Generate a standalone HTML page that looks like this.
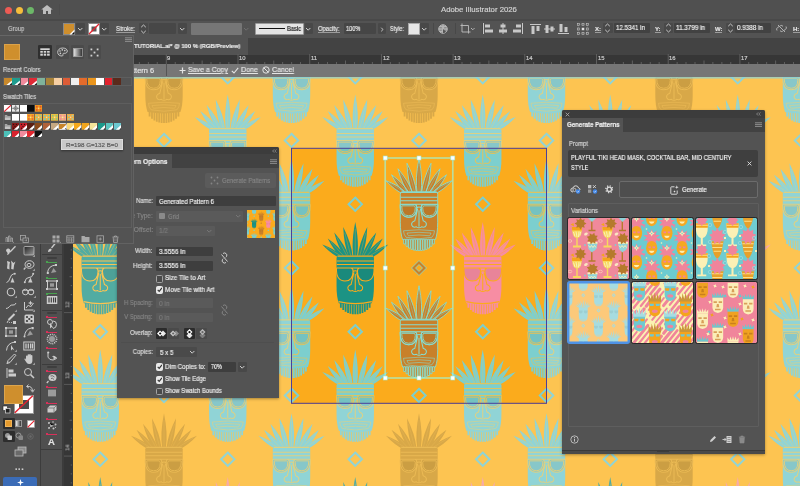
<!DOCTYPE html>
<html><head><meta charset="utf-8"><title>Adobe Illustrator 2026</title>
<style>
*{box-sizing:border-box;margin:0;padding:0}
html,body{width:800px;height:486px;overflow:hidden;background:#535353}
body{font-family:"Liberation Sans",sans-serif;font-size:7px;color:#e6e6e6;position:relative}
.a{position:absolute}
#cv{position:absolute;left:0;top:0}
.t{position:absolute;white-space:nowrap;line-height:1;-webkit-text-stroke:.18px currentColor;will-change:transform}
.fld{position:absolute;background:#3f3f3f;border-radius:1px}
.dfld{position:absolute;background:#595959;border-radius:1px}
.cb{position:absolute;width:7.500px;height:7.500px;border:1px solid #a4a4a4;border-radius:1.500px;background:#4a4a4a}
.cb.on{background:#e8e8e8;border-color:#e8e8e8}
</style></head><body>
<svg id="cv" width="800" height="486" viewBox="0 0 800 486">
<defs><symbol id="hd" overflow="visible"><path d="M-1.9 -11.5Q-4.1 -25.3 0 -46Q4.1 -25.3 1.9 -11.5ZM-6.3 -11.1Q-11.3 -22.3 -12 -41Q-3.7 -24.3 -2.7 -11.9ZM2.7 -11.9Q3.7 -24.3 12 -41Q11.3 -22.3 6.3 -11.1ZM-10.1 -10.7Q-16.9 -19.4 -21 -35.5Q-10.1 -22.8 -6.9 -12.3ZM6.9 -12.3Q10.1 -22.8 21 -35.5Q16.9 -19.4 10.1 -10.7ZM-13.2 -10.4Q-20.9 -16.4 -27.5 -29.5Q-15.5 -21.0 -10.8 -12.6ZM10.8 -12.6Q15.5 -21.0 27.5 -29.5Q20.9 -16.4 13.2 -10.4ZM-15.8 -10.3Q-23.9 -13.7 -33 -23.5Q-20.5 -18.9 -14.2 -12.7ZM14.2 -12.7Q20.5 -18.9 33 -23.5Q23.9 -13.7 15.8 -10.3Z"/><path d="M-16.5 -12.5H16.5Q18.7 -12.5 18.7 -10V18Q18.7 29 16.4 35.3Q0 38.2 -16.4 35.3Q-18.7 29 -18.7 18V-10Q-18.7 -12.5 -16.5 -12.5Z"/><path d="M-15.30 35V39.7H-13.50V35ZM-12.90 35V42.0H-11.10V35ZM-10.50 35V43.8H-8.70V35ZM-8.10 35V45.0H-6.30V35ZM-5.70 35V45.8H-3.90V35ZM-3.30 35V46.2H-1.50V35ZM-0.90 35V46.3H0.90V35ZM1.50 35V46.2H3.30V35ZM3.90 35V45.8H5.70V35ZM6.30 35V45.0H8.10V35ZM8.70 35V43.8H10.50V35ZM11.10 35V42.0H12.90V35ZM13.50 35V39.7H15.30V35Z"/><path d="M-18.8 0.3Q-19.2 13 -10.3 13Q-2.3 13 -2.2 3.2Q-2.2 0.6 -4 0.3ZM18.8 0.3Q19.2 13 10.3 13Q2.3 13 2.2 3.2Q2.2 0.6 4 0.3Z" fill="#000" fill-opacity=".06"/></symbol>
<symbol id="ln" overflow="visible"><path d="M-17.8 -11.9H17.8M-18.5 -7H18.5M-18.5 -3.6H18.5M-19 0H19M-18.8 0.3Q-19.2 13 -10.3 13Q-2.3 13 -2.2 3.2Q-2.2 0.6 -4 0.3M18.8 0.3Q19.2 13 10.3 13Q2.3 13 2.2 3.2Q2.2 0.6 4 0.3M-2.2 3.6Q0 2 2.2 3.6M-1.3 4.5L-4.2 16.5Q-8.2 18 -7.2 21Q-6 23.8 -2.6 22.6Q0 24.5 2.6 22.6Q6 23.8 7.2 21Q8.2 18 4.2 16.5L1.3 4.5M0 6V22.5" fill="none" stroke-width="1.05"/><path d="M0 -12.5L0.0 -39.3M-4.5 -12.5L-10.5 -35.3M4.5 -12.5L10.5 -35.3M-8.5 -12.5L-18.5 -30.9M8.5 -12.5L18.5 -30.9M-12 -12.5L-24.4 -26.1M12 -12.5L24.4 -26.1M-15 -12.5L-29.4 -21.3M15 -12.5L29.4 -21.3" fill="none" stroke-width=".5" stroke-opacity=".7"/></symbol>
<symbol id="mo" overflow="visible"><path d="M-15.5 26.5Q0 24.5 15.5 26.5Q15.5 30 13 33Q0 36 -13 33Q-15.5 30 -15.5 26.5Z M-12 28.8Q0 27.3 12 28.8Q11.5 30.5 10.5 31.5Q0 30 -10.5 31.5Q-11.5 30.5 -12 28.8Z" fill="none" stroke-width=".8" stroke-opacity=".75"/><path d="M-17.3 1.6Q-17.3 11.5 -10.3 11.5Q-3.8 11.5 -3.7 3.6Q-3.7 1.8 -5 1.6ZM17.3 1.6Q17.3 11.5 10.3 11.5Q3.8 11.5 3.7 3.6Q3.7 1.8 5 1.6Z" fill="none" stroke-width=".9"/></symbol>
<symbol id="ch" overflow="visible"><path d="M-16.6 33.6Q0 37.6 16.6 33.6" fill="none" stroke-width="1.1"/></symbol>
<clipPath id="tc"><rect x="291" y="148" width="256" height="256"/></clipPath></defs>
<rect width="800" height="486" fill="#fdc451"/>
<g><g transform="translate(36.5 76.75)"><use href="#hd" fill="#90d4d6"/><use href="#ln" stroke="#e4d07c" stroke-opacity=".9"/><use href="#mo" stroke="#e4d07c"/></g>
<g transform="translate(36.5 204.25)"><use href="#hd" fill="#90d4d6"/><use href="#ln" stroke="#e4d07c" stroke-opacity=".9"/><use href="#mo" stroke="#e4d07c"/></g>
<g transform="translate(36.5 331.75)"><use href="#hd" fill="#90d4d6"/><use href="#ln" stroke="#e4d07c" stroke-opacity=".9"/><use href="#mo" stroke="#e4d07c"/></g>
<g transform="translate(36.5 459.25)"><use href="#hd" fill="#90d4d6"/><use href="#ln" stroke="#e4d07c" stroke-opacity=".9"/><use href="#mo" stroke="#e4d07c"/></g>
<path d="M36.5 133.8L43.2 140.5L36.5 147.2L29.8 140.5Z" fill="none" stroke="#90d4d6" stroke-width="2"/>
<path d="M36.5 261.3L43.2 268.0L36.5 274.7L29.8 268.0Z" fill="none" stroke="#90d4d6" stroke-width="2"/>
<path d="M36.5 388.8L43.2 395.5L36.5 402.2L29.8 395.5Z" fill="none" stroke="#90d4d6" stroke-width="2"/>
<g transform="translate(100.25 13.0)"><use href="#hd" fill="#52aca2"/><use href="#ln" stroke="#fdc451"/><use href="#ch" stroke="#fdc451"/></g>
<g transform="translate(100.25 140.5)"><use href="#hd" fill="#90d4d6"/><use href="#ln" stroke="#e4d07c" stroke-opacity=".9"/><use href="#mo" stroke="#e4d07c"/></g>
<g transform="translate(100.25 268.0)"><use href="#hd" fill="#52aca2"/><use href="#ln" stroke="#fdc451"/><use href="#ch" stroke="#fdc451"/></g>
<g transform="translate(100.25 395.5)"><use href="#hd" fill="#90d4d6"/><use href="#ln" stroke="#e4d07c" stroke-opacity=".9"/><use href="#mo" stroke="#e4d07c"/></g>
<g transform="translate(100.25 523.0)"><use href="#hd" fill="#52aca2"/><use href="#ln" stroke="#fdc451"/><use href="#ch" stroke="#fdc451"/></g>
<path d="M100.25 70.05L106.95 76.75L100.25 83.45L93.55 76.75Z" fill="none" stroke="#90d4d6" stroke-width="2"/>
<path d="M100.25 197.55L106.95 204.25L100.25 210.95L93.55 204.25Z" fill="none" stroke="#90d4d6" stroke-width="2"/>
<path d="M100.25 325.05L106.95 331.75L100.25 338.45L93.55 331.75Z" fill="none" stroke="#90d4d6" stroke-width="2"/>
<path d="M100.25 452.55L106.95 459.25L100.25 465.95L93.55 459.25Z" fill="none" stroke="#90d4d6" stroke-width="2"/>
<g transform="translate(164.0 76.75)"><use href="#hd" fill="#d8a848"/><use href="#ln" stroke="#ecbb55" stroke-opacity=".9"/><use href="#mo" stroke="#ecbb55"/></g>
<g transform="translate(164.0 204.25)"><use href="#hd" fill="#d8a848"/><use href="#ln" stroke="#ecbb55" stroke-opacity=".9"/><use href="#mo" stroke="#ecbb55"/></g>
<g transform="translate(164.0 331.75)"><use href="#hd" fill="#d8a848"/><use href="#ln" stroke="#ecbb55" stroke-opacity=".9"/><use href="#mo" stroke="#ecbb55"/></g>
<g transform="translate(164.0 459.25)"><use href="#hd" fill="#d8a848"/><use href="#ln" stroke="#ecbb55" stroke-opacity=".9"/><use href="#mo" stroke="#ecbb55"/></g>
<path d="M164.0 133.8L170.7 140.5L164.0 147.2L157.3 140.5Z" fill="none" stroke="#90d4d6" stroke-width="2"/>
<path d="M164.0 261.3L170.7 268.0L164.0 274.7L157.3 268.0Z" fill="none" stroke="#d8a848" stroke-width="2"/>
<path d="M164.0 388.8L170.7 395.5L164.0 402.2L157.3 395.5Z" fill="none" stroke="#90d4d6" stroke-width="2"/>
<g transform="translate(227.75 13.0)"><use href="#hd" fill="#f6a9b0"/><use href="#ln" stroke="#fdc451"/><use href="#ch" stroke="#fdc451"/></g>
<g transform="translate(227.75 140.5)"><use href="#hd" fill="#90d4d6"/><use href="#ln" stroke="#e4d07c" stroke-opacity=".9"/><use href="#mo" stroke="#e4d07c"/></g>
<g transform="translate(227.75 268.0)"><use href="#hd" fill="#f6a9b0"/><use href="#ln" stroke="#fdc451"/><use href="#ch" stroke="#fdc451"/></g>
<g transform="translate(227.75 395.5)"><use href="#hd" fill="#90d4d6"/><use href="#ln" stroke="#e4d07c" stroke-opacity=".9"/><use href="#mo" stroke="#e4d07c"/></g>
<g transform="translate(227.75 523.0)"><use href="#hd" fill="#f6a9b0"/><use href="#ln" stroke="#fdc451"/><use href="#ch" stroke="#fdc451"/></g>
<path d="M227.75 70.05L234.45 76.75L227.75 83.45L221.05 76.75Z" fill="none" stroke="#90d4d6" stroke-width="2"/>
<path d="M227.75 197.55L234.45 204.25L227.75 210.95L221.05 204.25Z" fill="none" stroke="#90d4d6" stroke-width="2"/>
<path d="M227.75 325.05L234.45 331.75L227.75 338.45L221.05 331.75Z" fill="none" stroke="#90d4d6" stroke-width="2"/>
<path d="M227.75 452.55L234.45 459.25L227.75 465.95L221.05 459.25Z" fill="none" stroke="#90d4d6" stroke-width="2"/>
<g transform="translate(291.5 76.75)"><use href="#hd" fill="#90d4d6"/><use href="#ln" stroke="#e4d07c" stroke-opacity=".9"/><use href="#mo" stroke="#e4d07c"/></g>
<g transform="translate(291.5 204.25)"><use href="#hd" fill="#90d4d6"/><use href="#ln" stroke="#e4d07c" stroke-opacity=".9"/><use href="#mo" stroke="#e4d07c"/></g>
<g transform="translate(291.5 331.75)"><use href="#hd" fill="#90d4d6"/><use href="#ln" stroke="#e4d07c" stroke-opacity=".9"/><use href="#mo" stroke="#e4d07c"/></g>
<g transform="translate(291.5 459.25)"><use href="#hd" fill="#90d4d6"/><use href="#ln" stroke="#e4d07c" stroke-opacity=".9"/><use href="#mo" stroke="#e4d07c"/></g>
<path d="M291.5 133.8L298.2 140.5L291.5 147.2L284.8 140.5Z" fill="none" stroke="#90d4d6" stroke-width="2"/>
<path d="M291.5 261.3L298.2 268.0L291.5 274.7L284.8 268.0Z" fill="none" stroke="#90d4d6" stroke-width="2"/>
<path d="M291.5 388.8L298.2 395.5L291.5 402.2L284.8 395.5Z" fill="none" stroke="#90d4d6" stroke-width="2"/>
<g transform="translate(355.25 13.0)"><use href="#hd" fill="#52aca2"/><use href="#ln" stroke="#fdc451"/><use href="#ch" stroke="#fdc451"/></g>
<g transform="translate(355.25 140.5)"><use href="#hd" fill="#90d4d6"/><use href="#ln" stroke="#e4d07c" stroke-opacity=".9"/><use href="#mo" stroke="#e4d07c"/></g>
<g transform="translate(355.25 268.0)"><use href="#hd" fill="#52aca2"/><use href="#ln" stroke="#fdc451"/><use href="#ch" stroke="#fdc451"/></g>
<g transform="translate(355.25 395.5)"><use href="#hd" fill="#90d4d6"/><use href="#ln" stroke="#e4d07c" stroke-opacity=".9"/><use href="#mo" stroke="#e4d07c"/></g>
<g transform="translate(355.25 523.0)"><use href="#hd" fill="#52aca2"/><use href="#ln" stroke="#fdc451"/><use href="#ch" stroke="#fdc451"/></g>
<path d="M355.25 70.05L361.95 76.75L355.25 83.45L348.55 76.75Z" fill="none" stroke="#90d4d6" stroke-width="2"/>
<path d="M355.25 197.55L361.95 204.25L355.25 210.95L348.55 204.25Z" fill="none" stroke="#90d4d6" stroke-width="2"/>
<path d="M355.25 325.05L361.95 331.75L355.25 338.45L348.55 331.75Z" fill="none" stroke="#90d4d6" stroke-width="2"/>
<path d="M355.25 452.55L361.95 459.25L355.25 465.95L348.55 459.25Z" fill="none" stroke="#90d4d6" stroke-width="2"/>
<g transform="translate(419.0 76.75)"><use href="#hd" fill="#d8a848"/><use href="#ln" stroke="#ecbb55" stroke-opacity=".9"/><use href="#mo" stroke="#ecbb55"/></g>
<g transform="translate(419.0 204.25)"><use href="#hd" fill="#d8a848"/><use href="#ln" stroke="#ecbb55" stroke-opacity=".9"/><use href="#mo" stroke="#ecbb55"/></g>
<g transform="translate(419.0 331.75)"><use href="#hd" fill="#d8a848"/><use href="#ln" stroke="#ecbb55" stroke-opacity=".9"/><use href="#mo" stroke="#ecbb55"/></g>
<g transform="translate(419.0 459.25)"><use href="#hd" fill="#d8a848"/><use href="#ln" stroke="#ecbb55" stroke-opacity=".9"/><use href="#mo" stroke="#ecbb55"/></g>
<path d="M419.0 133.8L425.7 140.5L419.0 147.2L412.3 140.5Z" fill="none" stroke="#90d4d6" stroke-width="2"/>
<path d="M419.0 261.3L425.7 268.0L419.0 274.7L412.3 268.0Z" fill="none" stroke="#d8a848" stroke-width="2"/>
<path d="M419.0 388.8L425.7 395.5L419.0 402.2L412.3 395.5Z" fill="none" stroke="#90d4d6" stroke-width="2"/>
<g transform="translate(482.75 13.0)"><use href="#hd" fill="#f6a9b0"/><use href="#ln" stroke="#fdc451"/><use href="#ch" stroke="#fdc451"/></g>
<g transform="translate(482.75 140.5)"><use href="#hd" fill="#90d4d6"/><use href="#ln" stroke="#e4d07c" stroke-opacity=".9"/><use href="#mo" stroke="#e4d07c"/></g>
<g transform="translate(482.75 268.0)"><use href="#hd" fill="#f6a9b0"/><use href="#ln" stroke="#fdc451"/><use href="#ch" stroke="#fdc451"/></g>
<g transform="translate(482.75 395.5)"><use href="#hd" fill="#90d4d6"/><use href="#ln" stroke="#e4d07c" stroke-opacity=".9"/><use href="#mo" stroke="#e4d07c"/></g>
<g transform="translate(482.75 523.0)"><use href="#hd" fill="#f6a9b0"/><use href="#ln" stroke="#fdc451"/><use href="#ch" stroke="#fdc451"/></g>
<path d="M482.75 70.05L489.45 76.75L482.75 83.45L476.05 76.75Z" fill="none" stroke="#90d4d6" stroke-width="2"/>
<path d="M482.75 197.55L489.45 204.25L482.75 210.95L476.05 204.25Z" fill="none" stroke="#90d4d6" stroke-width="2"/>
<path d="M482.75 325.05L489.45 331.75L482.75 338.45L476.05 331.75Z" fill="none" stroke="#90d4d6" stroke-width="2"/>
<path d="M482.75 452.55L489.45 459.25L482.75 465.95L476.05 459.25Z" fill="none" stroke="#90d4d6" stroke-width="2"/>
<g transform="translate(546.5 76.75)"><use href="#hd" fill="#90d4d6"/><use href="#ln" stroke="#e4d07c" stroke-opacity=".9"/><use href="#mo" stroke="#e4d07c"/></g>
<g transform="translate(546.5 204.25)"><use href="#hd" fill="#90d4d6"/><use href="#ln" stroke="#e4d07c" stroke-opacity=".9"/><use href="#mo" stroke="#e4d07c"/></g>
<g transform="translate(546.5 331.75)"><use href="#hd" fill="#90d4d6"/><use href="#ln" stroke="#e4d07c" stroke-opacity=".9"/><use href="#mo" stroke="#e4d07c"/></g>
<g transform="translate(546.5 459.25)"><use href="#hd" fill="#90d4d6"/><use href="#ln" stroke="#e4d07c" stroke-opacity=".9"/><use href="#mo" stroke="#e4d07c"/></g>
<path d="M546.5 133.8L553.2 140.5L546.5 147.2L539.8 140.5Z" fill="none" stroke="#90d4d6" stroke-width="2"/>
<path d="M546.5 261.3L553.2 268.0L546.5 274.7L539.8 268.0Z" fill="none" stroke="#90d4d6" stroke-width="2"/>
<path d="M546.5 388.8L553.2 395.5L546.5 402.2L539.8 395.5Z" fill="none" stroke="#90d4d6" stroke-width="2"/>
<g transform="translate(610.25 13.0)"><use href="#hd" fill="#52aca2"/><use href="#ln" stroke="#fdc451"/><use href="#ch" stroke="#fdc451"/></g>
<g transform="translate(610.25 140.5)"><use href="#hd" fill="#90d4d6"/><use href="#ln" stroke="#e4d07c" stroke-opacity=".9"/><use href="#mo" stroke="#e4d07c"/></g>
<g transform="translate(610.25 268.0)"><use href="#hd" fill="#52aca2"/><use href="#ln" stroke="#fdc451"/><use href="#ch" stroke="#fdc451"/></g>
<g transform="translate(610.25 395.5)"><use href="#hd" fill="#90d4d6"/><use href="#ln" stroke="#e4d07c" stroke-opacity=".9"/><use href="#mo" stroke="#e4d07c"/></g>
<g transform="translate(610.25 523.0)"><use href="#hd" fill="#52aca2"/><use href="#ln" stroke="#fdc451"/><use href="#ch" stroke="#fdc451"/></g>
<path d="M610.25 70.05L616.95 76.75L610.25 83.45L603.55 76.75Z" fill="none" stroke="#90d4d6" stroke-width="2"/>
<path d="M610.25 197.55L616.95 204.25L610.25 210.95L603.55 204.25Z" fill="none" stroke="#90d4d6" stroke-width="2"/>
<path d="M610.25 325.05L616.95 331.75L610.25 338.45L603.55 331.75Z" fill="none" stroke="#90d4d6" stroke-width="2"/>
<path d="M610.25 452.55L616.95 459.25L610.25 465.95L603.55 459.25Z" fill="none" stroke="#90d4d6" stroke-width="2"/>
<g transform="translate(674.0 76.75)"><use href="#hd" fill="#d8a848"/><use href="#ln" stroke="#ecbb55" stroke-opacity=".9"/><use href="#mo" stroke="#ecbb55"/></g>
<g transform="translate(674.0 204.25)"><use href="#hd" fill="#d8a848"/><use href="#ln" stroke="#ecbb55" stroke-opacity=".9"/><use href="#mo" stroke="#ecbb55"/></g>
<g transform="translate(674.0 331.75)"><use href="#hd" fill="#d8a848"/><use href="#ln" stroke="#ecbb55" stroke-opacity=".9"/><use href="#mo" stroke="#ecbb55"/></g>
<g transform="translate(674.0 459.25)"><use href="#hd" fill="#d8a848"/><use href="#ln" stroke="#ecbb55" stroke-opacity=".9"/><use href="#mo" stroke="#ecbb55"/></g>
<path d="M674.0 133.8L680.7 140.5L674.0 147.2L667.3 140.5Z" fill="none" stroke="#90d4d6" stroke-width="2"/>
<path d="M674.0 261.3L680.7 268.0L674.0 274.7L667.3 268.0Z" fill="none" stroke="#d8a848" stroke-width="2"/>
<path d="M674.0 388.8L680.7 395.5L674.0 402.2L667.3 395.5Z" fill="none" stroke="#90d4d6" stroke-width="2"/>
<g transform="translate(737.75 13.0)"><use href="#hd" fill="#f6a9b0"/><use href="#ln" stroke="#fdc451"/><use href="#ch" stroke="#fdc451"/></g>
<g transform="translate(737.75 140.5)"><use href="#hd" fill="#90d4d6"/><use href="#ln" stroke="#e4d07c" stroke-opacity=".9"/><use href="#mo" stroke="#e4d07c"/></g>
<g transform="translate(737.75 268.0)"><use href="#hd" fill="#f6a9b0"/><use href="#ln" stroke="#fdc451"/><use href="#ch" stroke="#fdc451"/></g>
<g transform="translate(737.75 395.5)"><use href="#hd" fill="#90d4d6"/><use href="#ln" stroke="#e4d07c" stroke-opacity=".9"/><use href="#mo" stroke="#e4d07c"/></g>
<g transform="translate(737.75 523.0)"><use href="#hd" fill="#f6a9b0"/><use href="#ln" stroke="#fdc451"/><use href="#ch" stroke="#fdc451"/></g>
<path d="M737.75 70.05L744.45 76.75L737.75 83.45L731.05 76.75Z" fill="none" stroke="#90d4d6" stroke-width="2"/>
<path d="M737.75 197.55L744.45 204.25L737.75 210.95L731.05 204.25Z" fill="none" stroke="#90d4d6" stroke-width="2"/>
<path d="M737.75 325.05L744.45 331.75L737.75 338.45L731.05 331.75Z" fill="none" stroke="#90d4d6" stroke-width="2"/>
<path d="M737.75 452.55L744.45 459.25L737.75 465.95L731.05 459.25Z" fill="none" stroke="#90d4d6" stroke-width="2"/>
<g transform="translate(801.5 76.75)"><use href="#hd" fill="#90d4d6"/><use href="#ln" stroke="#e4d07c" stroke-opacity=".9"/><use href="#mo" stroke="#e4d07c"/></g>
<g transform="translate(801.5 204.25)"><use href="#hd" fill="#90d4d6"/><use href="#ln" stroke="#e4d07c" stroke-opacity=".9"/><use href="#mo" stroke="#e4d07c"/></g>
<g transform="translate(801.5 331.75)"><use href="#hd" fill="#90d4d6"/><use href="#ln" stroke="#e4d07c" stroke-opacity=".9"/><use href="#mo" stroke="#e4d07c"/></g>
<g transform="translate(801.5 459.25)"><use href="#hd" fill="#90d4d6"/><use href="#ln" stroke="#e4d07c" stroke-opacity=".9"/><use href="#mo" stroke="#e4d07c"/></g>
<path d="M801.5 133.8L808.2 140.5L801.5 147.2L794.8 140.5Z" fill="none" stroke="#90d4d6" stroke-width="2"/>
<path d="M801.5 261.3L808.2 268.0L801.5 274.7L794.8 268.0Z" fill="none" stroke="#90d4d6" stroke-width="2"/>
<path d="M801.5 388.8L808.2 395.5L801.5 402.2L794.8 395.5Z" fill="none" stroke="#90d4d6" stroke-width="2"/></g>
<g clip-path="url(#tc)"><rect x="291" y="148" width="256" height="256" fill="#fbab1c"/>
<g transform="translate(36.5 76.75)"><use href="#hd" fill="#7ccfce"/><use href="#ln" stroke="#e8c255" stroke-opacity=".9"/><use href="#mo" stroke="#e8c255"/></g>
<g transform="translate(36.5 204.25)"><use href="#hd" fill="#7ccfce"/><use href="#ln" stroke="#e8c255" stroke-opacity=".9"/><use href="#mo" stroke="#e8c255"/></g>
<g transform="translate(36.5 331.75)"><use href="#hd" fill="#7ccfce"/><use href="#ln" stroke="#e8c255" stroke-opacity=".9"/><use href="#mo" stroke="#e8c255"/></g>
<g transform="translate(36.5 459.25)"><use href="#hd" fill="#7ccfce"/><use href="#ln" stroke="#e8c255" stroke-opacity=".9"/><use href="#mo" stroke="#e8c255"/></g>
<path d="M36.5 133.8L43.2 140.5L36.5 147.2L29.8 140.5Z" fill="none" stroke="#7ccfce" stroke-width="2"/>
<path d="M36.5 261.3L43.2 268.0L36.5 274.7L29.8 268.0Z" fill="none" stroke="#7ccfce" stroke-width="2"/>
<path d="M36.5 388.8L43.2 395.5L36.5 402.2L29.8 395.5Z" fill="none" stroke="#7ccfce" stroke-width="2"/>
<g transform="translate(100.25 13.0)"><use href="#hd" fill="#1c9384"/><use href="#ln" stroke="#fbab1c"/><use href="#ch" stroke="#fbab1c"/></g>
<g transform="translate(100.25 140.5)"><use href="#hd" fill="#7ccfce"/><use href="#ln" stroke="#e8c255" stroke-opacity=".9"/><use href="#mo" stroke="#e8c255"/></g>
<g transform="translate(100.25 268.0)"><use href="#hd" fill="#1c9384"/><use href="#ln" stroke="#fbab1c"/><use href="#ch" stroke="#fbab1c"/></g>
<g transform="translate(100.25 395.5)"><use href="#hd" fill="#7ccfce"/><use href="#ln" stroke="#e8c255" stroke-opacity=".9"/><use href="#mo" stroke="#e8c255"/></g>
<g transform="translate(100.25 523.0)"><use href="#hd" fill="#1c9384"/><use href="#ln" stroke="#fbab1c"/><use href="#ch" stroke="#fbab1c"/></g>
<path d="M100.25 70.05L106.95 76.75L100.25 83.45L93.55 76.75Z" fill="none" stroke="#7ccfce" stroke-width="2"/>
<path d="M100.25 197.55L106.95 204.25L100.25 210.95L93.55 204.25Z" fill="none" stroke="#7ccfce" stroke-width="2"/>
<path d="M100.25 325.05L106.95 331.75L100.25 338.45L93.55 331.75Z" fill="none" stroke="#7ccfce" stroke-width="2"/>
<path d="M100.25 452.55L106.95 459.25L100.25 465.95L93.55 459.25Z" fill="none" stroke="#7ccfce" stroke-width="2"/>
<g transform="translate(164.0 76.75)"><use href="#hd" fill="#c8802a"/><use href="#ln" stroke="#86dccf" stroke-opacity=".9"/><use href="#mo" stroke="#86dccf"/></g>
<g transform="translate(164.0 204.25)"><use href="#hd" fill="#c8802a"/><use href="#ln" stroke="#86dccf" stroke-opacity=".9"/><use href="#mo" stroke="#86dccf"/></g>
<g transform="translate(164.0 331.75)"><use href="#hd" fill="#c8802a"/><use href="#ln" stroke="#86dccf" stroke-opacity=".9"/><use href="#mo" stroke="#86dccf"/></g>
<g transform="translate(164.0 459.25)"><use href="#hd" fill="#c8802a"/><use href="#ln" stroke="#86dccf" stroke-opacity=".9"/><use href="#mo" stroke="#86dccf"/></g>
<path d="M164.0 133.8L170.7 140.5L164.0 147.2L157.3 140.5Z" fill="none" stroke="#7ccfce" stroke-width="2"/>
<path d="M164.0 260.5L171.5 268.0L164.0 275.5L156.5 268.0Z M164.0 264.5L167.5 268.0L164.0 271.5L160.5 268.0Z" fill="#c8802a" fill-rule="evenodd" stroke="#86dccf" stroke-width=".8"/>
<path d="M164.0 388.8L170.7 395.5L164.0 402.2L157.3 395.5Z" fill="none" stroke="#7ccfce" stroke-width="2"/>
<g transform="translate(227.75 13.0)"><use href="#hd" fill="#f78da3"/><use href="#ln" stroke="#fbab1c"/><use href="#ch" stroke="#fbab1c"/></g>
<g transform="translate(227.75 140.5)"><use href="#hd" fill="#7ccfce"/><use href="#ln" stroke="#e8c255" stroke-opacity=".9"/><use href="#mo" stroke="#e8c255"/></g>
<g transform="translate(227.75 268.0)"><use href="#hd" fill="#f78da3"/><use href="#ln" stroke="#fbab1c"/><use href="#ch" stroke="#fbab1c"/></g>
<g transform="translate(227.75 395.5)"><use href="#hd" fill="#7ccfce"/><use href="#ln" stroke="#e8c255" stroke-opacity=".9"/><use href="#mo" stroke="#e8c255"/></g>
<g transform="translate(227.75 523.0)"><use href="#hd" fill="#f78da3"/><use href="#ln" stroke="#fbab1c"/><use href="#ch" stroke="#fbab1c"/></g>
<path d="M227.75 70.05L234.45 76.75L227.75 83.45L221.05 76.75Z" fill="none" stroke="#7ccfce" stroke-width="2"/>
<path d="M227.75 197.55L234.45 204.25L227.75 210.95L221.05 204.25Z" fill="none" stroke="#7ccfce" stroke-width="2"/>
<path d="M227.75 325.05L234.45 331.75L227.75 338.45L221.05 331.75Z" fill="none" stroke="#7ccfce" stroke-width="2"/>
<path d="M227.75 452.55L234.45 459.25L227.75 465.95L221.05 459.25Z" fill="none" stroke="#7ccfce" stroke-width="2"/>
<g transform="translate(291.5 76.75)"><use href="#hd" fill="#7ccfce"/><use href="#ln" stroke="#e8c255" stroke-opacity=".9"/><use href="#mo" stroke="#e8c255"/></g>
<g transform="translate(291.5 204.25)"><use href="#hd" fill="#7ccfce"/><use href="#ln" stroke="#e8c255" stroke-opacity=".9"/><use href="#mo" stroke="#e8c255"/></g>
<g transform="translate(291.5 331.75)"><use href="#hd" fill="#7ccfce"/><use href="#ln" stroke="#e8c255" stroke-opacity=".9"/><use href="#mo" stroke="#e8c255"/></g>
<g transform="translate(291.5 459.25)"><use href="#hd" fill="#7ccfce"/><use href="#ln" stroke="#e8c255" stroke-opacity=".9"/><use href="#mo" stroke="#e8c255"/></g>
<path d="M291.5 133.8L298.2 140.5L291.5 147.2L284.8 140.5Z" fill="none" stroke="#7ccfce" stroke-width="2"/>
<path d="M291.5 261.3L298.2 268.0L291.5 274.7L284.8 268.0Z" fill="none" stroke="#7ccfce" stroke-width="2"/>
<path d="M291.5 388.8L298.2 395.5L291.5 402.2L284.8 395.5Z" fill="none" stroke="#7ccfce" stroke-width="2"/>
<g transform="translate(355.25 13.0)"><use href="#hd" fill="#1c9384"/><use href="#ln" stroke="#fbab1c"/><use href="#ch" stroke="#fbab1c"/></g>
<g transform="translate(355.25 140.5)"><use href="#hd" fill="#7ccfce"/><use href="#ln" stroke="#e8c255" stroke-opacity=".9"/><use href="#mo" stroke="#e8c255"/></g>
<g transform="translate(355.25 268.0)"><use href="#hd" fill="#1c9384"/><use href="#ln" stroke="#fbab1c"/><use href="#ch" stroke="#fbab1c"/></g>
<g transform="translate(355.25 395.5)"><use href="#hd" fill="#7ccfce"/><use href="#ln" stroke="#e8c255" stroke-opacity=".9"/><use href="#mo" stroke="#e8c255"/></g>
<g transform="translate(355.25 523.0)"><use href="#hd" fill="#1c9384"/><use href="#ln" stroke="#fbab1c"/><use href="#ch" stroke="#fbab1c"/></g>
<path d="M355.25 70.05L361.95 76.75L355.25 83.45L348.55 76.75Z" fill="none" stroke="#7ccfce" stroke-width="2"/>
<path d="M355.25 197.55L361.95 204.25L355.25 210.95L348.55 204.25Z" fill="none" stroke="#7ccfce" stroke-width="2"/>
<path d="M355.25 325.05L361.95 331.75L355.25 338.45L348.55 331.75Z" fill="none" stroke="#7ccfce" stroke-width="2"/>
<path d="M355.25 452.55L361.95 459.25L355.25 465.95L348.55 459.25Z" fill="none" stroke="#7ccfce" stroke-width="2"/>
<g transform="translate(419.0 76.75)"><use href="#hd" fill="#c8802a" stroke="#86dccf" stroke-width=".9"/><use href="#ln" stroke="#86dccf"/><use href="#mo" stroke="#86dccf"/></g>
<g transform="translate(419.0 204.25)"><use href="#hd" fill="#c8802a" stroke="#86dccf" stroke-width=".9"/><use href="#ln" stroke="#86dccf"/><use href="#mo" stroke="#86dccf"/></g>
<g transform="translate(419.0 331.75)"><use href="#hd" fill="#c8802a" stroke="#86dccf" stroke-width=".9"/><use href="#ln" stroke="#86dccf"/><use href="#mo" stroke="#86dccf"/></g>
<g transform="translate(419.0 459.25)"><use href="#hd" fill="#c8802a" stroke="#86dccf" stroke-width=".9"/><use href="#ln" stroke="#86dccf"/><use href="#mo" stroke="#86dccf"/></g>
<path d="M419.0 133.8L425.7 140.5L419.0 147.2L412.3 140.5Z" fill="none" stroke="#7ccfce" stroke-width="2"/>
<path d="M419.0 260.5L426.5 268.0L419.0 275.5L411.5 268.0Z M419.0 264.5L422.5 268.0L419.0 271.5L415.5 268.0Z" fill="#c8802a" fill-rule="evenodd" stroke="#86dccf" stroke-width=".8"/>
<path d="M419.0 388.8L425.7 395.5L419.0 402.2L412.3 395.5Z" fill="none" stroke="#7ccfce" stroke-width="2"/>
<g transform="translate(482.75 13.0)"><use href="#hd" fill="#f78da3"/><use href="#ln" stroke="#fbab1c"/><use href="#ch" stroke="#fbab1c"/></g>
<g transform="translate(482.75 140.5)"><use href="#hd" fill="#7ccfce"/><use href="#ln" stroke="#e8c255" stroke-opacity=".9"/><use href="#mo" stroke="#e8c255"/></g>
<g transform="translate(482.75 268.0)"><use href="#hd" fill="#f78da3"/><use href="#ln" stroke="#fbab1c"/><use href="#ch" stroke="#fbab1c"/></g>
<g transform="translate(482.75 395.5)"><use href="#hd" fill="#7ccfce"/><use href="#ln" stroke="#e8c255" stroke-opacity=".9"/><use href="#mo" stroke="#e8c255"/></g>
<g transform="translate(482.75 523.0)"><use href="#hd" fill="#f78da3"/><use href="#ln" stroke="#fbab1c"/><use href="#ch" stroke="#fbab1c"/></g>
<path d="M482.75 70.05L489.45 76.75L482.75 83.45L476.05 76.75Z" fill="none" stroke="#7ccfce" stroke-width="2"/>
<path d="M482.75 197.55L489.45 204.25L482.75 210.95L476.05 204.25Z" fill="none" stroke="#7ccfce" stroke-width="2"/>
<path d="M482.75 325.05L489.45 331.75L482.75 338.45L476.05 331.75Z" fill="none" stroke="#7ccfce" stroke-width="2"/>
<path d="M482.75 452.55L489.45 459.25L482.75 465.95L476.05 459.25Z" fill="none" stroke="#7ccfce" stroke-width="2"/>
<g transform="translate(546.5 76.75)"><use href="#hd" fill="#7ccfce"/><use href="#ln" stroke="#e8c255" stroke-opacity=".9"/><use href="#mo" stroke="#e8c255"/></g>
<g transform="translate(546.5 204.25)"><use href="#hd" fill="#7ccfce"/><use href="#ln" stroke="#e8c255" stroke-opacity=".9"/><use href="#mo" stroke="#e8c255"/></g>
<g transform="translate(546.5 331.75)"><use href="#hd" fill="#7ccfce"/><use href="#ln" stroke="#e8c255" stroke-opacity=".9"/><use href="#mo" stroke="#e8c255"/></g>
<g transform="translate(546.5 459.25)"><use href="#hd" fill="#7ccfce"/><use href="#ln" stroke="#e8c255" stroke-opacity=".9"/><use href="#mo" stroke="#e8c255"/></g>
<path d="M546.5 133.8L553.2 140.5L546.5 147.2L539.8 140.5Z" fill="none" stroke="#7ccfce" stroke-width="2"/>
<path d="M546.5 261.3L553.2 268.0L546.5 274.7L539.8 268.0Z" fill="none" stroke="#7ccfce" stroke-width="2"/>
<path d="M546.5 388.8L553.2 395.5L546.5 402.2L539.8 395.5Z" fill="none" stroke="#7ccfce" stroke-width="2"/>
<g transform="translate(610.25 13.0)"><use href="#hd" fill="#1c9384"/><use href="#ln" stroke="#fbab1c"/><use href="#ch" stroke="#fbab1c"/></g>
<g transform="translate(610.25 140.5)"><use href="#hd" fill="#7ccfce"/><use href="#ln" stroke="#e8c255" stroke-opacity=".9"/><use href="#mo" stroke="#e8c255"/></g>
<g transform="translate(610.25 268.0)"><use href="#hd" fill="#1c9384"/><use href="#ln" stroke="#fbab1c"/><use href="#ch" stroke="#fbab1c"/></g>
<g transform="translate(610.25 395.5)"><use href="#hd" fill="#7ccfce"/><use href="#ln" stroke="#e8c255" stroke-opacity=".9"/><use href="#mo" stroke="#e8c255"/></g>
<g transform="translate(610.25 523.0)"><use href="#hd" fill="#1c9384"/><use href="#ln" stroke="#fbab1c"/><use href="#ch" stroke="#fbab1c"/></g>
<path d="M610.25 70.05L616.95 76.75L610.25 83.45L603.55 76.75Z" fill="none" stroke="#7ccfce" stroke-width="2"/>
<path d="M610.25 197.55L616.95 204.25L610.25 210.95L603.55 204.25Z" fill="none" stroke="#7ccfce" stroke-width="2"/>
<path d="M610.25 325.05L616.95 331.75L610.25 338.45L603.55 331.75Z" fill="none" stroke="#7ccfce" stroke-width="2"/>
<path d="M610.25 452.55L616.95 459.25L610.25 465.95L603.55 459.25Z" fill="none" stroke="#7ccfce" stroke-width="2"/>
<g transform="translate(674.0 76.75)"><use href="#hd" fill="#c8802a"/><use href="#ln" stroke="#86dccf" stroke-opacity=".9"/><use href="#mo" stroke="#86dccf"/></g>
<g transform="translate(674.0 204.25)"><use href="#hd" fill="#c8802a"/><use href="#ln" stroke="#86dccf" stroke-opacity=".9"/><use href="#mo" stroke="#86dccf"/></g>
<g transform="translate(674.0 331.75)"><use href="#hd" fill="#c8802a"/><use href="#ln" stroke="#86dccf" stroke-opacity=".9"/><use href="#mo" stroke="#86dccf"/></g>
<g transform="translate(674.0 459.25)"><use href="#hd" fill="#c8802a"/><use href="#ln" stroke="#86dccf" stroke-opacity=".9"/><use href="#mo" stroke="#86dccf"/></g>
<path d="M674.0 133.8L680.7 140.5L674.0 147.2L667.3 140.5Z" fill="none" stroke="#7ccfce" stroke-width="2"/>
<path d="M674.0 260.5L681.5 268.0L674.0 275.5L666.5 268.0Z M674.0 264.5L677.5 268.0L674.0 271.5L670.5 268.0Z" fill="#c8802a" fill-rule="evenodd" stroke="#86dccf" stroke-width=".8"/>
<path d="M674.0 388.8L680.7 395.5L674.0 402.2L667.3 395.5Z" fill="none" stroke="#7ccfce" stroke-width="2"/>
<g transform="translate(737.75 13.0)"><use href="#hd" fill="#f78da3"/><use href="#ln" stroke="#fbab1c"/><use href="#ch" stroke="#fbab1c"/></g>
<g transform="translate(737.75 140.5)"><use href="#hd" fill="#7ccfce"/><use href="#ln" stroke="#e8c255" stroke-opacity=".9"/><use href="#mo" stroke="#e8c255"/></g>
<g transform="translate(737.75 268.0)"><use href="#hd" fill="#f78da3"/><use href="#ln" stroke="#fbab1c"/><use href="#ch" stroke="#fbab1c"/></g>
<g transform="translate(737.75 395.5)"><use href="#hd" fill="#7ccfce"/><use href="#ln" stroke="#e8c255" stroke-opacity=".9"/><use href="#mo" stroke="#e8c255"/></g>
<g transform="translate(737.75 523.0)"><use href="#hd" fill="#f78da3"/><use href="#ln" stroke="#fbab1c"/><use href="#ch" stroke="#fbab1c"/></g>
<path d="M737.75 70.05L744.45 76.75L737.75 83.45L731.05 76.75Z" fill="none" stroke="#7ccfce" stroke-width="2"/>
<path d="M737.75 197.55L744.45 204.25L737.75 210.95L731.05 204.25Z" fill="none" stroke="#7ccfce" stroke-width="2"/>
<path d="M737.75 325.05L744.45 331.75L737.75 338.45L731.05 331.75Z" fill="none" stroke="#7ccfce" stroke-width="2"/>
<path d="M737.75 452.55L744.45 459.25L737.75 465.95L731.05 459.25Z" fill="none" stroke="#7ccfce" stroke-width="2"/>
<g transform="translate(801.5 76.75)"><use href="#hd" fill="#7ccfce"/><use href="#ln" stroke="#e8c255" stroke-opacity=".9"/><use href="#mo" stroke="#e8c255"/></g>
<g transform="translate(801.5 204.25)"><use href="#hd" fill="#7ccfce"/><use href="#ln" stroke="#e8c255" stroke-opacity=".9"/><use href="#mo" stroke="#e8c255"/></g>
<g transform="translate(801.5 331.75)"><use href="#hd" fill="#7ccfce"/><use href="#ln" stroke="#e8c255" stroke-opacity=".9"/><use href="#mo" stroke="#e8c255"/></g>
<g transform="translate(801.5 459.25)"><use href="#hd" fill="#7ccfce"/><use href="#ln" stroke="#e8c255" stroke-opacity=".9"/><use href="#mo" stroke="#e8c255"/></g>
<path d="M801.5 133.8L808.2 140.5L801.5 147.2L794.8 140.5Z" fill="none" stroke="#7ccfce" stroke-width="2"/>
<path d="M801.5 261.3L808.2 268.0L801.5 274.7L794.8 268.0Z" fill="none" stroke="#7ccfce" stroke-width="2"/>
<path d="M801.5 388.8L808.2 395.5L801.5 402.2L794.8 395.5Z" fill="none" stroke="#7ccfce" stroke-width="2"/></g>
<rect x="291.5" y="148.3" width="255" height="255" fill="none" stroke="#4b3f9a" stroke-width="1"/>
<rect x="72.700" y="77.300" width="728" height="1.100" fill="#86d3dc"/>
<rect x="385.2" y="158" width="67.6" height="220" fill="none" stroke="#8ffff4" stroke-opacity=".6" stroke-width="1.700"/><rect x="383.2" y="156" width="4" height="4" fill="#fff" stroke="#9fe6d8" stroke-width=".6"/><rect x="383.2" y="266" width="4" height="4" fill="#fff" stroke="#9fe6d8" stroke-width=".6"/><rect x="383.2" y="376" width="4" height="4" fill="#fff" stroke="#9fe6d8" stroke-width=".6"/><rect x="417" y="156" width="4" height="4" fill="#fff" stroke="#9fe6d8" stroke-width=".6"/><rect x="417" y="376" width="4" height="4" fill="#fff" stroke="#9fe6d8" stroke-width=".6"/><rect x="450.8" y="156" width="4" height="4" fill="#fff" stroke="#9fe6d8" stroke-width=".6"/><rect x="450.8" y="266" width="4" height="4" fill="#fff" stroke="#9fe6d8" stroke-width=".6"/><rect x="450.8" y="376" width="4" height="4" fill="#fff" stroke="#9fe6d8" stroke-width=".6"/>
</svg>

<!-- ===== top bars ===== -->
<div class="a" id="titlebar" style="left:0;top:0;width:800px;height:20.5px;background:#505050;border-bottom:2px solid #494949"></div>
<div class="a" style="left:4.5px;top:6.5px;width:7px;height:7px;border-radius:50%;background:#ee5b54"></div>
<div class="a" style="left:15.5px;top:6.5px;width:7px;height:7px;border-radius:50%;background:#f6bd3b"></div>
<div class="a" style="left:26.5px;top:6.5px;width:7px;height:7px;border-radius:50%;background:#6cb868"></div>
<svg class="a" style="left:41px;top:5px" width="12" height="9" viewBox="0 0 12 9"><path d="M6 0L0.3 4.6H2V9H5V6H7V9H10V4.6H11.7Z" fill="#bdbdbd"/></svg>
<div class="a" style="left:59px;top:4px;width:1px;height:11px;background:#4c4c4c"></div>
<div class="t" style="left:441px;top:5.5px;font-size:7.6px;color:#d2d2d2;transform:scaleX(1.022);transform-origin:left center">Adobe Illustrator 2026</div>

<div class="a" id="ctrlbar" style="left:0;top:20.5px;width:800px;height:17.5px;background:#535353"></div>
<div class="t" style="left:8px;top:25.100px;font-size:7px;color:#c4c4c4;transform:scaleX(0.848);transform-origin:left center">Group</div>
<svg class="a" style="left:62.5px;top:22.5px" width="12" height="12" viewBox="0 0 12 12"><rect x=".5" y=".5" width="11" height="11" fill="#cf8f2d" stroke="#8a8a8a"/><path d="M11.5 6.5V11.5H6.5Z" fill="#fff"/><path d="M11.5 8.5V11.5H8.5Z" fill="#111"/></svg>
<div class="a" style="left:75.5px;top:23px;width:9px;height:11px;background:#484848;border-radius:1px"></div><svg class="a" style="left:76.8px;top:26.7px" width="6.4" height="4.2" viewBox="-1 -1 6.4 4.2"><path d="M0 0L2.2 2.2L4.4 0" fill="none" stroke="#cfcfcf" stroke-width="1"/></svg>
<svg class="a" style="left:87.5px;top:22.5px" width="12" height="12" viewBox="0 0 12 12"><rect x=".5" y=".5" width="11" height="11" fill="#fff" stroke="#8a8a8a"/><rect x="3.5" y="3.5" width="5" height="5" fill="#5a5a5a"/><path d="M1 11L11 1" stroke="#e8222e" stroke-width="1.3"/></svg>
<div class="a" style="left:100px;top:23px;width:9px;height:11px;background:#484848;border-radius:1px"></div><svg class="a" style="left:101.0px;top:26.7px" width="6.4" height="4.2" viewBox="-1 -1 6.4 4.2"><path d="M0 0L2.2 2.2L4.4 0" fill="none" stroke="#cfcfcf" stroke-width="1"/></svg>
<div class="t" style="left:116px;top:25.800px;font-size:6.600px;color:#ececec;transform:scaleX(0.909);transform-origin:left center">Stroke:</div><div class="a" style="left:116px;top:31.700px;width:19px;height:0;border-top:1px solid #9c9c9c"></div>
<div class="a" style="left:138.6px;top:23.400px;width:9.200px;height:9.800px;background:#494949;border-radius:1px"></div><svg class="a" style="left:139.5px;top:22.5px" width="7" height="12" viewBox="0 0 7 12"><path d="M1.2 4.2L3.5 2L5.8 4.2M1.2 7.8L3.5 10L5.8 7.8" fill="none" stroke="#c9c9c9" stroke-width="1"/></svg>
<div class="a" style="left:149px;top:23px;width:27px;height:11px;background:#474747;border-radius:1px"></div>
<div class="a" style="left:178px;top:23px;width:8.5px;height:11px;background:#484848;border-radius:1px"></div><svg class="a" style="left:178.8px;top:26.7px" width="6.4" height="4.2" viewBox="-1 -1 6.4 4.2"><path d="M0 0L2.2 2.2L4.4 0" fill="none" stroke="#cfcfcf" stroke-width="1"/></svg>
<div class="a" style="left:190.5px;top:22.5px;width:51px;height:12px;background:#767676;border-radius:1px"></div><svg class="a" style="left:242.8px;top:26.7px" width="6.4" height="4.2" viewBox="-1 -1 6.4 4.2"><path d="M0 0L2.2 2.2L4.4 0" fill="none" stroke="#6f6f6f" stroke-width="1"/></svg>
<div class="a" style="left:255px;top:22.5px;width:48.5px;height:12px;background:#e4e4e4;border:1px solid #9a9a9a;border-radius:1px"></div><div class="a" style="left:258.5px;top:28px;width:26.5px;height:1.2px;background:#111"></div><div class="t" style="left:287px;top:25.900px;font-size:6.300px;color:#222;transform:scaleX(0.909);transform-origin:left center">Basic</div>
<div class="a" style="left:304.5px;top:23px;width:8.5px;height:11px;background:#484848;border-radius:1px"></div><svg class="a" style="left:305.3px;top:26.7px" width="6.4" height="4.2" viewBox="-1 -1 6.4 4.2"><path d="M0 0L2.2 2.2L4.4 0" fill="none" stroke="#cfcfcf" stroke-width="1"/></svg>
<div class="t" style="left:318px;top:25.800px;font-size:6.600px;color:#ececec;transform:scaleX(0.888);transform-origin:left center">Opacity:</div><div class="a" style="left:318px;top:31.700px;width:22px;height:0;border-top:1px solid #9c9c9c"></div>
<div class="a" style="left:343.7px;top:23px;width:32.30000000000001px;height:11px;background:#464646;border-radius:1px"></div><div class="t" style="left:345.9px;top:25.700px;font-size:6.700px;color:#f2f2f2;transform:scaleX(0.835);transform-origin:left center">100%</div>
<div class="a" style="left:377.5px;top:23px;width:8.5px;height:11px;background:#484848;border-radius:1px"></div><svg class="a" style="left:379px;top:25.5px" width="6" height="7" viewBox="0 0 6 7"><path d="M2.200 1.700L4 3.500L2.200 5.300" fill="none" stroke="#cfcfcf" stroke-width=".9"/></svg>
<div class="t" style="left:390px;top:25.800px;font-size:6.600px;color:#ececec;transform:scaleX(0.848);transform-origin:left center">Style:</div>
<div class="a" style="left:407.5px;top:22.5px;width:12px;height:12px;background:#e6e6e6;border:1px solid #a8a8a8"></div>
<div class="a" style="left:420px;top:23px;width:8.5px;height:11px;background:#484848;border-radius:1px"></div><svg class="a" style="left:420.8px;top:26.7px" width="6.4" height="4.2" viewBox="-1 -1 6.4 4.2"><path d="M0 0L2.2 2.2L4.4 0" fill="none" stroke="#cfcfcf" stroke-width="1"/></svg>
<div class="a" style="left:433px;top:23px;width:1px;height:11px;background:#484848"></div>
<div class="a" style="left:454.5px;top:23px;width:1px;height:11px;background:#484848"></div>
<div class="a" style="left:482px;top:23px;width:1px;height:11px;background:#484848"></div>
<svg class="a" style="left:438px;top:23.5px" width="10" height="10" viewBox="0 0 10 10"><circle cx="5" cy="5" r="4.3" fill="#8d8d8d" stroke="#c4c4c4" stroke-width=".8"/><path d="M5 .7V9.3M.7 5H9.3M2 2.2Q5 4 8 2.2M2 7.8Q5 6 8 7.8" stroke="#d8d8d8" stroke-width=".6" fill="none"/><path d="M5 5L8.2 7.8A4.3 4.3 0 0 1 5 9.3Z" fill="#555"/></svg>
<svg class="a" style="left:460px;top:23px" width="11" height="11" viewBox="0 0 11 11"><path d="M2 .5V9H10.5M.5 2.5H8.5V10.5" fill="none" stroke="#bdbdbd" stroke-width=".9"/></svg><svg class="a" style="left:469.7px;top:27.3px" width="5.6" height="3.8" viewBox="-1 -1 5.6 3.8"><path d="M0 0L1.8 1.8L3.6 0" fill="none" stroke="#bdbdbd" stroke-width="0.9"/></svg>
<svg class="a" style="left:482.0px;top:23px" width="11" height="12" viewBox="0 0 11 12"><rect x="1" y="0" width="1" height="11" fill="#c8c8c8"/><rect x="3" y="1.5" width="5" height="3" fill="#c8c8c8"/><rect x="3" y="6.5" width="8" height="3" fill="#c8c8c8"/></svg>
<svg class="a" style="left:497.0px;top:23px" width="11" height="12" viewBox="0 0 11 12"><rect x="5.5" y="0" width="1" height="11" fill="#c8c8c8"/><rect x="3.5" y="1.5" width="5" height="3" fill="#c8c8c8"/><rect x="2" y="6.5" width="8" height="3" fill="#c8c8c8"/></svg>
<svg class="a" style="left:512.0px;top:23px" width="11" height="12" viewBox="0 0 11 12"><rect x="10" y="0" width="1" height="11" fill="#c8c8c8"/><rect x="4" y="1.5" width="5" height="3" fill="#c8c8c8"/><rect x="1" y="6.5" width="8" height="3" fill="#c8c8c8"/></svg>
<svg class="a" style="left:529.5px;top:23px" width="11" height="12" viewBox="0 0 11 12"><rect x="0" y="1" width="11" height="1" fill="#c8c8c8"/><rect x="1.5" y="3" width="3" height="8" fill="#c8c8c8"/><rect x="6.5" y="3" width="3" height="5" fill="#c8c8c8"/></svg>
<svg class="a" style="left:544.0px;top:23px" width="11" height="12" viewBox="0 0 11 12"><rect x="0" y="5.5" width="11" height="1" fill="#c8c8c8"/><rect x="1.5" y="2" width="3" height="8" fill="#c8c8c8"/><rect x="6.5" y="3.5" width="3" height="5" fill="#c8c8c8"/></svg>
<svg class="a" style="left:558.2px;top:23px" width="11" height="12" viewBox="0 0 11 12"><rect x="0" y="10" width="11" height="1" fill="#c8c8c8"/><rect x="1.5" y="1" width="3" height="8" fill="#c8c8c8"/><rect x="6.5" y="4" width="3" height="5" fill="#c8c8c8"/></svg>
<svg class="a" style="left:577px;top:22.5px" width="12" height="12" viewBox="0 0 12 12"><path d="M1.5 1.5H10.5V10.5H1.5Z" fill="none" stroke="#8a8a8a" stroke-width=".5" stroke-dasharray="1 1"/><rect x="0.5" y="0.5" width="2" height="2" fill="none" stroke="#c4c4c4" stroke-width=".6"/><rect x="0.5" y="5.0" width="2" height="2" fill="none" stroke="#c4c4c4" stroke-width=".6"/><rect x="0.5" y="9.5" width="2" height="2" fill="none" stroke="#c4c4c4" stroke-width=".6"/><rect x="5.0" y="0.5" width="2" height="2" fill="none" stroke="#c4c4c4" stroke-width=".6"/><rect x="5.0" y="5.0" width="2" height="2" fill="#fff" stroke="#c4c4c4" stroke-width=".6"/><rect x="5.0" y="9.5" width="2" height="2" fill="none" stroke="#c4c4c4" stroke-width=".6"/><rect x="9.5" y="0.5" width="2" height="2" fill="none" stroke="#c4c4c4" stroke-width=".6"/><rect x="9.5" y="5.0" width="2" height="2" fill="none" stroke="#c4c4c4" stroke-width=".6"/><rect x="9.5" y="9.5" width="2" height="2" fill="none" stroke="#c4c4c4" stroke-width=".6"/></svg>
<div class="t" style="left:594.7px;top:26.200px;font-size:6px;font-weight:bold;color:#e4e4e4">X:</div><div class="a" style="left:594.7px;top:31.700px;width:6px;height:0;border-top:1px solid #9c9c9c"></div>
<div class="a" style="left:603.4px;top:23.400px;width:9.200px;height:9.800px;background:#494949;border-radius:1px"></div><svg class="a" style="left:604.3px;top:22.3px" width="7" height="12" viewBox="0 0 7 12"><path d="M1.2 4.2L3.5 2L5.8 4.2M1.2 7.8L3.5 10L5.8 7.8" fill="none" stroke="#c9c9c9" stroke-width="1"/></svg>
<div class="a" style="left:613.6px;top:23.4px;width:36.19999999999993px;height:9.600000000000001px;background:#424242;border-radius:1px"></div><div class="t" style="left:615.8000000000001px;top:25.400px;font-size:6.700px;color:#f2f2f2;transform:scaleX(0.927);transform-origin:left center">12.5341 in</div>
<div class="t" style="left:654.8px;top:26.200px;font-size:6px;font-weight:bold;color:#e4e4e4">Y:</div><div class="a" style="left:654.8px;top:31.700px;width:6px;height:0;border-top:1px solid #9c9c9c"></div>
<div class="a" style="left:663.6px;top:23.400px;width:9.200px;height:9.800px;background:#494949;border-radius:1px"></div><svg class="a" style="left:664.5px;top:22.3px" width="7" height="12" viewBox="0 0 7 12"><path d="M1.2 4.2L3.5 2L5.8 4.2M1.2 7.8L3.5 10L5.8 7.8" fill="none" stroke="#c9c9c9" stroke-width="1"/></svg>
<div class="a" style="left:673.5px;top:23.4px;width:36.5px;height:9.600000000000001px;background:#424242;border-radius:1px"></div><div class="t" style="left:675.7px;top:25.400px;font-size:6.700px;color:#f2f2f2;transform:scaleX(0.942);transform-origin:left center">11.3799 in</div>
<div class="t" style="left:714.7px;top:26.200px;font-size:6px;font-weight:bold;color:#e4e4e4">W:</div><div class="a" style="left:714.7px;top:31.700px;width:7.5px;height:0;border-top:1px solid #9c9c9c"></div>
<div class="a" style="left:725.6px;top:23.400px;width:9.200px;height:9.800px;background:#494949;border-radius:1px"></div><svg class="a" style="left:726.5px;top:22.3px" width="7" height="12" viewBox="0 0 7 12"><path d="M1.2 4.2L3.5 2L5.8 4.2M1.2 7.8L3.5 10L5.8 7.8" fill="none" stroke="#c9c9c9" stroke-width="1"/></svg>
<div class="a" style="left:735px;top:23.4px;width:36px;height:9.600000000000001px;background:#424242;border-radius:1px"></div><div class="t" style="left:737.2px;top:25.400px;font-size:6.700px;color:#f2f2f2;transform:scaleX(0.943);transform-origin:left center">0.9388 in</div>
<svg class="a" style="left:776px;top:24px" width="11" height="9" viewBox="0 0 11 9"><path d="M1 6.5Q-.2 4.8 1.6 3.5L3 2.6M4.2 1.8Q6 .8 7 2.4M10 2.5Q11.2 4.2 9.4 5.5L8 6.4M6.8 7.2Q5 8.2 4 6.6M2 1L9 8" fill="none" stroke="#bdbdbd" stroke-width=".9"/></svg>
<div class="t" style="left:792.6px;top:26.200px;font-size:6px;font-weight:bold;color:#e4e4e4">H:</div><div class="a" style="left:792.6px;top:31.700px;width:7px;height:0;border-top:1px solid #9c9c9c"></div>
<div class="a" id="tabbar" style="left:0;top:37.500px;width:800px;height:17px;background:#434343"></div>
<div class="a" id="tab" style="left:134px;top:38px;width:114px;height:16.500px;background:#535353"></div>
<div class="t" style="left:134px;top:42.5px;font-size:6.2px;color:#e9e9e9;font-weight:bold;transform:scaleX(0.949);transform-origin:left center">TUTORIAL.ai* @ 100 % (RGB/Preview)</div>
<div class="a" id="hruler" style="left:0;top:54.500px;width:800px;height:9.200px;background:#363636"></div>
<div class="a" id="patbar" style="left:63.500px;top:63.600px;width:736.500px;height:13.800px;background:#767676"></div>

<svg class="a" style="left:-.500px;top:53.700px" width="800" height="10"><rect x="76.2" y="8" width=".8" height="2" fill="#6a6a6a"/><rect x="85.1" y="8" width=".8" height="2" fill="#6a6a6a"/><rect x="94.1" y="0" width="1" height="10" fill="#5e5e5e"/><rect x="103.1" y="8" width=".8" height="2" fill="#6a6a6a"/><rect x="112.0" y="8" width=".8" height="2" fill="#6a6a6a"/><rect x="121.0" y="8" width=".8" height="2" fill="#6a6a6a"/><rect x="130.0" y="6.5" width=".8" height="3.5" fill="#6a6a6a"/><rect x="138.9" y="8" width=".8" height="2" fill="#6a6a6a"/><rect x="147.9" y="8" width=".8" height="2" fill="#6a6a6a"/><rect x="156.8" y="8" width=".8" height="2" fill="#6a6a6a"/><rect x="165.8" y="0" width="1" height="10" fill="#5e5e5e"/><rect x="174.8" y="8" width=".8" height="2" fill="#6a6a6a"/><rect x="183.7" y="8" width=".8" height="2" fill="#6a6a6a"/><rect x="192.7" y="8" width=".8" height="2" fill="#6a6a6a"/><rect x="201.7" y="6.5" width=".8" height="3.5" fill="#6a6a6a"/><rect x="210.6" y="8" width=".8" height="2" fill="#6a6a6a"/><rect x="219.6" y="8" width=".8" height="2" fill="#6a6a6a"/><rect x="228.5" y="8" width=".8" height="2" fill="#6a6a6a"/><rect x="237.5" y="0" width="1" height="10" fill="#5e5e5e"/><rect x="246.5" y="8" width=".8" height="2" fill="#6a6a6a"/><rect x="255.4" y="8" width=".8" height="2" fill="#6a6a6a"/><rect x="264.4" y="8" width=".8" height="2" fill="#6a6a6a"/><rect x="273.4" y="6.5" width=".8" height="3.5" fill="#6a6a6a"/><rect x="282.3" y="8" width=".8" height="2" fill="#6a6a6a"/><rect x="291.3" y="8" width=".8" height="2" fill="#6a6a6a"/><rect x="300.2" y="8" width=".8" height="2" fill="#6a6a6a"/><rect x="309.2" y="0" width="1" height="10" fill="#5e5e5e"/><rect x="318.2" y="8" width=".8" height="2" fill="#6a6a6a"/><rect x="327.1" y="8" width=".8" height="2" fill="#6a6a6a"/><rect x="336.1" y="8" width=".8" height="2" fill="#6a6a6a"/><rect x="345.1" y="6.5" width=".8" height="3.5" fill="#6a6a6a"/><rect x="354.0" y="8" width=".8" height="2" fill="#6a6a6a"/><rect x="363.0" y="8" width=".8" height="2" fill="#6a6a6a"/><rect x="371.9" y="8" width=".8" height="2" fill="#6a6a6a"/><rect x="380.9" y="0" width="1" height="10" fill="#5e5e5e"/><rect x="389.9" y="8" width=".8" height="2" fill="#6a6a6a"/><rect x="398.8" y="8" width=".8" height="2" fill="#6a6a6a"/><rect x="407.8" y="8" width=".8" height="2" fill="#6a6a6a"/><rect x="416.8" y="6.5" width=".8" height="3.5" fill="#6a6a6a"/><rect x="425.7" y="8" width=".8" height="2" fill="#6a6a6a"/><rect x="434.7" y="8" width=".8" height="2" fill="#6a6a6a"/><rect x="443.6" y="8" width=".8" height="2" fill="#6a6a6a"/><rect x="452.6" y="0" width="1" height="10" fill="#5e5e5e"/><rect x="461.6" y="8" width=".8" height="2" fill="#6a6a6a"/><rect x="470.5" y="8" width=".8" height="2" fill="#6a6a6a"/><rect x="479.5" y="8" width=".8" height="2" fill="#6a6a6a"/><rect x="488.5" y="6.5" width=".8" height="3.5" fill="#6a6a6a"/><rect x="497.4" y="8" width=".8" height="2" fill="#6a6a6a"/><rect x="506.4" y="8" width=".8" height="2" fill="#6a6a6a"/><rect x="515.3" y="8" width=".8" height="2" fill="#6a6a6a"/><rect x="524.3" y="0" width="1" height="10" fill="#5e5e5e"/><rect x="533.3" y="8" width=".8" height="2" fill="#6a6a6a"/><rect x="542.2" y="8" width=".8" height="2" fill="#6a6a6a"/><rect x="551.2" y="8" width=".8" height="2" fill="#6a6a6a"/><rect x="560.2" y="6.5" width=".8" height="3.5" fill="#6a6a6a"/><rect x="569.1" y="8" width=".8" height="2" fill="#6a6a6a"/><rect x="578.1" y="8" width=".8" height="2" fill="#6a6a6a"/><rect x="587.0" y="8" width=".8" height="2" fill="#6a6a6a"/><rect x="596.0" y="0" width="1" height="10" fill="#5e5e5e"/><rect x="605.0" y="8" width=".8" height="2" fill="#6a6a6a"/><rect x="613.9" y="8" width=".8" height="2" fill="#6a6a6a"/><rect x="622.9" y="8" width=".8" height="2" fill="#6a6a6a"/><rect x="631.9" y="6.5" width=".8" height="3.5" fill="#6a6a6a"/><rect x="640.8" y="8" width=".8" height="2" fill="#6a6a6a"/><rect x="649.8" y="8" width=".8" height="2" fill="#6a6a6a"/><rect x="658.7" y="8" width=".8" height="2" fill="#6a6a6a"/><rect x="667.7" y="0" width="1" height="10" fill="#5e5e5e"/><rect x="676.7" y="8" width=".8" height="2" fill="#6a6a6a"/><rect x="685.6" y="8" width=".8" height="2" fill="#6a6a6a"/><rect x="694.6" y="8" width=".8" height="2" fill="#6a6a6a"/><rect x="703.6" y="6.5" width=".8" height="3.5" fill="#6a6a6a"/><rect x="712.5" y="8" width=".8" height="2" fill="#6a6a6a"/><rect x="721.5" y="8" width=".8" height="2" fill="#6a6a6a"/><rect x="730.4" y="8" width=".8" height="2" fill="#6a6a6a"/><rect x="739.4" y="0" width="1" height="10" fill="#5e5e5e"/><rect x="748.4" y="8" width=".8" height="2" fill="#6a6a6a"/><rect x="757.3" y="8" width=".8" height="2" fill="#6a6a6a"/><rect x="766.3" y="8" width=".8" height="2" fill="#6a6a6a"/><rect x="775.3" y="6.5" width=".8" height="3.5" fill="#6a6a6a"/><rect x="784.2" y="8" width=".8" height="2" fill="#6a6a6a"/><rect x="793.2" y="8" width=".8" height="2" fill="#6a6a6a"/></svg><div class="t" style="left:95.7px;top:56.300px;font-size:5.900px;color:#cfcfcf">8</div><div class="t" style="left:167.4px;top:56.300px;font-size:5.900px;color:#cfcfcf">9</div><div class="t" style="left:239.1px;top:56.300px;font-size:5.900px;color:#cfcfcf">10</div><div class="t" style="left:310.8px;top:56.300px;font-size:5.900px;color:#cfcfcf">11</div><div class="t" style="left:382.5px;top:56.300px;font-size:5.900px;color:#cfcfcf">12</div><div class="t" style="left:454.2px;top:56.300px;font-size:5.900px;color:#cfcfcf">13</div><div class="t" style="left:525.9px;top:56.300px;font-size:5.900px;color:#cfcfcf">14</div><div class="t" style="left:597.6px;top:56.300px;font-size:5.900px;color:#cfcfcf">15</div><div class="t" style="left:669.3px;top:56.300px;font-size:5.900px;color:#cfcfcf">16</div><div class="t" style="left:741.0px;top:56.300px;font-size:5.900px;color:#cfcfcf">17</div>
<div class="t" style="left:124px;top:66.800px;font-size:7px;color:#e4e4e4;transform:scaleX(1.056);transform-origin:left center">Pattern 6</div>
<div class="a" style="left:166px;top:64px;width:1px;height:12px;background:#555"></div>
<svg class="a" style="left:179px;top:66.500px" width="7" height="7" viewBox="0 0 7 7"><path d="M3.500 .5V6.500M.5 3.500H6.500" stroke="#e4e4e4" stroke-width="1.200"/></svg>
<div class="t" style="left:188px;top:66px;font-size:7.500px;color:#e4e4e4;text-decoration:underline;transform:scaleX(0.932);transform-origin:left center">Save a Copy</div>
<svg class="a" style="left:231px;top:66.500px" width="8" height="7" viewBox="0 0 8 7"><path d="M.8 3.800L3 6L7.200 .8" fill="none" stroke="#e4e4e4" stroke-width="1.100"/></svg>
<div class="t" style="left:241px;top:66px;font-size:7.500px;color:#e4e4e4;text-decoration:underline;transform:scaleX(0.948);transform-origin:left center">Done</div>
<svg class="a" style="left:261.500px;top:66px" width="8" height="8" viewBox="0 0 8 8"><circle cx="4" cy="4" r="3.200" fill="none" stroke="#e4e4e4" stroke-width="1"/><path d="M1.800 1.800L6.200 6.200" stroke="#e4e4e4" stroke-width="1"/></svg>
<div class="t" style="left:272px;top:66px;font-size:7.500px;color:#e4e4e4;text-decoration:underline;transform:scaleX(0.942);transform-origin:left center">Cancel</div>
<!-- ===== left toolbars ===== -->
<div class="a" id="tb1" style="left:0;top:243px;width:39.500px;height:243px;background:#505050"></div>
<div class="a" id="tb2gap" style="left:39.500px;top:243px;width:24px;height:243px;background:#3c3c3c"></div>
<div class="a" id="tb2" style="left:41.200px;top:243px;width:21.200px;height:243px;background:#4f4f4f"></div>
<svg class="a" style="left:5.2px;top:244.7px" width="12" height="12" viewBox="0 0 12 12"><path d="M10.500 1.200L5 7" stroke="#cbcbcb" stroke-width="1.300"/><path d="M1 6Q1 3 3.500 3.500Q6 4 5 7Q4 10.500 2 10Q3.500 8 1 6Z" fill="#cbcbcb"/></svg>
<svg class="a" style="left:22.6px;top:244.7px" width="12" height="12" viewBox="0 0 12 12"><defs><linearGradient id="mg" x1="0" y1="0" x2="1" y2="1"><stop offset="0" stop-color="#222"/><stop offset="1" stop-color="#9a9a9a"/></linearGradient></defs><rect x="1" y="1.500" width="10" height="8.500" rx="1" fill="url(#mg)" stroke="#bdbdbd" stroke-width=".8"/><path d="M12 9.500V12H9.500Z" fill="#9a9a9a"/></svg>
<svg class="a" style="left:5.2px;top:258.5px" width="12" height="12" viewBox="0 0 12 12"><path d="M2 2Q3 5 2 9.500L4.500 10.500Q4 6 5 3ZM6 1.500Q7 5 6.200 10L8.500 10.500Q8.500 6 10.500 2.500L8.500 4Z" fill="#cbcbcb"/></svg>
<svg class="a" style="left:22.6px;top:258.5px" width="12" height="12" viewBox="0 0 12 12"><ellipse cx="6.500" cy="5.500" rx="4.500" ry="3.800" fill="none" stroke="#cbcbcb" stroke-width="1"/><ellipse cx="6" cy="6" rx="2" ry="1.600" fill="none" stroke="#cbcbcb" stroke-width="1"/><path d="M2.500 8.500L.8 10.500" stroke="#cbcbcb" stroke-width="1.200"/><path d="M12 9.500V12H9.500Z" fill="#9a9a9a"/></svg>
<svg class="a" style="left:5.2px;top:272.3px" width="12" height="12" viewBox="0 0 12 12"><path d="M1.500 10.500Q4 10 5 6T9.500 1.500" fill="none" stroke="#cbcbcb" stroke-width="1"/><path d="M5.500 10.500L7.500 5.500L9.500 10.500Z" fill="#cbcbcb"/><circle cx="9.800" cy="1.800" r="1" fill="#cbcbcb"/></svg>
<svg class="a" style="left:22.6px;top:272.3px" width="12" height="12" viewBox="0 0 12 12"><path d="M1.500 10.500Q3 5 6 5.500T10.500 1.500" fill="none" stroke="#cbcbcb" stroke-width="1"/><path d="M5 10.500L7.500 5.500L9.500 10.500Z" fill="#cbcbcb"/><circle cx="10.200" cy="1.800" r="1" fill="#cbcbcb"/><circle cx="1.800" cy="10.200" r="1" fill="#cbcbcb"/></svg>
<svg class="a" style="left:5.2px;top:286.3px" width="12" height="12" viewBox="0 0 12 12"><circle cx="6" cy="6" r="3.700" fill="none" stroke="#cbcbcb" stroke-width="1.100"/><path d="M12 9.500V12H9.500Z" fill="#9a9a9a"/></svg>
<svg class="a" style="left:22.1px;top:286.3px" width="13" height="12" viewBox="0 0 13 12"><circle cx="3.300" cy="6" r="2.800" fill="none" stroke="#cbcbcb" stroke-width="1"/><circle cx="9" cy="6" r="2.800" fill="none" stroke="#cbcbcb" stroke-width="1"/><path d="M.5 4.500H11.500" stroke="#cbcbcb" stroke-width=".7"/></svg><svg class="a" style="left:23.6px;top:286.3px" width="12" height="12" viewBox="0 0 12 12"><path d="M12 9.500V12H9.500Z" fill="#9a9a9a"/></svg>
<svg class="a" style="left:5.2px;top:299.8px" width="12" height="12" viewBox="0 0 12 12"><path d="M1 8.500Q3 8.500 4.500 6.500T8 5T11 3" fill="none" stroke="#cbcbcb" stroke-width="1"/><path d="M12 9.500V12H9.500Z" fill="#9a9a9a"/></svg>
<svg class="a" style="left:22.6px;top:299.8px" width="12" height="12" viewBox="0 0 12 12"><path d="M1.500 2V10H10.500" fill="none" stroke="#cbcbcb" stroke-width="1"/><path d="M3 8L5.500 5L7.500 7L10.500 3" fill="none" stroke="#cbcbcb" stroke-width="1"/><path d="M7.500 .5L8.200 2.300L10 3L8.200 3.700L7.500 5.500L6.800 3.700L5 3L6.800 2.300Z" fill="#cbcbcb"/><path d="M12 9.500V12H9.500Z" fill="#9a9a9a"/></svg>
<svg class="a" style="left:5.2px;top:313.0px" width="12" height="12" viewBox="0 0 12 12"><path d="M9.500 1L3.500 7" stroke="#cbcbcb" stroke-width="2"/><path d="M3.800 6.500L1.500 9.500L3 9.800Z" fill="#cbcbcb"/><path d="M4 9.500H8" stroke="#cbcbcb" stroke-width=".8" stroke-dasharray="1 1"/><rect x="8" y="8" width="3" height="3" fill="#cbcbcb"/></svg>
<svg class="a" style="left:22.6px;top:313.0px" width="12" height="12" viewBox="0 0 12 12"><rect x="1.500" y="1.500" width="9.500" height="9" rx="1.500" fill="#cbcbcb"/><g fill="#3a3a3a"><circle cx="4" cy="4" r="1.100"/><circle cx="8.500" cy="4" r="1.100"/><circle cx="6.250" cy="6" r="1.100"/><circle cx="4" cy="8" r="1.100"/><circle cx="8.500" cy="8" r="1.100"/></g></svg>
<svg class="a" style="left:5.2px;top:326.4px" width="12" height="12" viewBox="0 0 12 12"><rect x="1" y="2" width="10" height="8" fill="none" stroke="#cbcbcb" stroke-width="1"/><rect x="4" y="4.300" width="4" height="3.400" fill="#9a9a9a"/><rect x="0" y="1" width="2" height="2" fill="#cbcbcb"/><rect x="0" y="9" width="2" height="2" fill="#cbcbcb"/><rect x="10" y="1" width="2" height="2" fill="#cbcbcb"/><rect x="10" y="9" width="2" height="2" fill="#cbcbcb"/></svg>
<svg class="a" style="left:22.6px;top:326.4px" width="12" height="12" viewBox="0 0 12 12"><path d="M1.500 10.500Q2 3 8.500 2" fill="none" stroke="#cbcbcb" stroke-width="1"/><path d="M4 10L7 4.500L10 8.500Z" fill="#9a9a9a"/><rect x="8.500" y="1" width="2.200" height="2.200" fill="#cbcbcb"/><circle cx="1.500" cy="10.500" r="1" fill="#cbcbcb"/></svg>
<svg class="a" style="left:5.2px;top:340.0px" width="12" height="12" viewBox="0 0 12 12"><path d="M1.500 10.500Q2 3 10 2" fill="none" stroke="#cbcbcb" stroke-width="1"/><path d="M6 5V10.500L7.500 9L9.500 10.500Z" fill="#cbcbcb"/><rect x="9" y="1" width="2" height="2" fill="#cbcbcb"/><path d="M12 9.500V12H9.500Z" fill="#9a9a9a"/></svg>
<svg class="a" style="left:22.6px;top:340.0px" width="12" height="12" viewBox="0 0 12 12"><rect x=".8" y="2" width="10.500" height="8" fill="none" stroke="#cbcbcb" stroke-width="1"/><path d="M3 3.500V8.500M5.300 3.500V8.500M7.600 3.500V8.500M9.500 3.500V8.500" stroke="#cbcbcb" stroke-width="1.300"/></svg>
<svg class="a" style="left:5.2px;top:353.4px" width="12" height="12" viewBox="0 0 12 12"><path d="M9.500 1L10.800 2.300L5 9.500L2 10.500L3 7.500Z" fill="none" stroke="#cbcbcb" stroke-width="1"/><path d="M2 10.500L4 8.500" stroke="#cbcbcb" stroke-width=".8"/><path d="M12 9.500V12H9.500Z" fill="#9a9a9a"/></svg>
<svg class="a" style="left:22.6px;top:353.4px" width="12" height="12" viewBox="0 0 12 12"><path d="M3 7V3.500Q3 2.600 3.800 2.600T4.600 3.500V2Q4.600 1.200 5.400 1.200T6.200 2V1.800Q6.200 1 7 1T7.800 1.800V2.800Q7.800 2 8.600 2T9.400 2.800V7.500Q9.400 11 6.500 11Q4.500 11 3.500 9.500L1.500 6.500Q1.200 5.600 2 5.600T3 7Z" fill="#cbcbcb"/><path d="M12 9.500V12H9.500Z" fill="#9a9a9a"/></svg>
<svg class="a" style="left:5.2px;top:366.8px" width="12" height="12" viewBox="0 0 12 12"><path d="M2 1V11" stroke="#cbcbcb" stroke-width="1"/><rect x="3.500" y="2.500" width="5" height="3" fill="#cbcbcb"/><rect x="3.500" y="6.500" width="7.500" height="3" fill="#cbcbcb"/></svg>
<svg class="a" style="left:22.6px;top:366.8px" width="12" height="12" viewBox="0 0 12 12"><circle cx="5" cy="5" r="3.500" fill="none" stroke="#cbcbcb" stroke-width="1"/><path d="M7.600 7.600L11 11" stroke="#cbcbcb" stroke-width="1.500"/></svg>
<div class="a" style="left:14px;top:395px;width:19.500px;height:18.500px;background:#fff;border:1px solid #999"></div>
<div class="a" style="left:18.500px;top:399.500px;width:10.500px;height:9.500px;background:#4b4b4b"></div>
<svg class="a" style="left:14px;top:395px" width="19.500" height="18.500" viewBox="0 0 19.500 18.500"><path d="M.8 17.800L18.800 .8" stroke="#e8222e" stroke-width="1.400"/></svg>
<div class="a" style="left:3.500px;top:385px;width:19.500px;height:18.800px;background:#cf8f2d;border:1px solid #dca54e"></div>
<svg class="a" style="left:25.0px;top:383.0px" width="11" height="11" viewBox="0 0 11 11"><path d="M2 3.500Q7 2.500 7.500 8" fill="none" stroke="#cbcbcb" stroke-width="1"/><path d="M5.500 6.500L7.600 9.200L9.500 6.300" fill="none" stroke="#cbcbcb" stroke-width=".9"/><path d="M3.500 1.500L1.500 3.500L3.800 5" fill="none" stroke="#cbcbcb" stroke-width=".9"/></svg>
<svg class="a" style="left:1.5px;top:405.0px" width="9" height="9" viewBox="0 0 9 9"><rect x="1" y="1" width="4.500" height="4.500" fill="#fff" stroke="#222" stroke-width=".6"/><rect x="3.500" y="3.500" width="4.500" height="4.500" fill="#222" stroke="#ddd" stroke-width=".7"/></svg>
<div class="a" style="left:3px;top:417.500px;width:11.500px;height:11.500px;background:#2d2d2d;border-radius:1px"></div>
<div class="a" style="left:5.300px;top:419.800px;width:7px;height:7px;background:#e59a2c;border:1px solid #f0b45a"></div>
<div class="a" style="left:15.300px;top:419.800px;width:7px;height:7px;background:linear-gradient(90deg,#eee,#333);border:1px solid #999"></div>
<svg class="a" style="left:26.800px;top:419.500px" width="8" height="8" viewBox="0 0 8 8"><rect x=".4" y=".4" width="7.200" height="7.200" fill="#fff" stroke="#999" stroke-width=".6"/><path d="M.6 7.400L7.400 .6" stroke="#e8222e" stroke-width="1.100"/></svg>
<div class="a" style="left:3px;top:430.500px;width:11.500px;height:11.500px;background:#2d2d2d;border-radius:1px"></div>
<svg class="a" style="left:4.2px;top:431.8px" width="9" height="9" viewBox="0 0 9 9"><circle cx="3.500" cy="3.500" r="2.500" fill="#9a9a9a"/><rect x="3.500" y="3.500" width="4.500" height="4.500" rx=".8" fill="#cbcbcb"/></svg>
<svg class="a" style="left:14.5px;top:431.8px" width="9" height="9" viewBox="0 0 9 9"><circle cx="3.500" cy="3.500" r="2.500" fill="none" stroke="#aaa" stroke-width=".8"/><rect x="3.500" y="3.500" width="4.500" height="4.500" rx=".8" fill="#888"/></svg>
<svg class="a" style="left:26.0px;top:431.8px" width="9" height="9" viewBox="0 0 9 9"><circle cx="4.500" cy="4.500" r="2.800" fill="none" stroke="#6a6a6a" stroke-width=".8"/><circle cx="4.500" cy="4.500" r="1.200" fill="#6a6a6a"/></svg>
<svg class="a" style="left:13.8px;top:445.5px" width="13" height="11" viewBox="0 0 13 11"><rect x="4" y="1" width="8" height="6" fill="#8a8a8a" stroke="#bdbdbd" stroke-width=".8"/><rect x="1" y="4" width="8" height="6" fill="#6a6a6a" stroke="#bdbdbd" stroke-width=".8"/></svg>
<div class="t" style="left:15px;top:462.500px;font-size:9px;color:#cfcfcf;letter-spacing:.6px;font-weight:bold">...</div>
<div class="a" style="left:3.200px;top:477px;width:33.500px;height:12px;background:#3b6cb7;border-radius:2px 2px 0 0"></div>
<svg class="a" style="left:16.5px;top:479.0px" width="7" height="7" viewBox="0 0 7 7"><path d="M3.500 0L4.300 2.700L7 3.500L4.300 4.300L3.500 7L2.700 4.300L0 3.500L2.700 2.700Z" fill="#fff"/></svg>
<svg class="a" style="left:46.0px;top:241.8px" width="11" height="11" viewBox="0 0 11 11"><path d="M9.500 1L5.500 6" stroke="#cbcbcb" stroke-width="1.300"/><path d="M2 10Q2 7 4.500 6.500L5.800 7.800Q5 10 2 10Z" fill="#cbcbcb"/></svg>
<div class="a" style="left:41.500px;top:254.3px;width:20px;height:1px;background:#3c3c3c"></div><div class="a" style="left:46.500px;top:256.5px;width:10px;height:2.200px;background:#3e3e3e;border-radius:1px"></div>
<div class="a" style="left:46.500px;top:261.5px;width:10.500px;height:1.200px;background:#48a24e"></div><div class="a" style="left:46.300px;top:261px;width:2px;height:2px;background:#48a24e"></div>
<svg class="a" style="left:45.5px;top:262.8px" width="12" height="12" viewBox="0 0 12 12"><path d="M1.500 10Q2 3 9.500 2" fill="none" stroke="#cbcbcb" stroke-width="1"/><path d="M5 10L7.500 5L10.500 9Z" fill="#9a9a9a"/><rect x="9" y="1" width="2" height="2" fill="#cbcbcb"/><rect x=".8" y="9" width="2" height="2" fill="#cbcbcb"/></svg>
<div class="a" style="left:46.500px;top:277.5px;width:10.500px;height:1.200px;background:#48a24e"></div><div class="a" style="left:46.300px;top:277px;width:2px;height:2px;background:#48a24e"></div>
<svg class="a" style="left:45.5px;top:278.5px" width="12" height="12" viewBox="0 0 12 12"><rect x="1.500" y="2" width="9" height="8" fill="none" stroke="#cbcbcb" stroke-width="1"/><rect x="4" y="4.300" width="4" height="3.400" fill="#9a9a9a"/><rect x="0" y="1" width="2" height="2" fill="#cbcbcb"/><rect x="0" y="9" width="2" height="2" fill="#cbcbcb"/><rect x="10" y="1" width="2" height="2" fill="#cbcbcb"/><rect x="10" y="9" width="2" height="2" fill="#cbcbcb"/></svg>
<div class="a" style="left:46.500px;top:293.0px;width:10.500px;height:1.200px;background:#48a24e"></div><div class="a" style="left:46.300px;top:292.5px;width:2px;height:2px;background:#48a24e"></div>
<svg class="a" style="left:45.5px;top:294.0px" width="12" height="12" viewBox="0 0 12 12"><rect x=".8" y="2" width="10.500" height="8" fill="#cbcbcb"/><path d="M3 3.500V8.500M5.300 3.500V8.500M7.600 3.500V8.500M9.500 3.500V8.500" stroke="#3a3a3a" stroke-width="1.100"/></svg>
<div class="a" style="left:41.500px;top:309.5px;width:20px;height:1px;background:#3c3c3c"></div><div class="a" style="left:46.500px;top:311.7px;width:10px;height:2.200px;background:#3e3e3e;border-radius:1px"></div>
<div class="a" style="left:46.500px;top:316.5px;width:10.500px;height:1.200px;background:#d9305a"></div><div class="a" style="left:46.300px;top:316px;width:2px;height:2px;background:#d9305a"></div>
<svg class="a" style="left:45.5px;top:317.5px" width="12" height="12" viewBox="0 0 12 12"><circle cx="4" cy="4" r="2.500" fill="none" stroke="#cbcbcb" stroke-width="1"/><path d="M7 3Q10.500 3 10.500 6.500T7 10.500" fill="none" stroke="#cbcbcb" stroke-width="1"/><path d="M4 4.500V10.500L5.500 9L7.500 10.500Z" fill="#cbcbcb"/></svg>
<div class="a" style="left:46.500px;top:331.7px;width:10.500px;height:1.200px;background:#d9305a"></div><div class="a" style="left:46.300px;top:331.2px;width:2px;height:2px;background:#d9305a"></div>
<svg class="a" style="left:45.5px;top:333.3px" width="12" height="12" viewBox="0 0 12 12"><circle cx="6" cy="6" r="3" fill="#9a9a9a"/><circle cx="6" cy="6" r="4.600" fill="none" stroke="#cbcbcb" stroke-width="1.600" stroke-dasharray="1 .9"/></svg>
<div class="a" style="left:46.500px;top:347.5px;width:10.500px;height:1.200px;background:#d9305a"></div><div class="a" style="left:46.300px;top:347px;width:2px;height:2px;background:#d9305a"></div>
<svg class="a" style="left:45.5px;top:349.5px" width="12" height="12" viewBox="0 0 12 12"><path d="M2 3Q1 8 4 9.500T10.500 8.500Q9 6 6.500 6.500" fill="none" stroke="#cbcbcb" stroke-width="1"/><path d="M7.500 5.500L11 7.500L7.500 9.500Z" fill="#cbcbcb"/><circle cx="2.200" cy="2.500" r="1.100" fill="#cbcbcb"/></svg>
<div class="a" style="left:41.500px;top:363.8px;width:20px;height:1px;background:#3c3c3c"></div><div class="a" style="left:46.500px;top:366.0px;width:10px;height:2.200px;background:#3e3e3e;border-radius:1px"></div>
<div class="a" style="left:46.500px;top:370.8px;width:10.500px;height:1.200px;background:#d9305a"></div><div class="a" style="left:46.300px;top:370.3px;width:2px;height:2px;background:#d9305a"></div>
<svg class="a" style="left:45.5px;top:372.0px" width="12" height="12" viewBox="0 0 12 12"><ellipse cx="6.500" cy="5.500" rx="4" ry="3.600" fill="#cbcbcb"/><path d="M4.500 4Q6.500 3 8.500 5M5 6.500Q6.500 5.500 8 7.500" stroke="#444" stroke-width=".7" fill="none"/><path d="M2.500 9L.8 11" stroke="#cbcbcb" stroke-width="1.200"/></svg>
<div class="a" style="left:46.500px;top:386.5px;width:10.500px;height:1.200px;background:#d9305a"></div><div class="a" style="left:46.300px;top:386px;width:2px;height:2px;background:#d9305a"></div>
<svg class="a" style="left:45.5px;top:387.0px" width="12" height="12" viewBox="0 0 12 12"><rect x="2" y="2.500" width="8" height="7" fill="#8a8a8a"/><path d="M2 4H10M2 6H10M2 8H10" stroke="#c8c8c8" stroke-width=".6"/></svg>
<div class="a" style="left:46.500px;top:402.5px;width:10.500px;height:1.200px;background:#d9305a"></div><div class="a" style="left:46.300px;top:402px;width:2px;height:2px;background:#d9305a"></div>
<svg class="a" style="left:45.5px;top:403.3px" width="12" height="12" viewBox="0 0 12 12"><path d="M1.500 5L4 2.500H10.500V7L8 9.500H1.500Z" fill="#cbcbcb"/><path d="M1.500 5H8V9.500M8 5L10.500 2.500" stroke="#555" stroke-width=".6" fill="none"/></svg>
<div class="a" style="left:46.500px;top:418.5px;width:10.500px;height:1.200px;background:#d9305a"></div><div class="a" style="left:46.300px;top:418px;width:2px;height:2px;background:#d9305a"></div>
<svg class="a" style="left:45.5px;top:419.5px" width="12" height="12" viewBox="0 0 12 12"><g fill="#cbcbcb"><circle cx="3" cy="3" r="1"/><circle cx="7" cy="2" r=".8"/><circle cx="9.500" cy="4.500" r="1"/><circle cx="5.500" cy="5.500" r="1.200"/><circle cx="3" cy="8" r=".9"/><circle cx="7.500" cy="8.500" r="1"/><circle cx="9.500" cy="7.300" r=".6"/></g><path d="M3 3L5.500 5.500L9.500 4.500M5.500 5.500L3 8" stroke="#cbcbcb" stroke-width=".5"/></svg>
<div class="a" style="left:46.500px;top:433.5px;width:10.500px;height:1.200px;background:#d9305a"></div><div class="a" style="left:46.300px;top:433px;width:2px;height:2px;background:#d9305a"></div>
<div class="t" style="left:48.200px;top:436.600px;font-size:9.500px;font-weight:bold;color:#e0e0e0">A</div><div class="a" style="left:41.200px;top:449px;width:21.200px;height:1px;background:#3c3c3c"></div>
<div class="a" id="vruler" style="left:63.500px;top:63.900px;width:9.200px;height:423px;background:#363636"></div>

<svg class="a" style="left:63.500px;top:63.900px" width="8.500" height="423"><rect x="0" y="33.1" width="8.500" height=".9" fill="#5e5e5e"/><rect x="6.7" y="42.1" width="1.8" height=".8" fill="#6a6a6a"/><rect x="6.7" y="51.0" width="1.8" height=".8" fill="#6a6a6a"/><rect x="6.7" y="60.0" width="1.8" height=".8" fill="#6a6a6a"/><rect x="5.5" y="68.9" width="3" height=".8" fill="#6a6a6a"/><rect x="6.7" y="77.9" width="1.8" height=".8" fill="#6a6a6a"/><rect x="6.7" y="86.9" width="1.8" height=".8" fill="#6a6a6a"/><rect x="6.7" y="95.8" width="1.8" height=".8" fill="#6a6a6a"/><rect x="0" y="104.8" width="8.500" height=".9" fill="#5e5e5e"/><rect x="6.7" y="113.8" width="1.8" height=".8" fill="#6a6a6a"/><rect x="6.7" y="122.7" width="1.8" height=".8" fill="#6a6a6a"/><rect x="6.7" y="131.7" width="1.8" height=".8" fill="#6a6a6a"/><rect x="5.5" y="140.7" width="3" height=".8" fill="#6a6a6a"/><rect x="6.7" y="149.6" width="1.8" height=".8" fill="#6a6a6a"/><rect x="6.7" y="158.6" width="1.8" height=".8" fill="#6a6a6a"/><rect x="6.7" y="167.5" width="1.8" height=".8" fill="#6a6a6a"/><rect x="0" y="176.5" width="8.500" height=".9" fill="#5e5e5e"/><rect x="6.7" y="185.5" width="1.8" height=".8" fill="#6a6a6a"/><rect x="6.7" y="194.4" width="1.8" height=".8" fill="#6a6a6a"/><rect x="6.7" y="203.4" width="1.8" height=".8" fill="#6a6a6a"/><rect x="5.5" y="212.4" width="3" height=".8" fill="#6a6a6a"/><rect x="6.7" y="221.3" width="1.8" height=".8" fill="#6a6a6a"/><rect x="6.7" y="230.3" width="1.8" height=".8" fill="#6a6a6a"/><rect x="6.7" y="239.2" width="1.8" height=".8" fill="#6a6a6a"/><rect x="0" y="248.2" width="8.500" height=".9" fill="#5e5e5e"/><rect x="6.7" y="257.2" width="1.8" height=".8" fill="#6a6a6a"/><rect x="6.7" y="266.1" width="1.8" height=".8" fill="#6a6a6a"/><rect x="6.7" y="275.1" width="1.8" height=".8" fill="#6a6a6a"/><rect x="5.5" y="284.1" width="3" height=".8" fill="#6a6a6a"/><rect x="6.7" y="293.0" width="1.8" height=".8" fill="#6a6a6a"/><rect x="6.7" y="302.0" width="1.8" height=".8" fill="#6a6a6a"/><rect x="6.7" y="310.9" width="1.8" height=".8" fill="#6a6a6a"/><rect x="0" y="319.9" width="8.500" height=".9" fill="#5e5e5e"/><rect x="6.7" y="328.9" width="1.8" height=".8" fill="#6a6a6a"/><rect x="6.7" y="337.8" width="1.8" height=".8" fill="#6a6a6a"/><rect x="6.7" y="346.8" width="1.8" height=".8" fill="#6a6a6a"/><rect x="5.5" y="355.8" width="3" height=".8" fill="#6a6a6a"/><rect x="6.7" y="364.7" width="1.8" height=".8" fill="#6a6a6a"/><rect x="6.7" y="373.7" width="1.8" height=".8" fill="#6a6a6a"/><rect x="6.7" y="382.6" width="1.8" height=".8" fill="#6a6a6a"/><rect x="0" y="391.6" width="8.500" height=".9" fill="#5e5e5e"/><rect x="6.7" y="400.6" width="1.8" height=".8" fill="#6a6a6a"/><rect x="6.7" y="409.5" width="1.8" height=".8" fill="#6a6a6a"/><rect x="6.7" y="418.5" width="1.8" height=".8" fill="#6a6a6a"/></svg><div class="t" style="left:60.800px;top:86.5px;width:14px;text-align:center;font-size:5.200px;color:#a8a8a8;transform:rotate(-90deg)">9</div><div class="t" style="left:60.800px;top:158.2px;width:14px;text-align:center;font-size:5.200px;color:#a8a8a8;transform:rotate(-90deg)">10</div><div class="t" style="left:60.800px;top:229.9px;width:14px;text-align:center;font-size:5.200px;color:#a8a8a8;transform:rotate(-90deg)">11</div><div class="t" style="left:60.800px;top:301.6px;width:14px;text-align:center;font-size:5.200px;color:#a8a8a8;transform:rotate(-90deg)">12</div><div class="t" style="left:60.800px;top:373.3px;width:14px;text-align:center;font-size:5.200px;color:#a8a8a8;transform:rotate(-90deg)">13</div><div class="t" style="left:60.800px;top:445.0px;width:14px;text-align:center;font-size:5.200px;color:#a8a8a8;transform:rotate(-90deg)">14</div>
<!-- ===== pattern options ===== -->
<div class="a" id="po" style="left:116.500px;top:147px;width:162px;height:250.700px;background:#535353;border-radius:0 2px 0 0;box-shadow:0 1px 3px #0005"></div>
<div class="a" style="left:116.500px;top:147px;width:162px;height:6.500px;background:#3c3c3c;border-radius:0 2px 0 0"></div>
<svg class="a" style="left:271.500px;top:148.500px" width="5" height="4" viewBox="0 0 5 4"><path d="M2.200 .4L.6 2L2.200 3.600M4.400 .4L2.800 2L4.400 3.600" fill="none" stroke="#a0a0a0" stroke-width=".7"/></svg>
<div class="a" style="left:116.500px;top:153.500px;width:162px;height:14.500px;background:#424242"></div>
<div class="a" style="left:116.500px;top:153.500px;width:55.500px;height:14.500px;background:#535353"></div>
<div class="t" style="left:118.500px;top:157.500px;font-size:7px;font-weight:bold;color:#f0f0f0;transform:scaleX(0.924);transform-origin:left center">Pattern Options</div>
<svg class="a" style="left:269.500px;top:158.500px" width="7" height="6" viewBox="0 0 7 6"><path d="M0 .8H7M0 2.600H7M0 4.400H7" stroke="#8c8c8c" stroke-width="1"/></svg>
<div class="a" style="left:205px;top:172.500px;width:70.500px;height:15.300px;background:#5b5b5b;border-radius:2px"></div>
<svg class="a" style="left:210px;top:175.500px" width="9" height="9" viewBox="0 0 9 9"><g fill="#858585"><circle cx="1.500" cy="1.500" r=".9"/><circle cx="7.500" cy="1.500" r=".9"/><circle cx="4.500" cy="4.500" r=".9"/><circle cx="1.500" cy="7.500" r=".9"/><circle cx="7.500" cy="7.500" r=".9"/></g></svg>
<div class="t" style="left:222px;top:176.700px;font-size:7px;color:#858585;transform:scaleX(0.843);transform-origin:left center">Generate Patterns</div>
<div class="t" style="right:647.2px;top:197.8px;font-size:6.500px;color:#dedede;transform:scaleX(0.888);transform-origin:right center">Name:</div>
<div class="a" style="left:156px;top:196px;width:119.5px;height:10px;background:#3e3e3e;border-radius:1px"></div><div class="t" style="left:158.5px;top:197.6px;font-size:7px;color:#f2f2f2;transform:scaleX(0.867);transform-origin:left center">Generated Pattern 6</div>
<div class="t" style="right:647.2px;top:212.8px;font-size:6.500px;color:#858585;transform:scaleX(1.007);transform-origin:right center">Tile Type:</div>
<div class="a" style="left:156px;top:211px;width:87px;height:10.5px;background:#5a5a5a;border-radius:1px"></div>
<div class="a" style="left:158.500px;top:212.500px;width:6px;height:6.500px;background:#8a8a8a;border-radius:1px"></div>
<div class="t" style="left:167.500px;top:212.700px;font-size:7px;color:#858585;transform:scaleX(0.832);transform-origin:left center">Grid</div>
<svg class="a" style="left:235.3px;top:214.20000000000002px" width="6.400" height="4.200" viewBox="-1 -1 6.400 4.200"><path d="M0 0L2.200 2.200L4.400 0" fill="none" stroke="#777" stroke-width="1"/></svg>
<div class="t" style="right:647.2px;top:227.4px;font-size:6.500px;color:#858585;transform:scaleX(1.021);transform-origin:right center">Brick Offset:</div>
<div class="a" style="left:156px;top:225.5px;width:58.69999999999999px;height:10.5px;background:#5a5a5a;border-radius:1px"></div><div class="t" style="left:158.5px;top:227.35px;font-size:7px;color:#7c7c7c;transform:scaleX(0.925);transform-origin:left center">1/2</div>
<svg class="a" style="left:206.3px;top:228.70000000000002px" width="6.400" height="4.200" viewBox="-1 -1 6.400 4.200"><path d="M0 0L2.200 2.200L4.400 0" fill="none" stroke="#777" stroke-width="1"/></svg>
<svg class="a" style="left:246.900px;top:209.800px" width="28.400" height="28.200" viewBox="0 0 255 255" preserveAspectRatio="none"><rect width="255" height="255" fill="#fbab1c"/><use href="#hd" x="0.0" y="55.95" fill="#7ccfce"/><use href="#hd" x="0.0" y="183.45" fill="#7ccfce"/><path d="M0.0 -15.8L8.0 -7.8L0.0 0.20000000000000018L-8.0 -7.8Z" fill="#7ccfce"/><path d="M0.0 111.7L8.0 119.7L0.0 127.7L-8.0 119.7Z" fill="#7ccfce"/><path d="M0.0 239.2L8.0 247.2L0.0 255.2L-8.0 247.2Z" fill="#7ccfce"/><use href="#hd" x="63.75" y="-7.8" fill="#7ccfce"/><use href="#hd" x="63.75" y="119.7" fill="#1c9384"/><use href="#hd" x="63.75" y="247.2" fill="#7ccfce"/><path d="M63.75 47.95L71.75 55.95L63.75 63.95L55.75 55.95Z" fill="#7ccfce"/><path d="M63.75 175.45L71.75 183.45L63.75 191.45L55.75 183.45Z" fill="#7ccfce"/><use href="#hd" x="127.5" y="55.95" fill="#c8802a"/><use href="#hd" x="127.5" y="183.45" fill="#c8802a"/><path d="M127.5 -15.8L135.5 -7.8L127.5 0.20000000000000018L119.5 -7.8Z" fill="#7ccfce"/><path d="M127.5 111.7L135.5 119.7L127.5 127.7L119.5 119.7Z" fill="#c8802a"/><path d="M127.5 239.2L135.5 247.2L127.5 255.2L119.5 247.2Z" fill="#7ccfce"/><use href="#hd" x="191.25" y="-7.8" fill="#7ccfce"/><use href="#hd" x="191.25" y="119.7" fill="#f78da3"/><use href="#hd" x="191.25" y="247.2" fill="#7ccfce"/><path d="M191.25 47.95L199.25 55.95L191.25 63.95L183.25 55.95Z" fill="#7ccfce"/><path d="M191.25 175.45L199.25 183.45L191.25 191.45L183.25 183.45Z" fill="#7ccfce"/><use href="#hd" x="255.0" y="55.95" fill="#7ccfce"/><use href="#hd" x="255.0" y="183.45" fill="#7ccfce"/><path d="M255.0 -15.8L263.0 -7.8L255.0 0.20000000000000018L247.0 -7.8Z" fill="#7ccfce"/><path d="M255.0 111.7L263.0 119.7L255.0 127.7L247.0 119.7Z" fill="#7ccfce"/><path d="M255.0 239.2L263.0 247.2L255.0 255.2L247.0 247.2Z" fill="#7ccfce"/></svg>
<div class="t" style="right:647.2px;top:248.3px;font-size:6.500px;color:#dedede;transform:scaleX(0.950);transform-origin:right center">Width:</div>
<div class="a" style="left:156px;top:246.7px;width:57px;height:9.5px;background:#3e3e3e;border-radius:1px"></div><div class="t" style="left:158.5px;top:248.04999999999998px;font-size:7px;color:#f2f2f2;transform:scaleX(0.913);transform-origin:left center">3.5556 in</div>
<div class="t" style="right:647.2px;top:262.6px;font-size:6.500px;color:#dedede;transform:scaleX(0.952);transform-origin:right center">Height:</div>
<div class="a" style="left:156px;top:261px;width:57px;height:9.5px;background:#3e3e3e;border-radius:1px"></div><div class="t" style="left:158.5px;top:262.35px;font-size:7px;color:#f2f2f2;transform:scaleX(0.913);transform-origin:left center">3.5556 in</div>
<svg class="a" style="left:219.500px;top:252.3px" width="9" height="12" viewBox="0 0 9 12"><path d="M3 1.500Q4.500 .3 6 1.500T6.500 4.500L5.800 5.300M6 10.500Q4.500 11.700 3 10.500T2.500 7.500L3.200 6.700M1.500 2.500L7.500 9.500" fill="none" stroke="#cfcfcf" stroke-width="1"/></svg>
<div class="cb" style="left:155.7px;top:275.1px"></div><div class="t" style="left:164.89999999999998px;top:275.4px;font-size:6.500px;color:#ececec;transform:scaleX(0.970);transform-origin:left center">Size Tile to Art</div>
<div class="cb on" style="left:155.7px;top:286.2px"></div><svg class="a" style="left:156.5px;top:287.09999999999997px" width="5.500" height="5.500" viewBox="0 0 5.500 5.500"><path d="M.7 2.800L2.200 4.300L4.900 .9" fill="none" stroke="#333" stroke-width="1.100"/></svg><div class="t" style="left:164.89999999999998px;top:286.5px;font-size:6.500px;color:#ececec;transform:scaleX(0.968);transform-origin:left center">Move Tile with Art</div>
<div class="t" style="right:647.2px;top:300.0px;font-size:6.500px;color:#858585;transform:scaleX(0.906);transform-origin:right center">H Spacing:</div>
<div class="a" style="left:156px;top:298.3px;width:57px;height:9.699999999999989px;background:#5a5a5a;border-radius:1px"></div><div class="t" style="left:158.5px;top:299.75px;font-size:7px;color:#7c7c7c;transform:scaleX(0.930);transform-origin:left center">0 in</div>
<div class="t" style="right:647.2px;top:314.3px;font-size:6.500px;color:#858585;transform:scaleX(0.897);transform-origin:right center">V Spacing:</div>
<div class="a" style="left:156px;top:312.7px;width:57px;height:9.5px;background:#5a5a5a;border-radius:1px"></div><div class="t" style="left:158.5px;top:314.05px;font-size:7px;color:#7c7c7c;transform:scaleX(0.930);transform-origin:left center">0 in</div>
<svg class="a" style="left:219.500px;top:304.3px" width="9" height="12" viewBox="0 0 9 12"><path d="M3 1.500Q4.500 .3 6 1.500T6.500 4.500L5.800 5.300M6 10.500Q4.500 11.700 3 10.500T2.500 7.500L3.200 6.700M1.500 2.500L7.500 9.500" fill="none" stroke="#858585" stroke-width="1"/></svg>
<div class="t" style="right:647.2px;top:330.3px;font-size:6.500px;color:#dedede;transform:scaleX(0.916);transform-origin:right center">Overlap:</div>
<div class="a" style="left:156px;top:327.600px;width:11px;height:11.300px;background:#2b2b2b;border-radius:1px"></div><div class="a" style="left:168.3px;top:327.600px;width:11px;height:11.300px;background:#4a4a4a;border-radius:1px"></div><div class="a" style="left:184px;top:327.600px;width:11px;height:11.300px;background:#2b2b2b;border-radius:1px"></div><div class="a" style="left:196.3px;top:327.600px;width:11px;height:11.300px;background:#4a4a4a;border-radius:1px"></div>
<svg class="a" style="left:157.1px;top:329.700px" width="9" height="7" viewBox="0 0 9 7"><path d="M3 3.500L6 .5L9 3.500L6 6.500Z" fill="#e8e8e8"/><path d="M0 3.500L3 .5L6 3.500L3 6.500Z" fill="#fff"/><circle cx="3.200" cy="3.500" r="1.100" fill="#111"/></svg><svg class="a" style="left:169.6px;top:329.700px" width="9" height="7" viewBox="0 0 9 7"><path d="M3 3.500L6 .5L9 3.500L6 6.500Z" fill="#8a8a8a"/><path d="M0 3.500L3 .5L6 3.500L3 6.500Z" fill="#c8c8c8"/><circle cx="3.200" cy="3.500" r="1.100" fill="#666"/></svg><svg class="a" style="left:186px;top:328.600px" width="7" height="9.500" viewBox="0 0 7 9.500"><path d="M3.500 3.500L6.500 6.500L3.500 9.500L.5 6.500Z" fill="#e8e8e8"/><path d="M3.500 0L6.500 3L3.500 6L.5 3Z" fill="#fff"/><circle cx="3.500" cy="3.200" r="1.100" fill="#111"/></svg><svg class="a" style="left:198.5px;top:328.600px" width="7" height="9.500" viewBox="0 0 7 9.500"><path d="M3.500 3.500L6.500 6.500L3.500 9.500L.5 6.500Z" fill="#7e7e7e"/><path d="M3.500 0L6.500 3L3.500 6L.5 3Z" fill="#bdbdbd"/><circle cx="3.500" cy="3.200" r="1.100" fill="#666"/></svg>
<div class="a" style="left:121px;top:341.500px;width:153px;height:1px;background:#4e4e4e"></div>
<div class="t" style="right:647.2px;top:349.1px;font-size:6.500px;color:#dedede;transform:scaleX(0.921);transform-origin:right center">Copies:</div>

<div class="a" style="left:156px;top:347px;width:40.700px;height:10.200px;background:#4a4a4a;border-radius:1px"></div><div class="t" style="left:159.500px;top:348.700px;font-size:7px;color:#f2f2f2;transform:scaleX(0.890);transform-origin:left center">5 x 5</div>
<svg class="a" style="left:188.8px;top:350.4px" width="6.400" height="4.200" viewBox="-1 -1 6.400 4.200"><path d="M0 0L2.200 2.200L4.400 0" fill="none" stroke="#cfcfcf" stroke-width="1"/></svg>
<div class="cb on" style="left:155.7px;top:363.2px"></div><svg class="a" style="left:156.5px;top:364.09999999999997px" width="5.500" height="5.500" viewBox="0 0 5.500 5.500"><path d="M.7 2.800L2.200 4.300L4.900 .9" fill="none" stroke="#333" stroke-width="1.100"/></svg><div class="t" style="left:164.89999999999998px;top:363.5px;font-size:6.500px;color:#ececec;transform:scaleX(0.950);transform-origin:left center">Dim Copies to:</div>
<div class="a" style="left:208.4px;top:361.5px;width:27.599999999999994px;height:10.5px;background:#3e3e3e;border-radius:1px"></div><div class="t" style="left:210.9px;top:363.35px;font-size:7px;color:#f2f2f2;transform:scaleX(0.771);transform-origin:left center">70%</div>
<div class="a" style="left:237.500px;top:361.500px;width:9px;height:10.500px;background:#484848;border-radius:1px"></div><svg class="a" style="left:238.8px;top:364.9px" width="6.400" height="4.200" viewBox="-1 -1 6.400 4.200"><path d="M0 0L2.200 2.200L4.400 0" fill="none" stroke="#cfcfcf" stroke-width="1"/></svg>
<div class="cb on" style="left:155.7px;top:376.1px"></div><svg class="a" style="left:156.5px;top:377.0px" width="5.500" height="5.500" viewBox="0 0 5.500 5.500"><path d="M.7 2.800L2.200 4.300L4.900 .9" fill="none" stroke="#333" stroke-width="1.100"/></svg><div class="t" style="left:164.89999999999998px;top:376.4px;font-size:6.500px;color:#ececec;transform:scaleX(0.908);transform-origin:left center">Show Tile Edge</div>
<div class="cb" style="left:155.7px;top:387.5px"></div><div class="t" style="left:164.89999999999998px;top:387.8px;font-size:6.500px;color:#ececec;transform:scaleX(0.898);transform-origin:left center">Show Swatch Bounds</div>

<!-- ===== swatches panel ===== -->
<div class="a" id="sw" style="left:0;top:35px;width:134px;height:208.500px;background:#535353;border-top:1px solid #666;border-right:1px solid #626262;border-bottom:1px solid #626262"></div>
<svg class="a" style="left:124.5px;top:37px" width="7" height="6" viewBox="0 0 7 6"><path d="M0 .8H7M0 2.6H7M0 4.4H7" stroke="#8f8f8f" stroke-width="1"/></svg>
<div class="a" style="left:3.7px;top:44px;width:16px;height:16px;background:#cf8f2d;border:1px solid #dba24a"></div>
<div class="a" style="left:37.5px;top:45px;width:14.5px;height:14px;background:#2f2f2f;border-radius:1px"></div>
<div class="a" style="left:55.5px;top:45px;width:13px;height:14px;background:#4b4b4b;border-radius:1px"></div>
<div class="a" style="left:71px;top:45px;width:13px;height:14px;background:#4b4b4b;border-radius:1px"></div>
<div class="a" style="left:87.5px;top:45px;width:13px;height:14px;background:#4b4b4b;border-radius:1px"></div>
<svg class="a" style="left:40px;top:48px" width="10" height="8" viewBox="0 0 10 8"><rect x=".3" y=".3" width="9.4" height="7.4" fill="#d6d6d6"/><path d="M0 2.5H10M3.3 2.5V8M6.6 2.5V8M0 5.2H10" stroke="#2f2f2f" stroke-width=".9"/></svg>
<svg class="a" style="left:56.5px;top:47px" width="11" height="10" viewBox="0 0 11 10"><path d="M5.5 1C2.5 1 .7 3 .7 5.3S2.6 9 5 9c1 0 1.1-.9.9-1.5-.2-.8.4-1.3 1.3-1.2 1.800.2 3.100-.7 3.100-2.300C10.300 2.300 8.300 1 5.500 1Z" fill="none" stroke="#d2d2d2" stroke-width=".9"/><circle cx="3" cy="4" r=".8" fill="#d2d2d2"/><circle cx="5.300" cy="2.900" r=".8" fill="#d2d2d2"/><circle cx="7.800" cy="3.600" r=".8" fill="#d2d2d2"/><circle cx="3.400" cy="6.400" r=".8" fill="#d2d2d2"/></svg>
<svg class="a" style="left:72.5px;top:47.5px" width="10" height="9" viewBox="0 0 10 9"><defs><linearGradient id="gr1"><stop offset="0" stop-color="#e8e8e8"/><stop offset="1" stop-color="#2a2a2a"/></linearGradient></defs><rect x=".5" y=".5" width="9" height="8" fill="url(#gr1)" stroke="#a8a8a8" stroke-width=".7"/></svg>
<svg class="a" style="left:89.500px;top:47.500px" width="9" height="9" viewBox="0 0 9 9"><g fill="#d2d2d2"><rect x=".5" y=".5" width="1.800" height="1.800"/><rect x="6.700" y=".5" width="1.800" height="1.800"/><rect x="3.600" y="3.600" width="1.800" height="1.800"/><rect x=".5" y="6.700" width="1.800" height="1.800"/><rect x="6.700" y="6.700" width="1.800" height="1.800"/></g></svg>
<div class="t" style="left:3.100px;top:67.300px;font-size:6.600px;color:#d8d8d8;transform:scaleX(0.897);transform-origin:left center">Recent Colors</div>
<div class="a" style="left:3px;top:76.700px;width:129px;height:9.500px;border:1px solid #5e5e5e"></div>
<div class="a" style="left:3.8px;top:78px;width:7.900px;height:7px;background:#c8882a"></div>
<div class="a" style="left:12.2px;top:78px;width:7.900px;height:7px;background:#1f9c8e"></div>
<div class="a" style="left:20.6px;top:78px;width:7.900px;height:7px;background:#f08a9c"></div>
<div class="a" style="left:29.0px;top:78px;width:7.900px;height:7px;background:#e02a36"></div>
<div class="a" style="left:37.4px;top:78px;width:7.900px;height:7px;background:#7fb39b"></div>
<div class="a" style="left:45.8px;top:78px;width:7.900px;height:7px;background:#a88238"></div>
<div class="a" style="left:54.2px;top:78px;width:7.900px;height:7px;background:#f7cfa4"></div>
<div class="a" style="left:62.6px;top:78px;width:7.900px;height:7px;background:#dd5c36"></div>
<div class="a" style="left:71.0px;top:78px;width:7.900px;height:7px;background:#efefef"></div>
<div class="a" style="left:79.4px;top:78px;width:7.900px;height:7px;background:#e36b2b"></div>
<div class="a" style="left:87.8px;top:78px;width:7.900px;height:7px;background:#e9951d"></div>
<div class="a" style="left:96.2px;top:78px;width:7.900px;height:7px;background:#ffffff"></div>
<div class="a" style="left:104.6px;top:78px;width:7.900px;height:7px;background:#e0222d"></div>
<div class="a" style="left:113.0px;top:78px;width:7.900px;height:7px;background:#5a2a1c"></div>
<svg class="a" style="left:3.8px;top:78px" width="7.900" height="7" viewBox="0 0 8 7"><path d="M8 2.500V7H2.500Z" fill="#fff"/><path d="M8 4.800V7H5.500Z" fill="#111"/></svg><svg class="a" style="left:12.2px;top:78px" width="7.900" height="7" viewBox="0 0 8 7"><path d="M8 2.500V7H2.500Z" fill="#fff"/><path d="M8 4.800V7H5.500Z" fill="#111"/></svg><svg class="a" style="left:20.6px;top:78px" width="7.900" height="7" viewBox="0 0 8 7"><path d="M8 2.500V7H2.500Z" fill="#fff"/><path d="M8 4.800V7H5.500Z" fill="#111"/></svg><svg class="a" style="left:29.0px;top:78px" width="7.900" height="7" viewBox="0 0 8 7"><path d="M8 2.500V7H2.500Z" fill="#fff"/><path d="M8 4.800V7H5.500Z" fill="#111"/></svg>
<div class="t" style="left:3.100px;top:94.300px;font-size:6.600px;color:#d8d8d8;transform:scaleX(0.896);transform-origin:left center">Swatch Tiles</div>
<div class="a" style="left:3px;top:103px;width:129px;height:124.500px;border:1px solid #5e5e5e"></div>
<svg class="a" style="left:3.80px;top:105px" width="7.300" height="6.700" viewBox="0 0 7.300 6.700"><rect width="7.300" height="6.700" fill="#fff"/><path d="M0 6.700L7.300 0" stroke="#e8222e" stroke-width="1.200"/></svg>
<svg class="a" style="left:11.65px;top:105px" width="7.300" height="6.700" viewBox="0 0 7.300 6.700"><rect width="7.300" height="6.700" fill="#e8e8e8"/><path d="M3.650 0V6.700M0 3.350H7.300" stroke="#555" stroke-width=".6"/><circle cx="3.650" cy="3.350" r="1.700" fill="none" stroke="#555" stroke-width=".6"/></svg>
<svg class="a" style="left:19.50px;top:105px" width="7.300" height="6.700" viewBox="0 0 7.300 6.700"><rect width="7.300" height="6.700" fill="#fff"/></svg>
<svg class="a" style="left:27.35px;top:105px" width="7.300" height="6.700" viewBox="0 0 7.300 6.700"><rect width="7.300" height="6.700" fill="#0c0c0c"/></svg>
<svg class="a" style="left:35.20px;top:105px" width="7.300" height="6.700" viewBox="0 0 7.300 6.700"><rect width="7.300" height="6.700" fill="#f29a1e"/><g fill="#e0542a"><circle cx="1.800" cy="1.700" r="1"/><circle cx="5.500" cy="1.700" r="1"/><circle cx="1.800" cy="5" r="1"/><circle cx="5.500" cy="5" r="1"/><circle cx="3.650" cy="3.350" r=".8" fill="#fff8" /></g></svg>
<svg class="a" style="left:3.80px;top:114.3px" width="7.300" height="6.700" viewBox="0 0 7.300 6.700"><rect width="7.300" height="6.700" fill="#535353"/><path d="M.8 1.200H3L3.700 2.100H6.600V6H.8Z" fill="#c4c4c4"/><path d="M.8 2.900H6.600" stroke="#535353" stroke-width=".5"/></svg>
<svg class="a" style="left:11.65px;top:114.3px" width="7.300" height="6.700" viewBox="0 0 7.300 6.700"><rect width="7.300" height="6.700" fill="#fff"/></svg>
<svg class="a" style="left:19.50px;top:114.3px" width="7.300" height="6.700" viewBox="0 0 7.300 6.700"><rect width="7.300" height="6.700" fill="#fff"/></svg>
<svg class="a" style="left:27.35px;top:114.3px" width="7.300" height="6.700" viewBox="0 0 7.300 6.700"><rect width="7.300" height="6.700" fill="#f7a928"/><g fill="#e66a3a"><circle cx="1.800" cy="1.700" r="1"/><circle cx="5.500" cy="1.700" r="1"/><circle cx="1.800" cy="5" r="1"/><circle cx="5.500" cy="5" r="1"/><circle cx="3.650" cy="3.350" r=".8" fill="#fff8" /></g></svg>
<svg class="a" style="left:35.20px;top:114.3px" width="7.300" height="6.700" viewBox="0 0 7.300 6.700"><rect width="7.300" height="6.700" fill="#f3b03a"/><g fill="#8fcf9f"><circle cx="1.800" cy="1.700" r="1"/><circle cx="5.500" cy="1.700" r="1"/><circle cx="1.800" cy="5" r="1"/><circle cx="5.500" cy="5" r="1"/><circle cx="3.650" cy="3.350" r=".8" fill="#fff8" /></g></svg>
<svg class="a" style="left:43.05px;top:114.3px" width="7.300" height="6.700" viewBox="0 0 7.300 6.700"><rect width="7.300" height="6.700" fill="#f3b03a"/><g fill="#6cc8c8"><circle cx="1.800" cy="1.700" r="1"/><circle cx="5.500" cy="1.700" r="1"/><circle cx="1.800" cy="5" r="1"/><circle cx="5.500" cy="5" r="1"/><circle cx="3.650" cy="3.350" r=".8" fill="#fff8" /></g></svg>
<svg class="a" style="left:50.90px;top:114.3px" width="7.300" height="6.700" viewBox="0 0 7.300 6.700"><rect width="7.300" height="6.700" fill="#f0c040"/><g fill="#8fc67a"><circle cx="1.800" cy="1.700" r="1"/><circle cx="5.500" cy="1.700" r="1"/><circle cx="1.800" cy="5" r="1"/><circle cx="5.500" cy="5" r="1"/><circle cx="3.650" cy="3.350" r=".8" fill="#fff8" /></g></svg>
<svg class="a" style="left:58.75px;top:114.3px" width="7.300" height="6.700" viewBox="0 0 7.300 6.700"><rect width="7.300" height="6.700" fill="#f5b878"/><g fill="#f08a9c"><circle cx="1.800" cy="1.700" r="1"/><circle cx="5.500" cy="1.700" r="1"/><circle cx="1.800" cy="5" r="1"/><circle cx="5.500" cy="5" r="1"/><circle cx="3.650" cy="3.350" r=".8" fill="#fff8" /></g></svg>
<svg class="a" style="left:66.60px;top:114.3px" width="7.300" height="6.700" viewBox="0 0 7.300 6.700"><rect width="7.300" height="6.700" fill="#f3a93a"/><g fill="#a8c8a0"><circle cx="1.800" cy="1.700" r="1"/><circle cx="5.500" cy="1.700" r="1"/><circle cx="1.800" cy="5" r="1"/><circle cx="5.500" cy="5" r="1"/><circle cx="3.650" cy="3.350" r=".8" fill="#fff8" /></g></svg>
<svg class="a" style="left:3.80px;top:123.2px" width="7.300" height="6.700" viewBox="0 0 7.300 6.700"><rect width="7.300" height="6.700" fill="#535353"/><path d="M.8 1.200H3L3.700 2.100H6.600V6H.8Z" fill="#c4c4c4"/><path d="M.8 2.900H6.600" stroke="#535353" stroke-width=".5"/></svg>
<svg class="a" style="left:11.65px;top:123.2px" width="7.300" height="6.700" viewBox="0 0 7.300 6.700"><rect width="7.300" height="6.700" fill="#8b1c1c"/><g fill="#3a0c0c"><circle cx="1.500" cy="1.500" r=".7"/><circle cx="4.500" cy="1.500" r=".7"/><circle cx="3" cy="3.500" r=".7"/><circle cx="1.500" cy="5.300" r=".7"/></g><path d="M7.300 1.800V6.700H1.800Z" fill="#fff"/><path d="M7.300 4.600V6.700H5.200Z" fill="#111"/></svg>
<svg class="a" style="left:19.50px;top:123.2px" width="7.300" height="6.700" viewBox="0 0 7.300 6.700"><rect width="7.300" height="6.700" fill="#c8202a"/><g fill="#3a0c0c"><circle cx="1.500" cy="1.500" r=".7"/><circle cx="4.500" cy="1.500" r=".7"/><circle cx="3" cy="3.500" r=".7"/><circle cx="1.500" cy="5.300" r=".7"/></g><path d="M7.300 1.800V6.700H1.800Z" fill="#fff"/><path d="M7.300 4.600V6.700H5.200Z" fill="#111"/></svg>
<svg class="a" style="left:27.35px;top:123.2px" width="7.300" height="6.700" viewBox="0 0 7.300 6.700"><rect width="7.300" height="6.700" fill="#5a1f14"/><path d="M7.300 1.800V6.700H1.800Z" fill="#fff"/><path d="M7.300 4.600V6.700H5.200Z" fill="#111"/></svg>
<svg class="a" style="left:35.20px;top:123.2px" width="7.300" height="6.700" viewBox="0 0 7.300 6.700"><rect width="7.300" height="6.700" fill="#8a4a1c"/><path d="M7.300 1.800V6.700H1.800Z" fill="#fff"/><path d="M7.300 4.600V6.700H5.200Z" fill="#111"/></svg>
<svg class="a" style="left:43.05px;top:123.2px" width="7.300" height="6.700" viewBox="0 0 7.300 6.700"><rect width="7.300" height="6.700" fill="#b0623a"/><path d="M7.300 1.800V6.700H1.800Z" fill="#fff"/><path d="M7.300 4.600V6.700H5.200Z" fill="#111"/></svg>
<svg class="a" style="left:50.90px;top:123.2px" width="7.300" height="6.700" viewBox="0 0 7.300 6.700"><rect width="7.300" height="6.700" fill="#c5a882"/><path d="M7.300 1.800V6.700H1.800Z" fill="#fff"/><path d="M7.300 4.600V6.700H5.200Z" fill="#111"/></svg>
<svg class="a" style="left:58.75px;top:123.2px" width="7.300" height="6.700" viewBox="0 0 7.300 6.700"><rect width="7.300" height="6.700" fill="#c6842a"/><path d="M7.300 1.800V6.700H1.800Z" fill="#fff"/><path d="M7.300 4.600V6.700H5.200Z" fill="#111"/></svg>
<svg class="a" style="left:66.60px;top:123.2px" width="7.300" height="6.700" viewBox="0 0 7.300 6.700"><rect width="7.300" height="6.700" fill="#f8d77a"/><path d="M7.300 1.800V6.700H1.800Z" fill="#fff"/><path d="M7.300 4.600V6.700H5.200Z" fill="#111"/></svg>
<svg class="a" style="left:74.45px;top:123.2px" width="7.300" height="6.700" viewBox="0 0 7.300 6.700"><rect width="7.300" height="6.700" fill="#f5a81c"/><path d="M7.300 1.800V6.700H1.800Z" fill="#fff"/><path d="M7.300 4.600V6.700H5.200Z" fill="#111"/></svg>
<svg class="a" style="left:82.30px;top:123.2px" width="7.300" height="6.700" viewBox="0 0 7.300 6.700"><rect width="7.300" height="6.700" fill="#f0a51e"/><path d="M7.300 1.800V6.700H1.800Z" fill="#fff"/><path d="M7.300 4.600V6.700H5.200Z" fill="#111"/></svg>
<svg class="a" style="left:90.15px;top:123.2px" width="7.300" height="6.700" viewBox="0 0 7.300 6.700"><rect width="7.300" height="6.700" fill="#f5e59a"/><path d="M7.300 1.800V6.700H1.800Z" fill="#fff"/><path d="M7.300 4.600V6.700H5.200Z" fill="#111"/></svg>
<svg class="a" style="left:98.00px;top:123.2px" width="7.300" height="6.700" viewBox="0 0 7.300 6.700"><rect width="7.300" height="6.700" fill="#1c9a8c"/><path d="M7.300 1.800V6.700H1.800Z" fill="#fff"/><path d="M7.300 4.600V6.700H5.200Z" fill="#111"/></svg>
<svg class="a" style="left:105.85px;top:123.2px" width="7.300" height="6.700" viewBox="0 0 7.300 6.700"><rect width="7.300" height="6.700" fill="#5cc5c0"/><path d="M7.300 1.800V6.700H1.800Z" fill="#fff"/><path d="M7.300 4.600V6.700H5.200Z" fill="#111"/></svg>
<svg class="a" style="left:113.70px;top:123.2px" width="7.300" height="6.700" viewBox="0 0 7.300 6.700"><rect width="7.300" height="6.700" fill="#6cc8d0"/><path d="M7.300 1.800V6.700H1.800Z" fill="#fff"/><path d="M7.300 4.600V6.700H5.200Z" fill="#111"/></svg>
<div class="a" style="left:58.400px;top:122.700px;width:8.300px;height:7.700px;border:1px solid #d8d8d8;border-radius:1.500px"></div>
<svg class="a" style="left:3.80px;top:130.8px" width="7.300" height="6.700" viewBox="0 0 7.300 6.700"><rect width="7.300" height="6.700" fill="#4cc0b8"/><path d="M7.300 1.800V6.700H1.800Z" fill="#fff"/><path d="M7.300 4.600V6.700H5.200Z" fill="#111"/></svg>
<svg class="a" style="left:11.65px;top:130.8px" width="7.300" height="6.700" viewBox="0 0 7.300 6.700"><rect width="7.300" height="6.700" fill="#d8232e"/><path d="M7.300 1.800V6.700H1.800Z" fill="#fff"/><path d="M7.300 4.600V6.700H5.200Z" fill="#111"/></svg>
<svg class="a" style="left:19.50px;top:130.8px" width="7.300" height="6.700" viewBox="0 0 7.300 6.700"><rect width="7.300" height="6.700" fill="#f08a9c"/><path d="M7.300 1.800V6.700H1.800Z" fill="#fff"/><path d="M7.300 4.600V6.700H5.200Z" fill="#111"/></svg>
<svg class="a" style="left:27.35px;top:130.8px" width="7.300" height="6.700" viewBox="0 0 7.300 6.700"><rect width="7.300" height="6.700" fill="#e02830"/><path d="M7.300 1.800V6.700H1.800Z" fill="#fff"/><path d="M7.300 4.600V6.700H5.200Z" fill="#111"/></svg>
<svg class="a" style="left:35.20px;top:130.8px" width="7.300" height="6.700" viewBox="0 0 7.300 6.700"><rect width="7.300" height="6.700" fill="#111"/><path d="M7.300 1.800V6.700H1.800Z" fill="#fff"/><path d="M7.300 4.600V6.700H5.200Z" fill="#111"/></svg>
<div class="a" style="left:61.200px;top:139.200px;width:62px;height:11px;background:#c9c9c9;border:1px solid #dcdcdc;box-shadow:0 1px 2px #0006;z-index:5"></div>
<div class="t" style="left:65.500px;top:141.800px;font-size:6.2px;color:#5a5a5a;z-index:6;transform:scaleX(1.002);transform-origin:left center">R=198 G=132 B=0</div>
<svg class="a" style="left:4.5px;top:234.5px" width="9" height="8" viewBox="0 0 9 8"><path d="M1 7V2.500H2.500V7M3.500 7V1H5V7M6 7V3H7.500V7" fill="none" stroke="#a9a9a9" stroke-width=".8"/><circle cx="8.300" cy="7.300" r=".5" fill="#a9a9a9"/></svg>
<svg class="a" style="left:20.2px;top:234.5px" width="9" height="8" viewBox="0 0 9 8"><rect x=".5" y=".5" width="5" height="4.500" fill="none" stroke="#a9a9a9" stroke-width=".8"/><rect x="3" y="3" width="5.500" height="4.500" fill="#535353" stroke="#a9a9a9" stroke-width=".8"/><path d="M4.500 5.300H7M5.800 4.200L7 5.300L5.800 6.400" stroke="#a9a9a9" stroke-width=".6" fill="none"/></svg>
<svg class="a" style="left:52.3px;top:234.5px" width="9" height="8" viewBox="0 0 9 8"><rect x=".5" y=".5" width="3" height="3" fill="#a9a9a9"/><rect x="4.500" y=".5" width="3" height="3" fill="#a9a9a9"/><rect x=".5" y="4.500" width="3" height="3" fill="#a9a9a9"/><rect x="4.500" y="4.500" width="3" height="3" fill="#a9a9a9"/><circle cx="8.500" cy="7.300" r=".5" fill="#a9a9a9"/></svg>
<svg class="a" style="left:66.3px;top:234.5px" width="9" height="8" viewBox="0 0 9 8"><rect x=".8" y=".8" width="7" height="6.400" fill="none" stroke="#a9a9a9" stroke-width=".8"/><path d="M.8 2.800H7.800M3 2.800V7.200M5.500 2.800V7.200M.8 5H7.800" stroke="#a9a9a9" stroke-width=".6"/></svg>
<svg class="a" style="left:80.5px;top:234.5px" width="9" height="8" viewBox="0 0 9 8"><path d="M.5 1H3.500L4.300 2H8.500V7.200H.5Z" fill="#a9a9a9"/></svg>
<svg class="a" style="left:95.5px;top:234.5px" width="9" height="8" viewBox="0 0 9 8"><rect x="1" y=".8" width="6.500" height="6.500" fill="none" stroke="#a9a9a9" stroke-width=".8"/><path d="M4.250 2.500V5.600M2.700 4.050H5.800" stroke="#a9a9a9" stroke-width=".8"/></svg>
<svg class="a" style="left:110.5px;top:234.5px" width="9" height="8" viewBox="0 0 9 8"><path d="M1.500 2H7.500M3.500 2V1H5.500V2M2.200 2.300L2.600 7.500H6.400L6.800 2.300" fill="none" stroke="#a9a9a9" stroke-width=".8"/><path d="M3.800 3.300V6.500M5.200 3.300V6.500" stroke="#a9a9a9" stroke-width=".5"/></svg>

<!-- ===== generate patterns ===== -->
<div class="a" id="gp" style="left:561.600px;top:110px;width:203px;height:343.700px;background:#535353;border-radius:2px 2px 0 0;box-shadow:0 1px 3px #0005"></div>
<div class="a" style="left:561.600px;top:110px;width:203px;height:7.500px;background:#3c3c3c;border-radius:2px 2px 0 0"></div>
<svg class="a" style="left:564.500px;top:111.700px" width="5" height="5" viewBox="0 0 5 5"><path d="M.7 .7L4.300 4.300M4.300 .7L.7 4.300" stroke="#b0b0b0" stroke-width=".8"/></svg>
<svg class="a" style="left:756px;top:112px" width="5" height="4" viewBox="0 0 5 4"><path d="M2.200 .4L.6 2L2.200 3.600M4.400 .4L2.800 2L4.400 3.600" fill="none" stroke="#a0a0a0" stroke-width=".7"/></svg>
<div class="a" style="left:561.600px;top:117.500px;width:203px;height:14.300px;background:#424242"></div>
<div class="a" style="left:561.600px;top:117.500px;width:61.600px;height:14.300px;background:#535353"></div>
<div class="t" style="left:566.500px;top:121px;font-size:7px;font-weight:bold;color:#f0f0f0;transform:scaleX(0.871);transform-origin:left center">Generate Patterns</div>
<svg class="a" style="left:754.500px;top:122px" width="7" height="6" viewBox="0 0 7 6"><path d="M0 .8H7M0 2.600H7M0 4.400H7" stroke="#8c8c8c" stroke-width="1"/></svg>
<div class="t" style="left:568.500px;top:139.500px;font-size:7px;color:#d8d8d8;transform:scaleX(0.842);transform-origin:left center">Prompt</div>
<div class="a" style="left:568px;top:150.400px;width:190px;height:26.800px;background:#3f3f3f;border-radius:2px"></div>
<div class="t" style="left:570.700px;top:153.800px;font-size:7px;color:#f4f4f4;transform:scaleX(0.823);transform-origin:left center">PLAYFUL TIKI HEAD MASK, COCKTAIL BAR, MID CENTURY</div>
<div class="t" style="left:570.700px;top:164.200px;font-size:7px;color:#f4f4f4;transform:scaleX(0.780);transform-origin:left center">STYLE</div>
<svg class="a" style="left:746.500px;top:160.500px" width="5" height="5" viewBox="0 0 5 5"><path d="M.6 .6L4.400 4.400M4.400 .6L.6 4.400" stroke="#e0e0e0" stroke-width=".9"/></svg>
<svg class="a" style="left:569.500px;top:184px" width="11" height="11" viewBox="0 0 11 11"><path d="M3 8Q.8 8 .8 6T3 4Q3.500 1.800 5.800 1.800T8.500 4Q10.200 4.300 10 6" fill="none" stroke="#d8d8d8" stroke-width="1"/><circle cx="4.500" cy="6" r="1.600" fill="none" stroke="#d8d8d8" stroke-width=".8"/><circle cx="8" cy="7.500" r="2.200" fill="#3f86e8"/><path d="M6.900 7.500L7.700 8.300L9.100 6.700" fill="none" stroke="#fff" stroke-width=".6"/></svg>
<svg class="a" style="left:586.500px;top:184px" width="11" height="11" viewBox="0 0 11 11"><rect x="1" y="1" width="3.300" height="3.300" fill="#bdbdbd"/><rect x="1" y="5.500" width="3.300" height="3.300" fill="#9a9a9a"/><path d="M6 1.200L8.800 4M8.800 1.200L6 4" stroke="#d8d8d8" stroke-width=".9"/><circle cx="8" cy="7.500" r="2.200" fill="#3f86e8"/><path d="M6.900 7.500L7.700 8.300L9.100 6.700" fill="none" stroke="#fff" stroke-width=".6"/></svg>
<svg class="a" style="left:604.700px;top:185.100px" width="8.600" height="8.600" viewBox="0 0 10 10"><circle cx="5" cy="5" r="2.600" fill="none" stroke="#d8d8d8" stroke-width="1.600"/><circle cx="5" cy="5" r="4" fill="none" stroke="#d8d8d8" stroke-width="1.600" stroke-dasharray="1.400 1.740"/></svg>
<div class="a" style="left:618.800px;top:181px;width:139.200px;height:16.700px;background:#4e4e4e;border:1px solid #6c6c6c;border-radius:2px"></div>
<svg class="a" style="left:669.500px;top:184.500px" width="9" height="10" viewBox="0 0 9 10"><path d="M4.500 1.800H1.500Q.8 1.800 .8 2.500V8.500Q.8 9.200 1.500 9.200H6.500Q7.200 9.200 7.200 8.500V5.500" fill="none" stroke="#e4e4e4" stroke-width=".9"/><path d="M6.800 .3L7.300 1.700L8.700 2.200L7.300 2.700L6.800 4.100L6.300 2.700L4.900 2.200L6.300 1.700Z" fill="#e4e4e4"/><path d="M4.500 5.500L5.500 6.500L4.500 7.500L3.500 6.500Z" fill="#e4e4e4"/></svg>
<div class="t" style="left:681.500px;top:186px;font-size:7px;color:#f0f0f0;transform:scaleX(0.850);transform-origin:left center">Generate</div>
<div class="a" style="left:567.600px;top:203px;width:191.200px;height:223.600px;border:1px solid #5e5e5e;border-radius:1px"></div>
<div class="t" style="left:570.500px;top:207.100px;font-size:7px;color:#d8d8d8;transform:scaleX(0.882);transform-origin:left center">Variations</div>
<svg class="a" style="left:566.8px;top:216.8px" width="63" height="63" viewBox="-1 -1 63 63"><defs><clipPath id="tcl0"><rect width="61" height="61" rx="1.200"/></clipPath></defs><g clip-path="url(#tcl0)"><rect width="61" height="61" fill="#f0899b"/><g transform="translate(0 0)"><path d="M3.800 9H14.200L13.500 15Q12.500 19.500 9.700 20V27.500H13V29.500H5V27.500H8.300V20Q5.500 19.500 4.500 15Z" fill="#f7d95c"/><path d="M3.800 9H14.200L13.800 12.500H4.200Z" fill="#f5a41c"/><path d="M5.500 14L7 18.500M8 13.500L9 19M11 13.500L10.500 19M12.500 14L11.800 17.500" stroke="#fbf0b5" stroke-width="1"/><path d="M2.500 6.500L5.500 5L6 8.500Z" fill="#f5a41c"/><path d="M12.5 -0.5L14.0 2.0L16.7 1.3L16.0 4.0L18.5 5.5L16.0 7.0L16.7 9.7L14.0 9.0L12.5 11.5L11.0 9.0L8.3 9.7L9.0 7.0L6.5 5.5L9.0 4.0L8.3 1.3L11.0 2.0Z" fill="#b57a2c"/><path d="M19.500 25H29.500L28.500 30.500Q27 33 24.500 33T20.500 30.500Z" fill="#8fd3d8"/><path d="M20.500 27.500L22 29.500L23.500 27.500L25 29.500L26.500 27.500L28 29.500" stroke="#fbf0b5" stroke-width=".9" fill="none"/><rect x="19.500" y="24" width="10" height="1.700" fill="#fbf0b5"/><path d="M26.3 14.8L26.9 17.6L29.8 17.7L28.3 20.1L30.2 22.3L27.4 22.9L27.3 25.8L24.9 24.3L22.7 26.2L22.1 23.4L19.2 23.3L20.7 20.9L18.8 18.7L21.6 18.1L21.7 15.2L24.1 16.7Z" fill="#b57a2c"/><path d="M23.800 3V12M20.500 12.500H27.500" stroke="#b57a2c" stroke-width="1.400"/><path d="M20 0H28L24 4Z" fill="#8fd3d8"/><ellipse cx="18" cy="16" rx="2" ry="1.300" fill="#fbe5c0" transform="rotate(-30 18 16)"/><ellipse cx="2" cy="23" rx="1.800" ry="1.300" fill="none" stroke="#fbe5c0" stroke-width=".6"/><circle cx="17" cy="27" r=".9" fill="#7fd0d5"/></g><g transform="translate(0 30.5)"><path d="M3.800 9H14.200L13.500 15Q12.500 19.500 9.700 20V27.500H13V29.500H5V27.500H8.300V20Q5.500 19.500 4.500 15Z" fill="#f7d95c"/><path d="M3.800 9H14.200L13.800 12.500H4.200Z" fill="#f5a41c"/><path d="M5.500 14L7 18.500M8 13.500L9 19M11 13.500L10.500 19M12.500 14L11.800 17.500" stroke="#fbf0b5" stroke-width="1"/><path d="M2.500 6.500L5.500 5L6 8.500Z" fill="#f5a41c"/><path d="M12.5 -0.5L14.0 2.0L16.7 1.3L16.0 4.0L18.5 5.5L16.0 7.0L16.7 9.7L14.0 9.0L12.5 11.5L11.0 9.0L8.3 9.7L9.0 7.0L6.5 5.5L9.0 4.0L8.3 1.3L11.0 2.0Z" fill="#b57a2c"/><path d="M19.500 25H29.500L28.500 30.500Q27 33 24.500 33T20.500 30.500Z" fill="#8fd3d8"/><path d="M20.500 27.500L22 29.500L23.500 27.500L25 29.500L26.500 27.500L28 29.500" stroke="#fbf0b5" stroke-width=".9" fill="none"/><rect x="19.500" y="24" width="10" height="1.700" fill="#fbf0b5"/><path d="M26.3 14.8L26.9 17.6L29.8 17.7L28.3 20.1L30.2 22.3L27.4 22.9L27.3 25.8L24.9 24.3L22.7 26.2L22.1 23.4L19.2 23.3L20.7 20.9L18.8 18.7L21.6 18.1L21.7 15.2L24.1 16.7Z" fill="#b57a2c"/><path d="M23.800 3V12M20.500 12.500H27.500" stroke="#b57a2c" stroke-width="1.400"/><path d="M20 0H28L24 4Z" fill="#8fd3d8"/><ellipse cx="18" cy="16" rx="2" ry="1.300" fill="#fbe5c0" transform="rotate(-30 18 16)"/><ellipse cx="2" cy="23" rx="1.800" ry="1.300" fill="none" stroke="#fbe5c0" stroke-width=".6"/><circle cx="17" cy="27" r=".9" fill="#7fd0d5"/></g><g transform="translate(30.5 0)"><path d="M3.800 9H14.200L13.500 15Q12.500 19.500 9.700 20V27.500H13V29.500H5V27.500H8.300V20Q5.500 19.500 4.500 15Z" fill="#f7d95c"/><path d="M3.800 9H14.200L13.800 12.500H4.200Z" fill="#f5a41c"/><path d="M5.500 14L7 18.500M8 13.500L9 19M11 13.500L10.500 19M12.500 14L11.800 17.500" stroke="#fbf0b5" stroke-width="1"/><path d="M2.500 6.500L5.500 5L6 8.500Z" fill="#f5a41c"/><path d="M12.5 -0.5L14.0 2.0L16.7 1.3L16.0 4.0L18.5 5.5L16.0 7.0L16.7 9.7L14.0 9.0L12.5 11.5L11.0 9.0L8.3 9.7L9.0 7.0L6.5 5.5L9.0 4.0L8.3 1.3L11.0 2.0Z" fill="#b57a2c"/><path d="M19.500 25H29.500L28.500 30.500Q27 33 24.500 33T20.500 30.500Z" fill="#8fd3d8"/><path d="M20.500 27.500L22 29.500L23.500 27.500L25 29.500L26.500 27.500L28 29.500" stroke="#fbf0b5" stroke-width=".9" fill="none"/><rect x="19.500" y="24" width="10" height="1.700" fill="#fbf0b5"/><path d="M26.3 14.8L26.9 17.6L29.8 17.7L28.3 20.1L30.2 22.3L27.4 22.9L27.3 25.8L24.9 24.3L22.7 26.2L22.1 23.4L19.2 23.3L20.7 20.9L18.8 18.7L21.6 18.1L21.7 15.2L24.1 16.7Z" fill="#b57a2c"/><path d="M23.800 3V12M20.500 12.500H27.500" stroke="#b57a2c" stroke-width="1.400"/><path d="M20 0H28L24 4Z" fill="#8fd3d8"/><ellipse cx="18" cy="16" rx="2" ry="1.300" fill="#fbe5c0" transform="rotate(-30 18 16)"/><ellipse cx="2" cy="23" rx="1.800" ry="1.300" fill="none" stroke="#fbe5c0" stroke-width=".6"/><circle cx="17" cy="27" r=".9" fill="#7fd0d5"/></g><g transform="translate(30.5 30.5)"><path d="M3.800 9H14.200L13.500 15Q12.500 19.500 9.700 20V27.500H13V29.500H5V27.500H8.300V20Q5.500 19.500 4.500 15Z" fill="#f7d95c"/><path d="M3.800 9H14.200L13.800 12.500H4.200Z" fill="#f5a41c"/><path d="M5.500 14L7 18.500M8 13.500L9 19M11 13.500L10.500 19M12.500 14L11.800 17.500" stroke="#fbf0b5" stroke-width="1"/><path d="M2.500 6.500L5.500 5L6 8.500Z" fill="#f5a41c"/><path d="M12.5 -0.5L14.0 2.0L16.7 1.3L16.0 4.0L18.5 5.5L16.0 7.0L16.7 9.7L14.0 9.0L12.5 11.5L11.0 9.0L8.3 9.7L9.0 7.0L6.5 5.5L9.0 4.0L8.3 1.3L11.0 2.0Z" fill="#b57a2c"/><path d="M19.500 25H29.500L28.500 30.500Q27 33 24.500 33T20.500 30.500Z" fill="#8fd3d8"/><path d="M20.500 27.500L22 29.500L23.500 27.500L25 29.500L26.500 27.500L28 29.500" stroke="#fbf0b5" stroke-width=".9" fill="none"/><rect x="19.500" y="24" width="10" height="1.700" fill="#fbf0b5"/><path d="M26.3 14.8L26.9 17.6L29.8 17.7L28.3 20.1L30.2 22.3L27.4 22.9L27.3 25.8L24.9 24.3L22.7 26.2L22.1 23.4L19.2 23.3L20.7 20.9L18.8 18.7L21.6 18.1L21.7 15.2L24.1 16.7Z" fill="#b57a2c"/><path d="M23.800 3V12M20.500 12.500H27.500" stroke="#b57a2c" stroke-width="1.400"/><path d="M20 0H28L24 4Z" fill="#8fd3d8"/><ellipse cx="18" cy="16" rx="2" ry="1.300" fill="#fbe5c0" transform="rotate(-30 18 16)"/><ellipse cx="2" cy="23" rx="1.800" ry="1.300" fill="none" stroke="#fbe5c0" stroke-width=".6"/><circle cx="17" cy="27" r=".9" fill="#7fd0d5"/></g></g><rect x="-.5" y="-.5" width="62" height="62" rx="1.800" fill="none" stroke="#2a2a2a" stroke-width="1"/></svg>
<svg class="a" style="left:631px;top:216.8px" width="63" height="63" viewBox="-1 -1 63 63"><defs><clipPath id="tcl1"><rect width="61" height="61" rx="1.200"/></clipPath></defs><g clip-path="url(#tcl1)"><rect width="61" height="61" fill="#6ccbd0"/><path d="M4.5 -3.8L6.0 0.2L9.6 -2.2L8.4 2.0L12.7 2.1L9.3 4.8L12.7 7.5L8.4 7.6L9.6 11.8L6.0 9.4L4.5 13.4L3.0 9.4L-0.6 11.8L0.6 7.6L-3.7 7.5L-0.3 4.8L-3.7 2.1L0.6 2.0L-0.6 -2.2L3.0 0.2Z" fill="#f0849b"/><ellipse cx="4.5" cy="15.3" rx="5.600" ry="7.200" fill="#f6a821"/><path d="M0.8999999999999999 13.5h3l-.5 1.800h-2ZM5.1 13.5h3l-.5 1.800h-2Z" fill="#f0849b"/><path d="M1.7000000000000002 17.8h5.600q-.8 2.200 -2.800 2.200t-2.800 -2.200Z" fill="#fbf0b5"/><path d="M4.5 25.4L6.0 29.4L9.6 27.0L8.4 31.2L12.7 31.3L9.3 34.0L12.7 36.7L8.4 36.8L9.6 41.0L6.0 38.6L4.5 42.6L3.0 38.6L-0.6 41.0L0.6 36.8L-3.7 36.7L-0.3 34.0L-3.7 31.3L0.6 31.2L-0.6 27.0L3.0 29.4Z" fill="#f0849b"/><ellipse cx="4.5" cy="44.5" rx="5.600" ry="7.200" fill="#f6a821"/><path d="M0.8999999999999999 42.7h3l-.5 1.800h-2ZM5.1 42.7h3l-.5 1.800h-2Z" fill="#f0849b"/><path d="M1.7000000000000002 47.0h5.600q-.8 2.200 -2.800 2.200t-2.800 -2.200Z" fill="#fbf0b5"/><path d="M4.5 -33.1L6.0 -29.1L9.6 -31.5L8.4 -27.3L12.7 -27.2L9.3 -24.5L12.7 -21.8L8.4 -21.7L9.6 -17.5L6.0 -19.9L4.5 -15.9L3.0 -19.9L-0.6 -17.5L0.6 -21.7L-3.7 -21.8L-0.3 -24.5L-3.7 -27.2L0.6 -27.3L-0.6 -31.5L3.0 -29.1Z" fill="#f0849b"/><ellipse cx="4.5" cy="-14" rx="5.600" ry="7.200" fill="#f6a821"/><path d="M0.8999999999999999 -15.8h3l-.5 1.800h-2ZM5.1 -15.8h3l-.5 1.800h-2Z" fill="#f0849b"/><path d="M1.7000000000000002 -11.5h5.600q-.8 2.200 -2.800 2.200t-2.800 -2.200Z" fill="#fbf0b5"/><path d="M4.5 27.0L5.4 29.1L7.5 30.0L5.4 30.9L4.5 33.0L3.6 30.9L1.5 30.0L3.6 29.1Z" fill="#fbf0b5"/><circle cx="4.5" cy="30" r=".7" fill="#6ccbd0"/><path d="M4.5 56.0L5.4 58.1L7.5 59.0L5.4 59.9L4.5 62.0L3.6 59.9L1.5 59.0L3.6 58.1Z" fill="#fbf0b5"/><circle cx="4.5" cy="59" r=".7" fill="#6ccbd0"/><path d="M4.5 -2.0L5.4 0.1L7.5 1.0L5.4 1.9L4.5 4.0L3.6 1.9L1.5 1.0L3.6 0.1Z" fill="#fbf0b5"/><circle cx="4.5" cy="1" r=".7" fill="#6ccbd0"/><path d="M19.7 -18.1L21.2 -14.1L24.8 -16.5L23.6 -12.3L27.9 -12.2L24.5 -9.5L27.9 -6.8L23.6 -6.7L24.8 -2.5L21.2 -4.9L19.7 -0.9L18.2 -4.9L14.6 -2.5L15.8 -6.7L11.5 -6.8L14.9 -9.5L11.5 -12.2L15.8 -12.3L14.6 -16.5L18.2 -14.1Z" fill="#f0849b"/><ellipse cx="19.7" cy="1" rx="5.600" ry="7.200" fill="#f6a821"/><path d="M16.099999999999998 -0.8h3l-.5 1.800h-2ZM20.3 -0.8h3l-.5 1.800h-2Z" fill="#f0849b"/><path d="M16.9 3.5h5.600q-.8 2.200 -2.800 2.200t-2.800 -2.200Z" fill="#fbf0b5"/><path d="M19.7 11.1L21.2 15.1L24.8 12.7L23.6 16.9L27.9 17.0L24.5 19.7L27.9 22.4L23.6 22.5L24.8 26.7L21.2 24.3L19.7 28.3L18.2 24.3L14.6 26.7L15.8 22.5L11.5 22.4L14.9 19.7L11.5 17.0L15.8 16.9L14.6 12.7L18.2 15.1Z" fill="#f0849b"/><ellipse cx="19.7" cy="30.2" rx="5.600" ry="7.200" fill="#f6a821"/><path d="M16.099999999999998 28.4h3l-.5 1.800h-2ZM20.3 28.4h3l-.5 1.800h-2Z" fill="#f0849b"/><path d="M16.9 32.7h5.600q-.8 2.200 -2.800 2.200t-2.800 -2.200Z" fill="#fbf0b5"/><path d="M19.7 40.3L21.2 44.3L24.8 41.9L23.6 46.1L27.9 46.2L24.5 48.9L27.9 51.6L23.6 51.7L24.8 55.9L21.2 53.5L19.7 57.5L18.2 53.5L14.6 55.9L15.8 51.7L11.5 51.6L14.9 48.9L11.5 46.2L15.8 46.1L14.6 41.9L18.2 44.3Z" fill="#f0849b"/><ellipse cx="19.7" cy="59.4" rx="5.600" ry="7.200" fill="#f6a821"/><path d="M16.099999999999998 57.6h3l-.5 1.800h-2ZM20.3 57.6h3l-.5 1.800h-2Z" fill="#f0849b"/><path d="M16.9 61.9h5.600q-.8 2.200 -2.800 2.200t-2.800 -2.200Z" fill="#fbf0b5"/><path d="M19.7 12.5L20.6 14.6L22.7 15.5L20.6 16.4L19.7 18.5L18.8 16.4L16.7 15.5L18.8 14.6Z" fill="#fbf0b5"/><circle cx="19.7" cy="15.5" r=".7" fill="#6ccbd0"/><path d="M19.7 41.8L20.6 43.9L22.7 44.8L20.6 45.7L19.7 47.8L18.8 45.7L16.7 44.8L18.8 43.9Z" fill="#fbf0b5"/><circle cx="19.7" cy="44.8" r=".7" fill="#6ccbd0"/><path d="M34.9 -3.8L36.4 0.2L40.0 -2.2L38.8 2.0L43.1 2.1L39.7 4.8L43.1 7.5L38.8 7.6L40.0 11.8L36.4 9.4L34.9 13.4L33.4 9.4L29.8 11.8L31.0 7.6L26.7 7.5L30.1 4.8L26.7 2.1L31.0 2.0L29.8 -2.2L33.4 0.2Z" fill="#f0849b"/><ellipse cx="34.9" cy="15.3" rx="5.600" ry="7.200" fill="#f6a821"/><path d="M31.299999999999997 13.5h3l-.5 1.800h-2ZM35.5 13.5h3l-.5 1.800h-2Z" fill="#f0849b"/><path d="M32.1 17.8h5.600q-.8 2.200 -2.800 2.200t-2.800 -2.200Z" fill="#fbf0b5"/><path d="M34.9 25.4L36.4 29.4L40.0 27.0L38.8 31.2L43.1 31.3L39.7 34.0L43.1 36.7L38.8 36.8L40.0 41.0L36.4 38.6L34.9 42.6L33.4 38.6L29.8 41.0L31.0 36.8L26.7 36.7L30.1 34.0L26.7 31.3L31.0 31.2L29.8 27.0L33.4 29.4Z" fill="#f0849b"/><ellipse cx="34.9" cy="44.5" rx="5.600" ry="7.200" fill="#f6a821"/><path d="M31.299999999999997 42.7h3l-.5 1.800h-2ZM35.5 42.7h3l-.5 1.800h-2Z" fill="#f0849b"/><path d="M32.1 47.0h5.600q-.8 2.200 -2.800 2.200t-2.800 -2.200Z" fill="#fbf0b5"/><path d="M34.9 -33.1L36.4 -29.1L40.0 -31.5L38.8 -27.3L43.1 -27.2L39.7 -24.5L43.1 -21.8L38.8 -21.7L40.0 -17.5L36.4 -19.9L34.9 -15.9L33.4 -19.9L29.8 -17.5L31.0 -21.7L26.7 -21.8L30.1 -24.5L26.7 -27.2L31.0 -27.3L29.8 -31.5L33.4 -29.1Z" fill="#f0849b"/><ellipse cx="34.9" cy="-14" rx="5.600" ry="7.200" fill="#f6a821"/><path d="M31.299999999999997 -15.8h3l-.5 1.800h-2ZM35.5 -15.8h3l-.5 1.800h-2Z" fill="#f0849b"/><path d="M32.1 -11.5h5.600q-.8 2.200 -2.800 2.200t-2.800 -2.200Z" fill="#fbf0b5"/><path d="M34.9 27.0L35.8 29.1L37.9 30.0L35.8 30.9L34.9 33.0L34.0 30.9L31.9 30.0L34.0 29.1Z" fill="#fbf0b5"/><circle cx="34.9" cy="30" r=".7" fill="#6ccbd0"/><path d="M34.9 56.0L35.8 58.1L37.9 59.0L35.8 59.9L34.9 62.0L34.0 59.9L31.9 59.0L34.0 58.1Z" fill="#fbf0b5"/><circle cx="34.9" cy="59" r=".7" fill="#6ccbd0"/><path d="M34.9 -2.0L35.8 0.1L37.9 1.0L35.8 1.9L34.9 4.0L34.0 1.9L31.9 1.0L34.0 0.1Z" fill="#fbf0b5"/><circle cx="34.9" cy="1" r=".7" fill="#6ccbd0"/><path d="M50.1 -18.1L51.6 -14.1L55.2 -16.5L54.0 -12.3L58.3 -12.2L54.9 -9.5L58.3 -6.8L54.0 -6.7L55.2 -2.5L51.6 -4.9L50.1 -0.9L48.6 -4.9L45.0 -2.5L46.2 -6.7L41.9 -6.8L45.3 -9.5L41.9 -12.2L46.2 -12.3L45.0 -16.5L48.6 -14.1Z" fill="#f0849b"/><ellipse cx="50.1" cy="1" rx="5.600" ry="7.200" fill="#f6a821"/><path d="M46.5 -0.8h3l-.5 1.800h-2ZM50.7 -0.8h3l-.5 1.800h-2Z" fill="#f0849b"/><path d="M47.300000000000004 3.5h5.600q-.8 2.200 -2.800 2.200t-2.800 -2.200Z" fill="#fbf0b5"/><path d="M50.1 11.1L51.6 15.1L55.2 12.7L54.0 16.9L58.3 17.0L54.9 19.7L58.3 22.4L54.0 22.5L55.2 26.7L51.6 24.3L50.1 28.3L48.6 24.3L45.0 26.7L46.2 22.5L41.9 22.4L45.3 19.7L41.9 17.0L46.2 16.9L45.0 12.7L48.6 15.1Z" fill="#f0849b"/><ellipse cx="50.1" cy="30.2" rx="5.600" ry="7.200" fill="#f6a821"/><path d="M46.5 28.4h3l-.5 1.800h-2ZM50.7 28.4h3l-.5 1.800h-2Z" fill="#f0849b"/><path d="M47.300000000000004 32.7h5.600q-.8 2.200 -2.800 2.200t-2.800 -2.200Z" fill="#fbf0b5"/><path d="M50.1 40.3L51.6 44.3L55.2 41.9L54.0 46.1L58.3 46.2L54.9 48.9L58.3 51.6L54.0 51.7L55.2 55.9L51.6 53.5L50.1 57.5L48.6 53.5L45.0 55.9L46.2 51.7L41.9 51.6L45.3 48.9L41.9 46.2L46.2 46.1L45.0 41.9L48.6 44.3Z" fill="#f0849b"/><ellipse cx="50.1" cy="59.4" rx="5.600" ry="7.200" fill="#f6a821"/><path d="M46.5 57.6h3l-.5 1.800h-2ZM50.7 57.6h3l-.5 1.800h-2Z" fill="#f0849b"/><path d="M47.300000000000004 61.9h5.600q-.8 2.200 -2.800 2.200t-2.800 -2.200Z" fill="#fbf0b5"/><path d="M50.1 12.5L51.0 14.6L53.1 15.5L51.0 16.4L50.1 18.5L49.2 16.4L47.1 15.5L49.2 14.6Z" fill="#fbf0b5"/><circle cx="50.1" cy="15.5" r=".7" fill="#6ccbd0"/><path d="M50.1 41.8L51.0 43.9L53.1 44.8L51.0 45.7L50.1 47.8L49.2 45.7L47.1 44.8L49.2 43.9Z" fill="#fbf0b5"/><circle cx="50.1" cy="44.8" r=".7" fill="#6ccbd0"/><path d="M65.3 -3.8L66.8 0.2L70.4 -2.2L69.2 2.0L73.5 2.1L70.1 4.8L73.5 7.5L69.2 7.6L70.4 11.8L66.8 9.4L65.3 13.4L63.8 9.4L60.2 11.8L61.4 7.6L57.1 7.5L60.5 4.8L57.1 2.1L61.4 2.0L60.2 -2.2L63.8 0.2Z" fill="#f0849b"/><ellipse cx="65.3" cy="15.3" rx="5.600" ry="7.200" fill="#f6a821"/><path d="M61.699999999999996 13.5h3l-.5 1.800h-2ZM65.89999999999999 13.5h3l-.5 1.800h-2Z" fill="#f0849b"/><path d="M62.5 17.8h5.600q-.8 2.200 -2.800 2.200t-2.800 -2.200Z" fill="#fbf0b5"/><path d="M65.3 25.4L66.8 29.4L70.4 27.0L69.2 31.2L73.5 31.3L70.1 34.0L73.5 36.7L69.2 36.8L70.4 41.0L66.8 38.6L65.3 42.6L63.8 38.6L60.2 41.0L61.4 36.8L57.1 36.7L60.5 34.0L57.1 31.3L61.4 31.2L60.2 27.0L63.8 29.4Z" fill="#f0849b"/><ellipse cx="65.3" cy="44.5" rx="5.600" ry="7.200" fill="#f6a821"/><path d="M61.699999999999996 42.7h3l-.5 1.800h-2ZM65.89999999999999 42.7h3l-.5 1.800h-2Z" fill="#f0849b"/><path d="M62.5 47.0h5.600q-.8 2.200 -2.800 2.200t-2.800 -2.200Z" fill="#fbf0b5"/><path d="M65.3 -33.1L66.8 -29.1L70.4 -31.5L69.2 -27.3L73.5 -27.2L70.1 -24.5L73.5 -21.8L69.2 -21.7L70.4 -17.5L66.8 -19.9L65.3 -15.9L63.8 -19.9L60.2 -17.5L61.4 -21.7L57.1 -21.8L60.5 -24.5L57.1 -27.2L61.4 -27.3L60.2 -31.5L63.8 -29.1Z" fill="#f0849b"/><ellipse cx="65.3" cy="-14" rx="5.600" ry="7.200" fill="#f6a821"/><path d="M61.699999999999996 -15.8h3l-.5 1.800h-2ZM65.89999999999999 -15.8h3l-.5 1.800h-2Z" fill="#f0849b"/><path d="M62.5 -11.5h5.600q-.8 2.200 -2.800 2.200t-2.800 -2.200Z" fill="#fbf0b5"/><path d="M65.3 27.0L66.2 29.1L68.3 30.0L66.2 30.9L65.3 33.0L64.4 30.9L62.3 30.0L64.4 29.1Z" fill="#fbf0b5"/><circle cx="65.3" cy="30" r=".7" fill="#6ccbd0"/><path d="M65.3 56.0L66.2 58.1L68.3 59.0L66.2 59.9L65.3 62.0L64.4 59.9L62.3 59.0L64.4 58.1Z" fill="#fbf0b5"/><circle cx="65.3" cy="59" r=".7" fill="#6ccbd0"/><path d="M65.3 -2.0L66.2 0.1L68.3 1.0L66.2 1.9L65.3 4.0L64.4 1.9L62.3 1.0L64.4 0.1Z" fill="#fbf0b5"/><circle cx="65.3" cy="1" r=".7" fill="#6ccbd0"/><path d="M10.5 6.5h3l-1.500 3.500Z" fill="#f0849b"/><circle cx="14.5" cy="11" r=".8" fill="#fbf0b5"/><path d="M25.5 20.5h3l-1.500 3.500Z" fill="#f0849b"/><circle cx="29.5" cy="25" r=".8" fill="#fbf0b5"/><path d="M40.5 6.5h3l-1.500 3.500Z" fill="#f0849b"/><circle cx="44.5" cy="11" r=".8" fill="#fbf0b5"/><path d="M55.5 20.5h3l-1.500 3.500Z" fill="#f0849b"/><circle cx="59.5" cy="25" r=".8" fill="#fbf0b5"/><path d="M10.5 35.5h3l-1.500 3.500Z" fill="#f0849b"/><circle cx="14.5" cy="40" r=".8" fill="#fbf0b5"/><path d="M25.5 50.5h3l-1.500 3.500Z" fill="#f0849b"/><circle cx="29.5" cy="55" r=".8" fill="#fbf0b5"/><path d="M40.5 35.5h3l-1.500 3.500Z" fill="#f0849b"/><circle cx="44.5" cy="40" r=".8" fill="#fbf0b5"/><path d="M55.5 50.5h3l-1.500 3.500Z" fill="#f0849b"/><circle cx="59.5" cy="55" r=".8" fill="#fbf0b5"/></g><rect x="-.5" y="-.5" width="62" height="62" rx="1.800" fill="none" stroke="#2a2a2a" stroke-width="1"/></svg>
<svg class="a" style="left:695.2px;top:216.8px" width="63" height="63" viewBox="-1 -1 63 63"><defs><clipPath id="tcl2"><rect width="61" height="61" rx="1.200"/></clipPath></defs><g clip-path="url(#tcl2)"><rect width="61" height="61" fill="#6fccd1"/><g transform="translate(5.8 13) scale(1.28)"><path d="M-4.800 -6H4.800L4.500 0Q3.500 5 .8 5.500V10.500H3.500V12H-3.500V10.500H-.8V5.500Q-3.500 5 -4.500 0Z" fill="#fbf0b5"/><path d="M-4.800 -6H4.800L4.700 -2.500H-4.700Z" fill="#f5a41c"/><path d="M-4.700 -4.500H4.700" stroke="#fbe08a" stroke-width=".8"/><path d="M0.0 -13.1L1.2 -11.5L3.3 -11.8L3.0 -9.7L4.6 -8.5L3.0 -7.3L3.3 -5.2L1.2 -5.5L0.0 -3.9L-1.2 -5.5L-3.3 -5.2L-3.0 -7.3L-4.6 -8.5L-3.0 -9.7L-3.3 -11.8L-1.2 -11.5Z" fill="#f0849b"/></g><g transform="translate(5.8 43) scale(1.28)"><path d="M-4.800 -6H4.800L4.500 0Q3.500 5 .8 5.500V10.500H3.500V12H-3.500V10.500H-.8V5.500Q-3.500 5 -4.500 0Z" fill="#fbf0b5"/><path d="M-4.800 -6H4.800L4.700 -2.500H-4.700Z" fill="#f5a41c"/><path d="M-4.700 -4.500H4.700" stroke="#fbe08a" stroke-width=".8"/><path d="M0.0 -13.1L1.2 -11.5L3.3 -11.8L3.0 -9.7L4.6 -8.5L3.0 -7.3L3.3 -5.2L1.2 -5.5L0.0 -3.9L-1.2 -5.5L-3.3 -5.2L-3.0 -7.3L-4.6 -8.5L-3.0 -9.7L-3.3 -11.8L-1.2 -11.5Z" fill="#f0849b"/></g><g transform="translate(36.5 13) scale(1.28)"><path d="M-4.800 -6H4.800L4.500 0Q3.500 5 .8 5.500V10.500H3.500V12H-3.500V10.500H-.8V5.500Q-3.500 5 -4.500 0Z" fill="#fbf0b5"/><path d="M-4.800 -6H4.800L4.700 -2.500H-4.700Z" fill="#f5a41c"/><path d="M-4.700 -4.500H4.700" stroke="#fbe08a" stroke-width=".8"/><path d="M0.0 -13.1L1.2 -11.5L3.3 -11.8L3.0 -9.7L4.6 -8.5L3.0 -7.3L3.3 -5.2L1.2 -5.5L0.0 -3.9L-1.2 -5.5L-3.3 -5.2L-3.0 -7.3L-4.6 -8.5L-3.0 -9.7L-3.3 -11.8L-1.2 -11.5Z" fill="#f0849b"/></g><g transform="translate(36.5 43) scale(1.28)"><path d="M-4.800 -6H4.800L4.500 0Q3.500 5 .8 5.500V10.500H3.500V12H-3.500V10.500H-.8V5.500Q-3.500 5 -4.500 0Z" fill="#fbf0b5"/><path d="M-4.800 -6H4.800L4.700 -2.500H-4.700Z" fill="#f5a41c"/><path d="M-4.700 -4.500H4.700" stroke="#fbe08a" stroke-width=".8"/><path d="M0.0 -13.1L1.2 -11.5L3.3 -11.8L3.0 -9.7L4.6 -8.5L3.0 -7.3L3.3 -5.2L1.2 -5.5L0.0 -3.9L-1.2 -5.5L-3.3 -5.2L-3.0 -7.3L-4.6 -8.5L-3.0 -9.7L-3.3 -11.8L-1.2 -11.5Z" fill="#f0849b"/></g><g transform="translate(21.3 -3) scale(1.25)"><path d="M-5 -3H5L3.500 5Q2 10 0 11Q-2 10 -3.500 5Z" fill="#e8a02a"/><path d="M-4.500 -1H4.500M-4 2H4M-3 5H3" stroke="#fbe08a" stroke-width=".8"/><path d="M0.0 -13.8L1.5 -11.1L4.4 -12.2L3.8 -9.2L6.7 -8.2L4.3 -6.2L5.9 -3.6L2.8 -3.6L2.3 -0.6L0.0 -2.6L-2.3 -0.6L-2.8 -3.6L-5.9 -3.6L-4.3 -6.2L-6.7 -8.2L-3.8 -9.2L-4.4 -12.2L-1.5 -11.1Z" fill="#f0849b"/></g><g transform="translate(21.3 27) scale(1.25)"><path d="M-5 -3H5L3.500 5Q2 10 0 11Q-2 10 -3.500 5Z" fill="#e8a02a"/><path d="M-4.500 -1H4.500M-4 2H4M-3 5H3" stroke="#fbe08a" stroke-width=".8"/><path d="M0.0 -13.8L1.5 -11.1L4.4 -12.2L3.8 -9.2L6.7 -8.2L4.3 -6.2L5.9 -3.6L2.8 -3.6L2.3 -0.6L0.0 -2.6L-2.3 -0.6L-2.8 -3.6L-5.9 -3.6L-4.3 -6.2L-6.7 -8.2L-3.8 -9.2L-4.4 -12.2L-1.5 -11.1Z" fill="#f0849b"/></g><g transform="translate(21.3 57) scale(1.25)"><path d="M-5 -3H5L3.500 5Q2 10 0 11Q-2 10 -3.500 5Z" fill="#e8a02a"/><path d="M-4.500 -1H4.500M-4 2H4M-3 5H3" stroke="#fbe08a" stroke-width=".8"/><path d="M0.0 -13.8L1.5 -11.1L4.4 -12.2L3.8 -9.2L6.7 -8.2L4.3 -6.2L5.9 -3.6L2.8 -3.6L2.3 -0.6L0.0 -2.6L-2.3 -0.6L-2.8 -3.6L-5.9 -3.6L-4.3 -6.2L-6.7 -8.2L-3.8 -9.2L-4.4 -12.2L-1.5 -11.1Z" fill="#f0849b"/></g><g transform="translate(52 -3) scale(1.25)"><path d="M-5 -3H5L3.500 5Q2 10 0 11Q-2 10 -3.500 5Z" fill="#e8a02a"/><path d="M-4.500 -1H4.500M-4 2H4M-3 5H3" stroke="#fbe08a" stroke-width=".8"/><path d="M0.0 -13.8L1.5 -11.1L4.4 -12.2L3.8 -9.2L6.7 -8.2L4.3 -6.2L5.9 -3.6L2.8 -3.6L2.3 -0.6L0.0 -2.6L-2.3 -0.6L-2.8 -3.6L-5.9 -3.6L-4.3 -6.2L-6.7 -8.2L-3.8 -9.2L-4.4 -12.2L-1.5 -11.1Z" fill="#f0849b"/></g><g transform="translate(52 27) scale(1.25)"><path d="M-5 -3H5L3.500 5Q2 10 0 11Q-2 10 -3.500 5Z" fill="#e8a02a"/><path d="M-4.500 -1H4.500M-4 2H4M-3 5H3" stroke="#fbe08a" stroke-width=".8"/><path d="M0.0 -13.8L1.5 -11.1L4.4 -12.2L3.8 -9.2L6.7 -8.2L4.3 -6.2L5.9 -3.6L2.8 -3.6L2.3 -0.6L0.0 -2.6L-2.3 -0.6L-2.8 -3.6L-5.9 -3.6L-4.3 -6.2L-6.7 -8.2L-3.8 -9.2L-4.4 -12.2L-1.5 -11.1Z" fill="#f0849b"/></g><g transform="translate(52 57) scale(1.25)"><path d="M-5 -3H5L3.500 5Q2 10 0 11Q-2 10 -3.500 5Z" fill="#e8a02a"/><path d="M-4.500 -1H4.500M-4 2H4M-3 5H3" stroke="#fbe08a" stroke-width=".8"/><path d="M0.0 -13.8L1.5 -11.1L4.4 -12.2L3.8 -9.2L6.7 -8.2L4.3 -6.2L5.9 -3.6L2.8 -3.6L2.3 -0.6L0.0 -2.6L-2.3 -0.6L-2.8 -3.6L-5.9 -3.6L-4.3 -6.2L-6.7 -8.2L-3.8 -9.2L-4.4 -12.2L-1.5 -11.1Z" fill="#f0849b"/></g><path d="M5.8 23.5L7.1 25.3L9.3 25.2L8.7 27.3L10.2 29.0L8.1 29.9L7.8 32.1L5.8 31.0L3.8 32.1L3.5 29.9L1.4 29.0L2.9 27.3L2.3 25.2L4.5 25.3Z" fill="#f0849b" opacity=".0"/><path d="M5.8 53.5L7.1 55.3L9.3 55.2L8.7 57.3L10.2 59.0L8.1 59.9L7.8 62.1L5.8 61.0L3.8 62.1L3.5 59.9L1.4 59.0L2.9 57.3L2.3 55.2L4.5 55.3Z" fill="#f0849b" opacity=".0"/><path d="M5.8 -6.5L7.1 -4.7L9.3 -4.8L8.7 -2.7L10.2 -1.0L8.1 -0.1L7.8 2.1L5.8 1.0L3.8 2.1L3.5 -0.1L1.4 -1.0L2.9 -2.7L2.3 -4.8L4.5 -4.7Z" fill="#f0849b" opacity=".0"/><path d="M36.5 23.5L37.8 25.3L40.0 25.2L39.4 27.3L40.9 29.0L38.8 29.9L38.5 32.1L36.5 31.0L34.5 32.1L34.2 29.9L32.1 29.0L33.6 27.3L33.0 25.2L35.2 25.3Z" fill="#f0849b" opacity=".0"/><path d="M36.5 53.5L37.8 55.3L40.0 55.2L39.4 57.3L40.9 59.0L38.8 59.9L38.5 62.1L36.5 61.0L34.5 62.1L34.2 59.9L32.1 59.0L33.6 57.3L33.0 55.2L35.2 55.3Z" fill="#f0849b" opacity=".0"/><path d="M36.5 -6.5L37.8 -4.7L40.0 -4.8L39.4 -2.7L40.9 -1.0L38.8 -0.1L38.5 2.1L36.5 1.0L34.5 2.1L34.2 -0.1L32.1 -1.0L33.6 -2.7L33.0 -4.8L35.2 -4.7Z" fill="#f0849b" opacity=".0"/><circle cx="14" cy="7" r="1.700" fill="none" stroke="#a8dfe0" stroke-width=".6"/><circle cx="29" cy="14" r="1.700" fill="none" stroke="#a8dfe0" stroke-width=".6"/><circle cx="45" cy="9" r="1.700" fill="none" stroke="#a8dfe0" stroke-width=".6"/><circle cx="13" cy="38" r="1.700" fill="none" stroke="#a8dfe0" stroke-width=".6"/><circle cx="29" cy="45" r="1.700" fill="none" stroke="#a8dfe0" stroke-width=".6"/><circle cx="45" cy="40" r="1.700" fill="none" stroke="#a8dfe0" stroke-width=".6"/><circle cx="58" cy="20" r="1.700" fill="none" stroke="#a8dfe0" stroke-width=".6"/><circle cx="58" cy="50" r="1.700" fill="none" stroke="#a8dfe0" stroke-width=".6"/><circle cx="14" cy="24" r="1.700" fill="none" stroke="#a8dfe0" stroke-width=".6"/><circle cx="44" cy="25" r="1.700" fill="none" stroke="#a8dfe0" stroke-width=".6"/><circle cx="14" cy="54" r="1.700" fill="none" stroke="#a8dfe0" stroke-width=".6"/><circle cx="44" cy="55" r="1.700" fill="none" stroke="#a8dfe0" stroke-width=".6"/><rect x="28" y="19" width="2" height="2" fill="#fbf0b5"/><rect x="59" y="32" width="2" height="2" fill="#fbf0b5"/><rect x="12" y="47" width="2" height="2" fill="#fbf0b5"/><rect x="28" y="32" width="2" height="2" fill="#fbf0b5"/><rect x="43" y="17" width="2" height="2" fill="#fbf0b5"/><rect x="43" y="47" width="2" height="2" fill="#fbf0b5"/></g><rect x="-.5" y="-.5" width="62" height="62" rx="1.800" fill="none" stroke="#2a2a2a" stroke-width="1"/></svg>
<svg class="a" style="left:566.8px;top:280.8px" width="63" height="63" viewBox="-1 -1 63 63"><defs><clipPath id="tcl3"><rect width="61" height="61" rx="1.200"/></clipPath></defs><g clip-path="url(#tcl3)"><rect width="61" height="61" fill="#fcc97a"/><g transform="scale(0.2383)" fill="#a6dce0"><use href="#hd" x="0" y="55.5"/><use href="#hd" x="0" y="183.5"/><path d="M0 -16.5L8 -8.5L0 -0.5L-8 -8.5Z M0 -12.0L3.5 -8.5L0 -5.0L-3.5 -8.5Z" fill-rule="evenodd"/><path d="M0 111.5L8 119.5L0 127.5L-8 119.5Z M0 116.0L3.5 119.5L0 123.0L-3.5 119.5Z" fill-rule="evenodd"/><path d="M0 239.5L8 247.5L0 255.5L-8 247.5Z M0 244.0L3.5 247.5L0 251.0L-3.5 247.5Z" fill-rule="evenodd"/><use href="#hd" x="64" y="-8.5"/><use href="#hd" x="64" y="119.5"/><use href="#hd" x="64" y="247.5"/><path d="M64 47.5L72 55.5L64 63.5L56 55.5Z M64 52.0L67.5 55.5L64 59.0L60.5 55.5Z" fill-rule="evenodd"/><path d="M64 175.5L72 183.5L64 191.5L56 183.5Z M64 180.0L67.5 183.5L64 187.0L60.5 183.5Z" fill-rule="evenodd"/><use href="#hd" x="128" y="55.5"/><use href="#hd" x="128" y="183.5"/><path d="M128 -16.5L136 -8.5L128 -0.5L120 -8.5Z M128 -12.0L131.5 -8.5L128 -5.0L124.5 -8.5Z" fill-rule="evenodd"/><path d="M128 111.5L136 119.5L128 127.5L120 119.5Z M128 116.0L131.5 119.5L128 123.0L124.5 119.5Z" fill-rule="evenodd"/><path d="M128 239.5L136 247.5L128 255.5L120 247.5Z M128 244.0L131.5 247.5L128 251.0L124.5 247.5Z" fill-rule="evenodd"/><use href="#hd" x="192" y="-8.5"/><use href="#hd" x="192" y="119.5"/><use href="#hd" x="192" y="247.5"/><path d="M192 47.5L200 55.5L192 63.5L184 55.5Z M192 52.0L195.5 55.5L192 59.0L188.5 55.5Z" fill-rule="evenodd"/><path d="M192 175.5L200 183.5L192 191.5L184 183.5Z M192 180.0L195.5 183.5L192 187.0L188.5 183.5Z" fill-rule="evenodd"/><use href="#hd" x="256" y="55.5"/><use href="#hd" x="256" y="183.5"/><path d="M256 -16.5L264 -8.5L256 -0.5L248 -8.5Z M256 -12.0L259.5 -8.5L256 -5.0L252.5 -8.5Z" fill-rule="evenodd"/><path d="M256 111.5L264 119.5L256 127.5L248 119.5Z M256 116.0L259.5 119.5L256 123.0L252.5 119.5Z" fill-rule="evenodd"/><path d="M256 239.5L264 247.5L256 255.5L248 247.5Z M256 244.0L259.5 247.5L256 251.0L252.5 247.5Z" fill-rule="evenodd"/></g></g><rect x=".2" y=".2" width="60.600" height="60.600" rx="1.500" fill="none" stroke="#4f93e6" stroke-width="2.400"/></svg>
<svg class="a" style="left:631px;top:280.8px" width="63" height="63" viewBox="-1 -1 63 63"><defs><clipPath id="tcl4"><rect width="61" height="61" rx="1.200"/></clipPath></defs><g clip-path="url(#tcl4)"><rect width="61" height="61" fill="#fbf2b2"/><g stroke="#f0859b" stroke-linecap="round" fill="none"><path d="M-56.0 63.0L-47.0 51.8" stroke-width="2.8"/><path d="M-44.6 48.8L-38.3 40.8" stroke-width="2.4"/><path d="M-34.8 36.4L-28.6 28.7" stroke-width="1.9"/><path d="M-25.1 24.4L-15.0 11.8" stroke-width="1.9"/><path d="M-12.8 9.0L-2.8 -3.5" stroke-width="2.0"/><path d="M1.5 -8.9L9.4 -18.8" stroke-width="3.3"/><path d="M-50.4 63.0L-38.8 48.5" stroke-width="3.4"/><path d="M-35.7 44.6L-29.6 37.0" stroke-width="2.3"/><path d="M-25.2 31.5L-18.1 22.6" stroke-width="2.3"/><path d="M-15.8 19.7L-1.7 2.1" stroke-width="2.7"/><path d="M0.8 -1.0L13.1 -16.3" stroke-width="2.7"/><path d="M-44.8 63.0L-38.5 55.2" stroke-width="2.1"/><path d="M-36.4 52.5L-23.7 36.6" stroke-width="2.3"/><path d="M-20.5 32.6L-8.8 18.0" stroke-width="2.3"/><path d="M-5.5 13.9L8.3 -3.4" stroke-width="2.2"/><path d="M12.3 -8.3L23.8 -22.8" stroke-width="3.2"/><path d="M-39.2 63.0L-26.0 46.5" stroke-width="3.4"/><path d="M-23.2 43.0L-16.4 34.5" stroke-width="3.0"/><path d="M-13.2 30.5L-6.0 21.5" stroke-width="1.9"/><path d="M-2.7 17.3L9.9 1.6" stroke-width="2.7"/><path d="M14.0 -3.5L28.7 -21.9" stroke-width="2.9"/><path d="M-33.6 63.0L-21.8 48.3" stroke-width="2.5"/><path d="M-18.2 43.7L-3.9 25.8" stroke-width="2.6"/><path d="M0.8 20.0L13.3 4.4" stroke-width="2.9"/><path d="M15.5 1.7L27.8 -13.7" stroke-width="3.1"/><path d="M-28.0 63.0L-19.4 52.3" stroke-width="2.9"/><path d="M-16.4 48.4L-10.5 41.2" stroke-width="2.1"/><path d="M-7.2 37.0L-0.4 28.5" stroke-width="3.0"/><path d="M1.8 25.8L8.7 17.1" stroke-width="2.4"/><path d="M11.4 13.8L26.1 -4.6" stroke-width="2.5"/><path d="M28.3 -7.3L39.6 -21.5" stroke-width="3.1"/><path d="M-22.4 63.0L-7.8 44.8" stroke-width="2.5"/><path d="M-5.0 41.3L4.3 29.6" stroke-width="3.3"/><path d="M8.8 24.0L15.9 15.1" stroke-width="2.2"/><path d="M18.4 12.0L26.5 1.9" stroke-width="2.7"/><path d="M29.8 -2.3L38.2 -12.7" stroke-width="2.5"/><path d="M40.2 -15.2L49.6 -27.0" stroke-width="3.3"/><path d="M-16.8 63.0L-4.0 47.0" stroke-width="2.8"/><path d="M-0.6 42.7L12.1 26.9" stroke-width="3.2"/><path d="M14.2 24.2L27.9 7.1" stroke-width="3.1"/><path d="M32.4 1.5L42.0 -10.6" stroke-width="2.0"/><path d="M45.2 -14.5L57.4 -29.7" stroke-width="1.9"/><path d="M-11.2 63.0L-3.4 53.3" stroke-width="2.3"/><path d="M-1.0 50.2L5.2 42.5" stroke-width="2.0"/><path d="M7.2 40.0L13.8 31.7" stroke-width="1.8"/><path d="M16.8 27.9L31.5 9.6" stroke-width="2.0"/><path d="M35.3 4.9L43.5 -5.4" stroke-width="2.4"/><path d="M46.5 -9.1L53.3 -17.7" stroke-width="3.4"/><path d="M-5.6 63.0L4.8 49.9" stroke-width="1.9"/><path d="M8.2 45.7L14.9 37.4" stroke-width="2.2"/><path d="M17.8 33.7L32.0 15.9" stroke-width="1.8"/><path d="M34.5 12.9L50.0 -6.5" stroke-width="2.0"/><path d="M53.5 -10.8L64.7 -24.9" stroke-width="2.6"/><path d="M0.0 63.0L15.8 43.3" stroke-width="2.9"/><path d="M20.2 37.8L28.5 27.4" stroke-width="2.1"/><path d="M31.5 23.6L45.2 6.5" stroke-width="3.0"/><path d="M48.7 2.2L57.7 -9.1" stroke-width="3.1"/><path d="M60.3 -12.4L76.2 -32.2" stroke-width="3.1"/><path d="M5.6 63.0L19.7 45.4" stroke-width="2.2"/><path d="M23.8 40.3L34.8 26.5" stroke-width="1.8"/><path d="M37.8 22.8L43.7 15.4" stroke-width="2.2"/><path d="M46.4 12.0L59.2 -4.0" stroke-width="2.5"/><path d="M63.9 -9.9L79.3 -29.1" stroke-width="3.3"/><path d="M11.2 63.0L20.6 51.3" stroke-width="2.2"/><path d="M23.2 48.0L30.9 38.4" stroke-width="2.8"/><path d="M33.4 35.2L48.4 16.5" stroke-width="2.6"/><path d="M52.7 11.1L65.1 -4.4" stroke-width="1.9"/><path d="M69.4 -9.7L81.8 -25.3" stroke-width="3.1"/><path d="M16.8 63.0L30.2 46.2" stroke-width="2.1"/><path d="M33.5 42.1L47.3 24.8" stroke-width="3.1"/><path d="M50.3 21.2L66.0 1.5" stroke-width="2.4"/><path d="M69.1 -2.4L84.5 -21.7" stroke-width="2.1"/><path d="M22.4 63.0L29.3 54.3" stroke-width="3.2"/><path d="M31.7 51.3L45.7 33.8" stroke-width="3.1"/><path d="M48.1 30.8L63.9 11.1" stroke-width="2.4"/><path d="M67.8 6.3L79.1 -7.9" stroke-width="1.8"/><path d="M81.4 -10.8L97.1 -30.4" stroke-width="2.6"/><path d="M28.0 63.0L43.3 43.9" stroke-width="3.2"/><path d="M46.5 39.8L60.7 22.1" stroke-width="2.2"/><path d="M63.3 18.9L72.0 8.1" stroke-width="2.7"/><path d="M74.6 4.7L82.9 -5.7" stroke-width="2.0"/><path d="M86.1 -9.6L101.2 -28.5" stroke-width="2.5"/><path d="M33.6 63.0L45.3 48.4" stroke-width="2.5"/><path d="M49.8 42.8L64.9 23.8" stroke-width="2.7"/><path d="M68.3 19.6L79.4 5.8" stroke-width="2.5"/><path d="M81.4 3.2L88.9 -6.2" stroke-width="3.1"/><path d="M91.0 -8.7L98.4 -17.9" stroke-width="3.0"/><path d="M39.2 63.0L50.6 48.8" stroke-width="2.6"/><path d="M53.5 45.1L64.9 30.9" stroke-width="2.0"/><path d="M69.1 25.7L80.5 11.4" stroke-width="2.2"/><path d="M83.2 8.0L96.8 -9.0" stroke-width="2.7"/><path d="M100.2 -13.3L113.8 -30.2" stroke-width="2.5"/><path d="M44.8 63.0L56.8 48.0" stroke-width="2.6"/><path d="M60.2 43.8L73.0 27.8" stroke-width="2.7"/><path d="M76.3 23.7L86.8 10.5" stroke-width="2.9"/><path d="M91.5 4.7L106.2 -13.7" stroke-width="2.2"/><path d="M50.4 63.0L61.8 48.7" stroke-width="3.1"/><path d="M66.5 42.9L73.5 34.1" stroke-width="2.5"/><path d="M75.8 31.2L82.2 23.3" stroke-width="1.9"/><path d="M84.9 19.9L97.4 4.2" stroke-width="3.2"/><path d="M101.6 -1.0L108.8 -10.0" stroke-width="2.9"/><path d="M112.8 -15.0L119.9 -23.9" stroke-width="3.3"/><path d="M56.0 63.0L63.9 53.1" stroke-width="2.4"/><path d="M68.6 47.3L79.2 34.0" stroke-width="3.1"/><path d="M84.0 28.0L91.3 18.9" stroke-width="2.6"/><path d="M94.5 14.9L103.6 3.5" stroke-width="2.3"/><path d="M106.2 0.3L119.3 -16.1" stroke-width="2.7"/><path d="M61.6 63.0L71.8 50.3" stroke-width="2.3"/><path d="M73.8 47.7L85.9 32.6" stroke-width="1.9"/><path d="M89.4 28.3L105.2 8.5" stroke-width="3.4"/><path d="M109.4 3.2L116.1 -5.1" stroke-width="1.9"/><path d="M118.8 -8.6L132.5 -25.7" stroke-width="2.0"/><path d="M67.2 63.0L77.2 50.5" stroke-width="3.1"/><path d="M81.7 44.8L90.0 34.5" stroke-width="3.3"/><path d="M92.5 31.4L104.0 17.0" stroke-width="1.9"/><path d="M107.9 12.1L114.1 4.3" stroke-width="2.5"/><path d="M118.1 -0.6L124.4 -8.5" stroke-width="2.8"/><path d="M129.1 -14.3L143.0 -31.7" stroke-width="3.2"/><path d="M72.8 63.0L79.1 55.1" stroke-width="2.5"/><path d="M83.5 49.6L92.6 38.2" stroke-width="3.3"/><path d="M96.2 33.8L104.6 23.3" stroke-width="2.6"/><path d="M106.9 20.3L115.0 10.2" stroke-width="2.1"/><path d="M117.3 7.4L123.4 -0.3" stroke-width="2.3"/><path d="M126.0 -3.5L134.8 -14.5" stroke-width="2.3"/><path d="M78.4 63.0L89.2 49.5" stroke-width="2.4"/><path d="M91.7 46.4L97.5 39.1" stroke-width="1.8"/><path d="M100.2 35.8L113.4 19.2" stroke-width="2.1"/><path d="M117.0 14.8L127.5 1.6" stroke-width="2.0"/><path d="M132.1 -4.1L146.2 -21.8" stroke-width="2.6"/><path d="M84.0 63.0L98.3 45.2" stroke-width="2.6"/><path d="M101.4 41.3L114.1 25.3" stroke-width="2.3"/><path d="M118.9 19.4L133.1 1.6" stroke-width="2.8"/><path d="M137.1 -3.4L146.9 -15.7" stroke-width="1.9"/></g><g transform="translate(7.4 8.7) scale(1.3)"><path d="M-4.8 -3.0L-4.8 -8.7L-2.9 -5.2L-2.4 -10.0L-1.0 -5.2L0.0 -10.5L1.0 -5.2L2.4 -10.0L2.8 -5.2L4.8 -8.7L4.8 -3.0Z" fill="#a6dde2"/><path d="M-4.300 -3.500H4.300V3Q4.300 7.500 0 8Q-4.300 7.500 -4.300 3Z" fill="#6fc9d2"/><path d="M-4 -1.800H-.6L-1 0H-3.600ZM.6 -1.800H4L3.600 0H1Z" fill="#f5a41c"/><ellipse cx="0" cy="4" rx="2.300" ry="1.300" fill="#f0859b"/></g><g transform="translate(7.4 39.2) scale(1.3)"><path d="M-4.8 -3.0L-4.8 -8.7L-2.9 -5.2L-2.4 -10.0L-1.0 -5.2L0.0 -10.5L1.0 -5.2L2.4 -10.0L2.8 -5.2L4.8 -8.7L4.8 -3.0Z" fill="#a6dde2"/><path d="M-4.300 -3.500H4.300V3Q4.300 7.500 0 8Q-4.300 7.500 -4.300 3Z" fill="#6fc9d2"/><path d="M-4 -1.800H-.6L-1 0H-3.600ZM.6 -1.800H4L3.600 0H1Z" fill="#f5a41c"/><ellipse cx="0" cy="4" rx="2.300" ry="1.300" fill="#f0859b"/></g><g transform="translate(38.2 8.7) scale(1.3)"><path d="M-4.8 -3.0L-4.8 -8.7L-2.9 -5.2L-2.4 -10.0L-1.0 -5.2L0.0 -10.5L1.0 -5.2L2.4 -10.0L2.8 -5.2L4.8 -8.7L4.8 -3.0Z" fill="#a6dde2"/><path d="M-4.300 -3.500H4.300V3Q4.300 7.500 0 8Q-4.300 7.500 -4.300 3Z" fill="#6fc9d2"/><path d="M-4 -1.800H-.6L-1 0H-3.600ZM.6 -1.800H4L3.600 0H1Z" fill="#f5a41c"/><ellipse cx="0" cy="4" rx="2.300" ry="1.300" fill="#f0859b"/></g><g transform="translate(38.2 39.2) scale(1.3)"><path d="M-4.8 -3.0L-4.8 -8.7L-2.9 -5.2L-2.4 -10.0L-1.0 -5.2L0.0 -10.5L1.0 -5.2L2.4 -10.0L2.8 -5.2L4.8 -8.7L4.8 -3.0Z" fill="#a6dde2"/><path d="M-4.300 -3.500H4.300V3Q4.300 7.500 0 8Q-4.300 7.500 -4.300 3Z" fill="#6fc9d2"/><path d="M-4 -1.800H-.6L-1 0H-3.600ZM.6 -1.800H4L3.600 0H1Z" fill="#f5a41c"/><ellipse cx="0" cy="4" rx="2.300" ry="1.300" fill="#f0859b"/></g><g transform="translate(22.8 24) scale(1.3)"><path d="M-4.8 -3.0L-4.8 -8.7L-2.9 -5.2L-2.4 -10.0L-1.0 -5.2L0.0 -10.5L1.0 -5.2L2.4 -10.0L2.8 -5.2L4.8 -8.7L4.8 -3.0Z" fill="#c9973a"/><path d="M-4.300 -3.500H4.300V3Q4.300 7.500 0 8Q-4.300 7.500 -4.300 3Z" fill="#f5a41c"/><path d="M-4 -1.800H-.6L-1 0H-3.600ZM.6 -1.800H4L3.600 0H1Z" fill="#6fc9d2"/><ellipse cx="0" cy="4" rx="2.300" ry="1.300" fill="#f0859b"/></g><g transform="translate(22.8 54.5) scale(1.3)"><path d="M-4.8 -3.0L-4.8 -8.7L-2.9 -5.2L-2.4 -10.0L-1.0 -5.2L0.0 -10.5L1.0 -5.2L2.4 -10.0L2.8 -5.2L4.8 -8.7L4.8 -3.0Z" fill="#c9973a"/><path d="M-4.300 -3.500H4.300V3Q4.300 7.500 0 8Q-4.300 7.500 -4.300 3Z" fill="#f5a41c"/><path d="M-4 -1.800H-.6L-1 0H-3.600ZM.6 -1.800H4L3.600 0H1Z" fill="#6fc9d2"/><ellipse cx="0" cy="4" rx="2.300" ry="1.300" fill="#f0859b"/></g><g transform="translate(22.8 -6.5) scale(1.3)"><path d="M-4.8 -3.0L-4.8 -8.7L-2.9 -5.2L-2.4 -10.0L-1.0 -5.2L0.0 -10.5L1.0 -5.2L2.4 -10.0L2.8 -5.2L4.8 -8.7L4.8 -3.0Z" fill="#c9973a"/><path d="M-4.300 -3.500H4.300V3Q4.300 7.500 0 8Q-4.300 7.500 -4.300 3Z" fill="#f5a41c"/><path d="M-4 -1.800H-.6L-1 0H-3.600ZM.6 -1.800H4L3.600 0H1Z" fill="#6fc9d2"/><ellipse cx="0" cy="4" rx="2.300" ry="1.300" fill="#f0859b"/></g><g transform="translate(53.6 24) scale(1.3)"><path d="M-4.8 -3.0L-4.8 -8.7L-2.9 -5.2L-2.4 -10.0L-1.0 -5.2L0.0 -10.5L1.0 -5.2L2.4 -10.0L2.8 -5.2L4.8 -8.7L4.8 -3.0Z" fill="#c9973a"/><path d="M-4.300 -3.500H4.300V3Q4.300 7.500 0 8Q-4.300 7.500 -4.300 3Z" fill="#f5a41c"/><path d="M-4 -1.800H-.6L-1 0H-3.600ZM.6 -1.800H4L3.600 0H1Z" fill="#6fc9d2"/><ellipse cx="0" cy="4" rx="2.300" ry="1.300" fill="#f0859b"/></g><g transform="translate(53.6 54.5) scale(1.3)"><path d="M-4.8 -3.0L-4.8 -8.7L-2.9 -5.2L-2.4 -10.0L-1.0 -5.2L0.0 -10.5L1.0 -5.2L2.4 -10.0L2.8 -5.2L4.8 -8.7L4.8 -3.0Z" fill="#c9973a"/><path d="M-4.300 -3.500H4.300V3Q4.300 7.500 0 8Q-4.300 7.500 -4.300 3Z" fill="#f5a41c"/><path d="M-4 -1.800H-.6L-1 0H-3.600ZM.6 -1.800H4L3.600 0H1Z" fill="#6fc9d2"/><ellipse cx="0" cy="4" rx="2.300" ry="1.300" fill="#f0859b"/></g><g transform="translate(53.6 -6.5) scale(1.3)"><path d="M-4.8 -3.0L-4.8 -8.7L-2.9 -5.2L-2.4 -10.0L-1.0 -5.2L0.0 -10.5L1.0 -5.2L2.4 -10.0L2.8 -5.2L4.8 -8.7L4.8 -3.0Z" fill="#c9973a"/><path d="M-4.300 -3.500H4.300V3Q4.300 7.500 0 8Q-4.300 7.500 -4.300 3Z" fill="#f5a41c"/><path d="M-4 -1.800H-.6L-1 0H-3.600ZM.6 -1.800H4L3.600 0H1Z" fill="#6fc9d2"/><ellipse cx="0" cy="4" rx="2.300" ry="1.300" fill="#f0859b"/></g></g><rect x="-.5" y="-.5" width="62" height="62" rx="1.800" fill="none" stroke="#2a2a2a" stroke-width="1"/></svg>
<svg class="a" style="left:695.2px;top:280.8px" width="63" height="63" viewBox="-1 -1 63 63"><defs><clipPath id="tcl5"><rect width="61" height="61" rx="1.200"/></clipPath></defs><g clip-path="url(#tcl5)"><rect width="61" height="61" fill="#f0859b"/><g transform="translate(6.6 7) scale(1.12)"><path d="M-4.800 -5.500H4.800V3Q4.800 7.500 0 8Q-4.800 7.500 -4.800 3Z" fill="#f0a222"/><path d="M-3.800 -2.500H-.8V-.8H-3.800ZM.8 -2.500H3.800V-.8H.8Z M-.8 0H.8L1.300 2.800H-1.300Z M-2.500 4.300H2.500V5.600H-2.500Z" fill="#c9801c"/></g><g transform="translate(6.6 38) scale(1.12)"><path d="M-5.0 -5.5L-5.0 -9.3L-3.0 -7.0L-2.5 -10.2L-1.0 -7.0L0.0 -10.5L1.0 -7.0L2.5 -10.2L3.0 -7.0L5.0 -9.3L5.0 -5.5Z" fill="#fbeeb8"/><path d="M-4.800 -5.500H4.800V3Q4.800 7.500 0 8Q-4.800 7.500 -4.800 3Z" fill="#fbeeb8"/><path d="M-3.800 -2.500H-.8V-.8H-3.800ZM.8 -2.500H3.800V-.8H.8Z M-.8 0H.8L1.300 2.800H-1.300Z M-2.500 4.300H2.500V5.600H-2.500Z" fill="#d9a05a"/></g><g transform="translate(21.8 22) scale(1.12)"><path d="M-5.0 -5.5L-5.0 -9.3L-3.0 -7.0L-2.5 -10.2L-1.0 -7.0L0.0 -10.5L1.0 -7.0L2.5 -10.2L3.0 -7.0L5.0 -9.3L5.0 -5.5Z" fill="#6cc7cc"/><path d="M-4.800 -5.500H4.800V3Q4.800 7.500 0 8Q-4.800 7.500 -4.800 3Z" fill="#fbeeb8"/><path d="M-3.800 -2.500H-.8V-.8H-3.800ZM.8 -2.500H3.800V-.8H.8Z M-.8 0H.8L1.300 2.800H-1.300Z M-2.500 4.300H2.500V5.600H-2.500Z" fill="#d9a05a"/></g><g transform="translate(21.8 52) scale(1.12)"><path d="M-5.0 -5.5L-5.0 -9.3L-3.0 -7.0L-2.5 -10.2L-1.0 -7.0L0.0 -10.5L1.0 -7.0L2.5 -10.2L3.0 -7.0L5.0 -9.3L5.0 -5.5Z" fill="#6cc7cc"/><path d="M-4.800 -5.500H4.800V3Q4.800 7.500 0 8Q-4.800 7.500 -4.800 3Z" fill="#fbeeb8"/><path d="M-3.800 -2.500H-.8V-.8H-3.800ZM.8 -2.500H3.800V-.8H.8Z M-.8 0H.8L1.300 2.800H-1.300Z M-2.500 4.300H2.500V5.600H-2.500Z" fill="#d9a05a"/></g><g transform="translate(37 7) scale(1.12)"><path d="M-4.800 -5.500H4.800V3Q4.800 7.500 0 8Q-4.800 7.500 -4.800 3Z" fill="#fbeeb8"/><path d="M-3.800 -2.500H-.8V-.8H-3.800ZM.8 -2.500H3.800V-.8H.8Z M-.8 0H.8L1.300 2.800H-1.300Z M-2.500 4.300H2.500V5.600H-2.500Z" fill="#d9a05a"/></g><g transform="translate(37 36) scale(1.12)"><path d="M-5.0 -5.5L-5.0 -9.3L-3.0 -7.0L-2.5 -10.2L-1.0 -7.0L0.0 -10.5L1.0 -7.0L2.5 -10.2L3.0 -7.0L5.0 -9.3L5.0 -5.5Z" fill="#6cc7cc"/><path d="M-4.800 -5.500H4.800V3Q4.800 7.500 0 8Q-4.800 7.500 -4.800 3Z" fill="#f0a222"/><path d="M-3.800 -2.500H-.8V-.8H-3.800ZM.8 -2.500H3.800V-.8H.8Z M-.8 0H.8L1.300 2.800H-1.300Z M-2.500 4.300H2.500V5.600H-2.500Z" fill="#c9801c"/></g><g transform="translate(52.2 23.5) scale(1.12)"><path d="M-5.0 -5.5L-5.0 -9.3L-3.0 -7.0L-2.5 -10.2L-1.0 -7.0L0.0 -10.5L1.0 -7.0L2.5 -10.2L3.0 -7.0L5.0 -9.3L5.0 -5.5Z" fill="#6cc7cc"/><path d="M-4.800 -5.500H4.800V3Q4.800 7.500 0 8Q-4.800 7.500 -4.800 3Z" fill="#fbeeb8"/><path d="M-3.800 -2.500H-.8V-.8H-3.800ZM.8 -2.500H3.800V-.8H.8Z M-.8 0H.8L1.300 2.800H-1.300Z M-2.500 4.300H2.500V5.600H-2.500Z" fill="#d9a05a"/></g><g transform="translate(52.2 53.5) scale(1.12)"><path d="M-5.0 -5.5L-5.0 -9.3L-3.0 -7.0L-2.5 -10.2L-1.0 -7.0L0.0 -10.5L1.0 -7.0L2.5 -10.2L3.0 -7.0L5.0 -9.3L5.0 -5.5Z" fill="#6cc7cc"/><path d="M-4.800 -5.500H4.800V3Q4.800 7.500 0 8Q-4.800 7.500 -4.800 3Z" fill="#f0a222"/><path d="M-3.800 -2.500H-.8V-.8H-3.800ZM.8 -2.500H3.800V-.8H.8Z M-.8 0H.8L1.300 2.800H-1.300Z M-2.500 4.300H2.500V5.600H-2.500Z" fill="#c9801c"/></g><g transform="translate(6.6 66) scale(1.12)"><path d="M-5.0 -5.5L-5.0 -9.3L-3.0 -7.0L-2.5 -10.2L-1.0 -7.0L0.0 -10.5L1.0 -7.0L2.5 -10.2L3.0 -7.0L5.0 -9.3L5.0 -5.5Z" fill="#6cc7cc"/><path d="M-4.800 -5.500H4.800V3Q4.800 7.500 0 8Q-4.800 7.500 -4.800 3Z" fill="#fbeeb8"/><path d="M-3.800 -2.500H-.8V-.8H-3.800ZM.8 -2.500H3.800V-.8H.8Z M-.8 0H.8L1.300 2.800H-1.300Z M-2.500 4.300H2.500V5.600H-2.500Z" fill="#d9a05a"/></g><g transform="translate(37 66) scale(1.12)"><path d="M-5.0 -5.5L-5.0 -9.3L-3.0 -7.0L-2.5 -10.2L-1.0 -7.0L0.0 -10.5L1.0 -7.0L2.5 -10.2L3.0 -7.0L5.0 -9.3L5.0 -5.5Z" fill="#fbeeb8"/><path d="M-4.800 -5.500H4.800V3Q4.800 7.500 0 8Q-4.800 7.500 -4.800 3Z" fill="#fbeeb8"/><path d="M-3.800 -2.500H-.8V-.8H-3.800ZM.8 -2.500H3.800V-.8H.8Z M-.8 0H.8L1.300 2.800H-1.300Z M-2.500 4.300H2.500V5.600H-2.500Z" fill="#d9a05a"/></g><path d="M19.8 2.2L19.9 3.6L20.8 4.8L19.4 4.9L18.2 5.8L18.1 4.4L17.2 3.2L18.6 3.1Z" fill="#fbeeb8"/><path d="M27.8 3.2L27.9 4.6L28.8 5.8L27.4 5.9L26.2 6.8L26.1 5.4L25.2 4.2L26.6 4.1Z" fill="#fbeeb8"/><path d="M49.8 2.2L49.9 3.6L50.8 4.8L49.4 4.9L48.2 5.8L48.1 4.4L47.2 3.2L48.6 3.1Z" fill="#fbeeb8"/><path d="M57.8 3.2L57.9 4.6L58.8 5.8L57.4 5.9L56.2 6.8L56.1 5.4L55.2 4.2L56.6 4.1Z" fill="#f0a222"/><path d="M14.8 18.2L14.9 19.6L15.8 20.8L14.4 20.9L13.2 21.8L13.1 20.4L12.2 19.2L13.6 19.1Z" fill="#fbeeb8"/><path d="M29.8 12.2L29.9 13.6L30.8 14.8L29.4 14.9L28.2 15.8L28.1 14.4L27.2 13.2L28.6 13.1Z" fill="#6cc7cc"/><path d="M44.8 20.2L44.9 21.6L45.8 22.8L44.4 22.9L43.2 23.8L43.1 22.4L42.2 21.2L43.6 21.1Z" fill="#fbeeb8"/><path d="M44.8 12.2L44.9 13.6L45.8 14.8L44.4 14.9L43.2 15.8L43.1 14.4L42.2 13.2L43.6 13.1Z" fill="#6cc7cc"/><path d="M16.8 31.2L16.9 32.6L17.8 33.8L16.4 33.9L15.2 34.8L15.1 33.4L14.2 32.2L15.6 32.1Z" fill="#f0a222"/><path d="M29.8 34.2L29.9 35.6L30.8 36.8L29.4 36.9L28.2 37.8L28.1 36.4L27.2 35.2L28.6 35.1Z" fill="#fbeeb8"/><path d="M46.8 35.2L46.9 36.6L47.8 37.8L46.4 37.9L45.2 38.8L45.1 37.4L44.2 36.2L45.6 36.1Z" fill="#f0a222"/><path d="M57.8 36.2L57.9 37.6L58.8 38.8L57.4 38.9L56.2 39.8L56.1 38.4L55.2 37.2L56.6 37.1Z" fill="#fbeeb8"/><path d="M13.8 48.2L13.9 49.6L14.8 50.8L13.4 50.9L12.2 51.8L12.1 50.4L11.2 49.2L12.6 49.1Z" fill="#6cc7cc"/><path d="M44.8 50.2L44.9 51.6L45.8 52.8L44.4 52.9L43.2 53.8L43.1 52.4L42.2 51.2L43.6 51.1Z" fill="#fbeeb8"/><path d="M29.8 43.2L29.9 44.6L30.8 45.8L29.4 45.9L28.2 46.8L28.1 45.4L27.2 44.2L28.6 44.1Z" fill="#fbeeb8"/><path d="M12.8 50.2L12.9 51.6L13.8 52.8L12.4 52.9L11.2 53.8L11.1 52.4L10.2 51.2L11.6 51.1Z" fill="#fbeeb8"/></g><rect x="-.5" y="-.5" width="62" height="62" rx="1.800" fill="none" stroke="#2a2a2a" stroke-width="1"/></svg>

<svg class="a" style="left:569.500px;top:434.500px" width="9" height="9" viewBox="0 0 9 9"><circle cx="4.500" cy="4.500" r="3.700" fill="none" stroke="#d0d0d0" stroke-width=".8"/><path d="M4.500 3.800V6.600" stroke="#d0d0d0" stroke-width=".9"/><circle cx="4.500" cy="2.600" r=".55" fill="#d0d0d0"/></svg>
<svg class="a" style="left:708.500px;top:435px" width="8" height="8" viewBox="0 0 8 8"><path d="M1 7L1.500 5L5.500 1L7 2.500L3 6.500Z" fill="#d0d0d0"/></svg>
<svg class="a" style="left:722px;top:434.500px" width="10" height="9" viewBox="0 0 10 9"><rect x="4.500" y="1" width="5" height="7" fill="#d0d0d0"/><path d="M5.500 2.500H8.500M5.500 4.500H8.500M5.500 6.500H8.500" stroke="#555" stroke-width=".5"/><path d="M.5 4.500H4M2.500 3L4 4.500L2.500 6" fill="none" stroke="#d0d0d0" stroke-width=".9"/></svg>
<svg class="a" style="left:738px;top:435px" width="8" height="9" viewBox="0 0 8 9"><path d="M.8 2H7.200M2.800 2V1H5.200V2M1.600 2.400L2 8H6L6.400 2.400Z" fill="#8a8a8a" stroke="#8a8a8a" stroke-width=".6"/></svg>
<div class="a" style="left:561.600px;top:449.500px;width:203px;height:1px;background:#3a3a3a"></div>
<div class="a" style="left:561.600px;top:450.500px;width:203px;height:3.200px;background:#4a4a4a"></div>
<div class="a" style="left:657px;top:450.800px;width:12px;height:1.500px;background:#3c3c3c"></div>

</body></html>
